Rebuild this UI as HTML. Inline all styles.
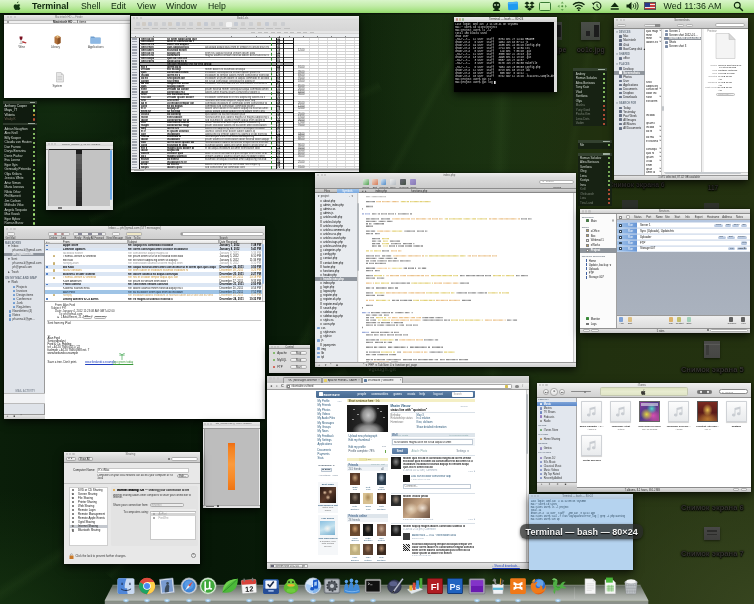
<!DOCTYPE html>
<html><head><meta charset="utf-8"><title>Desktop</title><style>
html,body{margin:0;padding:0;background:#0c200c;}
body{width:754px;height:604px;overflow:hidden;position:relative;font-family:"Liberation Sans",sans-serif;}
#d{position:absolute;left:0;top:0;width:754px;height:604px;overflow:hidden;will-change:transform;}
#d div,#d svg{position:absolute;box-sizing:border-box;}
#d .t{white-space:nowrap;line-height:1.22;}
#d .w{box-shadow:0 2.5px 8px rgba(0,0,0,0.7),0 0 1.5px rgba(0,0,0,.5);overflow:hidden;}
#d .m{font-family:"Liberation Mono",monospace;}
</style></head><body><div id="d">
<!-- wallpaper -->
<div style="left:0;top:0;width:754px;height:604px;background:radial-gradient(ellipse 260px 200px at 760px 610px, rgba(56,70,32,0.95), rgba(56,70,32,0) 100%),radial-gradient(ellipse 170px 150px at 0px 640px, rgba(24,54,18,0.9), rgba(24,54,18,0) 100%),radial-gradient(ellipse 120px 120px at 60px 90px, rgba(22,50,18,0.8), rgba(22,50,18,0) 100%),radial-gradient(ellipse 110px 260px at 470px 60px, rgba(28,54,18,0.55), rgba(28,54,18,0) 100%),linear-gradient(90deg,#0a1e09 0%,#061606 22%,#081a08 36%,#0e220a 46%,#142a0e 56%,#1a3010 66%,#21300f 80%,#243210 100%);"></div>
<div style="left:484px;top:0;width:22px;height:604px;transform:rotate(2deg);background:linear-gradient(90deg,rgba(70,110,50,0),rgba(70,110,50,0.13),rgba(70,110,50,0));"></div>
<div style="left:-40px;top:612px;width:460px;height:16px;transform-origin:0 50%;transform:rotate(-33deg);background:linear-gradient(180deg,rgba(120,170,80,0),rgba(120,170,80,0.06),rgba(120,170,80,0));"></div>
<div style="left:110px;top:570px;width:520px;height:14px;transform-origin:0 50%;transform:rotate(-50deg);background:linear-gradient(180deg,rgba(120,170,80,0),rgba(120,170,80,0.05),rgba(120,170,80,0));"></div>
<div style="left:300px;top:340px;width:400px;height:12px;transform-origin:0 50%;transform:rotate(-62deg);background:linear-gradient(180deg,rgba(120,170,80,0),rgba(120,170,80,0.05),rgba(120,170,80,0));"></div>
<div style="left:90px;top:215px;width:320px;height:12px;transform-origin:0 50%;transform:rotate(-25deg);background:linear-gradient(180deg,rgba(120,170,80,0),rgba(120,170,80,0.05),rgba(120,170,80,0));"></div>
<div style="left:560px;top:210px;width:260px;height:12px;transform-origin:0 50%;transform:rotate(-80deg);background:linear-gradient(180deg,rgba(120,170,80,0),rgba(120,170,80,0.04),rgba(120,170,80,0));"></div>
<div style="left:0px;top:160px;width:300px;height:18px;transform-origin:0 50%;transform:rotate(-12deg);background:linear-gradient(180deg,rgba(120,170,80,0),rgba(120,170,80,0.04),rgba(120,170,80,0));"></div>
<!-- deskicons -->
<div style="left:543px;top:22px;width:19px;height:18px;background:linear-gradient(180deg,#3e423c,#363a34);"><div style="left:13px;top:3px;width:5px;height:12px;background:#1c1c1c;"></div></div>
<div style="left:581.3px;top:22px;width:19.2px;height:18px;background:linear-gradient(180deg,#4a4e48,#40443e);box-shadow:0 1px 2px rgba(0,0,0,.5);"><div style="left:12.5px;top:3px;width:5px;height:12px;background:#1c1c1c;"></div><div style="left:5px;top:9px;width:4px;height:5px;background:#222;"></div></div>
<div class="t" style="left:489px;top:46.2px;width:120px;text-align:center;font-size:6.8px;font-weight:bold;color:#36362f;text-shadow:0 1px 1.500px #000,0 0 2px #000,0 0 1px #000;">Screen.jpe</div>
<div class="t" style="left:530.7px;top:46.2px;width:120px;text-align:center;font-size:6.8px;font-weight:bold;color:#36362f;text-shadow:0 1px 1.500px #000,0 0 2px #000,0 0 1px #000;">оо1с.jpg</div>
<div class="t" style="left:576.5px;top:181.2px;width:120px;text-align:center;font-size:6.8px;font-weight:bold;color:#36362f;text-shadow:0 1px 1.500px #000,0 0 2px #000,0 0 1px #000;">Снимок экрана 6</div>
<div class="t" style="left:653px;top:183.5px;width:120px;text-align:center;font-size:6.5px;font-weight:bold;color:#36362f;text-shadow:0 1px 1.500px #000,0 0 2px #000,0 0 1px #000;">117</div>
<div style="left:622px;top:200px;width:16px;height:9px;background:#2c302a;"></div>
<div style="left:704px;top:203px;width:15px;height:7px;background:#30342c;"></div>
<div style="left:704px;top:341.2px;width:16.2px;height:17px;background:linear-gradient(180deg,#4e4e4c,#464644);box-shadow:0 1px 2px rgba(0,0,0,.5);"><div style="left:2px;top:3px;width:3px;height:11px;background:#3c3c3a;"></div><div style="left:0px;top:2.5px;width:16.2px;height:0.6px;background:#5c5c5a;"></div></div>
<div class="t" style="left:652.3px;top:365.4px;width:120px;text-align:center;font-size:7.6px;font-weight:bold;color:#36362f;text-shadow:0 1px 1.500px #000,0 0 2px #000,0 0 1px #000;">Снимок экрана 5</div>
<div class="t" style="left:652.3px;top:503.2px;width:120px;text-align:center;font-size:7.6px;font-weight:bold;color:#36362f;text-shadow:0 1px 1.500px #000,0 0 2px #000,0 0 1px #000;">Снимок экрана 6</div>
<div style="left:704px;top:527px;width:16px;height:13px;background:linear-gradient(180deg,#484846,#3e3e3c);box-shadow:0 1px 2px rgba(0,0,0,.5);"><div style="left:3px;top:3px;width:10px;height:1.5px;background:#2c2c2a;"></div><div style="left:3px;top:6.5px;width:10px;height:1.5px;background:#2c2c2a;"></div></div>
<div class="t" style="left:652.3px;top:549.2px;width:120px;text-align:center;font-size:7.6px;font-weight:bold;color:#36362f;text-shadow:0 1px 1.500px #000,0 0 2px #000,0 0 1px #000;">Снимок экрана 7</div>
<div class="t" style="left:368.600px;top:366.200px;font-size:5.600px;color:#55624f;letter-spacing:0.150px;">vgough.git</div>
<!-- finder1 -->
<div class="w" style="left:4px;top:15px;width:126px;height:83px;background:#fff;"><div style="left:0px;top:0px;width:126px;height:5px;background:linear-gradient(180deg,#ececec,#d2d2d2);"></div><div style="left:0px;top:5px;width:126px;height:4.2px;background:#efefef;border-top:0.5px solid #b8b8b8;border-bottom:0.5px solid #c8c8c8;"></div><div style="left:2.5px;top:1.2px;width:2.2px;height:2.2px;border-radius:50%;background:#c4c4c4;"></div><div style="left:6.1px;top:1.2px;width:2.2px;height:2.2px;border-radius:50%;background:#c4c4c4;"></div><div style="left:9.7px;top:1.2px;width:2.2px;height:2.2px;border-radius:50%;background:#c4c4c4;"></div><div class="t" style="left:51px;top:1.2px;font-size:2.6px;color:#777;">Macintosh HD — Finder</div><div class="t" style="left:49px;top:5.9px;font-size:2.9px;color:#222;"><b>Macintosh HD </b>— 4 items</div><div style="left:3px;top:6.1px;width:2px;height:2px;background:#888;border-radius:50%;"></div><svg style="left:13px;top:20px" width="11" height="11" viewBox="0 0 22 22"><path d="M5 3h6c0 5-1 7-3 7s-3-2-3-7z" fill="#7a1020"/><path d="M8 10v6M5 17h6" stroke="#999" stroke-width="1.3"/><path d="M11 12l8 3-1 2-8-2z" fill="#b03030"/></svg><div class="t" style="left:14.5px;top:31px;font-size:2.9px;color:#444;">Wine</div><svg style="left:49px;top:19px" width="9" height="11" viewBox="0 0 18 22"><path d="M3 6l6-3 6 3v12l-6 3-6-3z" fill="#b0703a"/><path d="M9 9v12l6-3V6z" fill="#8a5226"/><path d="M3 6l6 3 6-3-6-3z" fill="#d29a60"/><path d="M7 2l2 6 2-6z" fill="#e8d0a0"/></svg><div class="t" style="left:47px;top:31px;font-size:2.9px;color:#444;">Library</div><svg style="left:86px;top:20px" width="11" height="9" viewBox="0 0 22 18"><path d="M1 3h7l2 2h11v12H1z" fill="#6f9fd0"/><path d="M1 6h20v11H1z" fill="#8db8e4"/></svg><div class="t" style="left:84px;top:31px;font-size:2.9px;color:#444;">Applications</div><svg style="left:51.500px;top:57px" width="8" height="10.500" viewBox="0 0 16 21"><path d="M1 1h9l5 5v14H1z" fill="#e6e6e6" stroke="#aaa" stroke-width="1"/><path d="M10 1v5h5z" fill="#c8c8c8"/><path d="M3 9h9M3 12h9M3 15h9" stroke="#bbb" stroke-width="1"/></svg><div class="t" style="left:48.5px;top:69.5px;font-size:2.9px;color:#444;">System</div></div>
<!-- sheet -->
<div class="w" style="left:131px;top:16px;width:228px;height:155.5px;background:#fff;"><div style="left:0px;top:0px;width:228px;height:3.5px;background:linear-gradient(180deg,#ececec,#d6d6d6);"></div><div style="left:2.0px;top:0.8px;width:2px;height:2px;border-radius:50%;background:#c6c6c6;"></div><div style="left:5.4px;top:0.8px;width:2px;height:2px;border-radius:50%;background:#c6c6c6;"></div><div style="left:8.8px;top:0.8px;width:2px;height:2px;border-radius:50%;background:#c6c6c6;"></div><div class="t" style="left:106px;top:0.8px;font-size:2.6px;color:#666;">Book1.xls</div><div style="left:0px;top:3.5px;width:228px;height:14px;background:linear-gradient(180deg,#dedede,#d4d4d4);"></div><div style="left:5px;top:6px;width:4px;height:4px;background:#b8bcc4;border-radius:0.8px;opacity:0.45;"></div><div style="left:11px;top:6px;width:4px;height:4px;background:#c4b8a8;border-radius:0.8px;opacity:0.45;"></div><div style="left:17px;top:6px;width:4px;height:4px;background:#a8b4c8;border-radius:0.8px;opacity:0.45;"></div><div style="left:23px;top:6px;width:4px;height:4px;background:#bcbcbc;border-radius:0.8px;opacity:0.45;"></div><div style="left:31px;top:6px;width:4px;height:4px;background:#b8bcc4;border-radius:0.8px;opacity:0.45;"></div><div style="left:37px;top:6px;width:4px;height:4px;background:#c4b8a8;border-radius:0.8px;opacity:0.45;"></div><div style="left:45px;top:6px;width:4px;height:4px;background:#a8b4c8;border-radius:0.8px;opacity:0.45;"></div><div style="left:51px;top:6px;width:4px;height:4px;background:#bcbcbc;border-radius:0.8px;opacity:0.45;"></div><div style="left:58px;top:6px;width:4px;height:4px;background:#b8bcc4;border-radius:0.8px;opacity:0.45;"></div><div style="left:66px;top:6px;width:4px;height:4px;background:#c4b8a8;border-radius:0.8px;opacity:0.45;"></div><div style="left:73px;top:6px;width:4px;height:4px;background:#a8b4c8;border-radius:0.8px;opacity:0.45;"></div><div style="left:80px;top:6px;width:4px;height:4px;background:#bcbcbc;border-radius:0.8px;opacity:0.45;"></div><div style="left:88px;top:6px;width:4px;height:4px;background:#b8bcc4;border-radius:0.8px;opacity:0.45;"></div><div style="left:95px;top:6px;width:4px;height:4px;background:#c4b8a8;border-radius:0.8px;opacity:0.45;"></div><div style="left:103px;top:6px;width:4px;height:4px;background:#a8b4c8;border-radius:0.8px;opacity:0.45;"></div><div style="left:110px;top:6px;width:4px;height:4px;background:#bcbcbc;border-radius:0.8px;opacity:0.45;"></div><div style="left:118px;top:6px;width:4px;height:4px;background:#b8bcc4;border-radius:0.8px;opacity:0.45;"></div><div style="left:126px;top:6px;width:4px;height:4px;background:#c4b8a8;border-radius:0.8px;opacity:0.45;"></div><div style="left:134px;top:6px;width:4px;height:4px;background:#a8b4c8;border-radius:0.8px;opacity:0.45;"></div><div style="left:142px;top:6px;width:4px;height:4px;background:#bcbcbc;border-radius:0.8px;opacity:0.45;"></div><div style="left:150px;top:6px;width:4px;height:4px;background:#b8bcc4;border-radius:0.8px;opacity:0.45;"></div><div style="left:95px;top:5.5px;width:6px;height:5px;background:#f4f4f4;border-radius:1px;"></div><div style="left:3.0px;top:12.2px;width:6.5px;height:1.3px;background:#aaa;opacity:0.55;"></div><div style="left:11.8px;top:12.2px;width:6.5px;height:1.3px;background:#aaa;opacity:0.55;"></div><div style="left:20.6px;top:12.2px;width:6.5px;height:1.3px;background:#aaa;opacity:0.55;"></div><div style="left:29.400000000000002px;top:12.2px;width:6.5px;height:1.3px;background:#aaa;opacity:0.55;"></div><div style="left:38.2px;top:12.2px;width:6.5px;height:1.3px;background:#aaa;opacity:0.55;"></div><div style="left:47.0px;top:12.2px;width:6.5px;height:1.3px;background:#aaa;opacity:0.55;"></div><div style="left:55.800000000000004px;top:12.2px;width:6.5px;height:1.3px;background:#aaa;opacity:0.55;"></div><div style="left:64.60000000000001px;top:12.2px;width:6.5px;height:1.3px;background:#aaa;opacity:0.55;"></div><div style="left:73.4px;top:12.2px;width:6.5px;height:1.3px;background:#aaa;opacity:0.55;"></div><div style="left:82.2px;top:12.2px;width:6.5px;height:1.3px;background:#aaa;opacity:0.55;"></div><div style="left:91.0px;top:12.2px;width:6.5px;height:1.3px;background:#aaa;opacity:0.55;"></div><div style="left:99.80000000000001px;top:12.2px;width:6.5px;height:1.3px;background:#aaa;opacity:0.55;"></div><div style="left:108.60000000000001px;top:12.2px;width:6.5px;height:1.3px;background:#aaa;opacity:0.55;"></div><div style="left:117.4px;top:12.2px;width:6.5px;height:1.3px;background:#aaa;opacity:0.55;"></div><div style="left:126.20000000000002px;top:12.2px;width:6.5px;height:1.3px;background:#aaa;opacity:0.55;"></div><div style="left:135.0px;top:12.2px;width:6.5px;height:1.3px;background:#aaa;opacity:0.55;"></div><div style="left:143.8px;top:12.2px;width:6.5px;height:1.3px;background:#aaa;opacity:0.55;"></div><div style="left:152.60000000000002px;top:12.2px;width:6.5px;height:1.3px;background:#aaa;opacity:0.55;"></div><div style="left:0px;top:15.2px;width:228px;height:2.3px;background:#e6e6e6;"></div><div style="left:120.0px;top:15.7px;width:4px;height:1.2px;background:#999;opacity:0.5;"></div><div style="left:126.5px;top:15.7px;width:4px;height:1.2px;background:#999;opacity:0.5;"></div><div style="left:133.0px;top:15.7px;width:4px;height:1.2px;background:#999;opacity:0.5;"></div><div style="left:139.5px;top:15.7px;width:4px;height:1.2px;background:#999;opacity:0.5;"></div><div style="left:146.0px;top:15.7px;width:4px;height:1.2px;background:#999;opacity:0.5;"></div><div style="left:152.5px;top:15.7px;width:4px;height:1.2px;background:#999;opacity:0.5;"></div><div style="left:159.0px;top:15.7px;width:4px;height:1.2px;background:#999;opacity:0.5;"></div><div style="left:165.5px;top:15.7px;width:4px;height:1.2px;background:#999;opacity:0.5;"></div><div style="left:172.0px;top:15.7px;width:4px;height:1.2px;background:#999;opacity:0.5;"></div><div style="left:178.5px;top:15.7px;width:4px;height:1.2px;background:#999;opacity:0.5;"></div><div style="left:0px;top:17.5px;width:228px;height:4px;background:#eceef0;border-bottom:0.5px solid #999;"></div><div style="left:0px;top:21.5px;width:228px;height:131.3px;background:#fff;"></div><div style="left:0px;top:21.5px;width:8px;height:131.3px;background:#e6e8ec;"></div><div style="left:4px;top:19.6px;width:1.3px;height:1.3px;background:#555;opacity:.7"></div><div style="left:22px;top:19.6px;width:1.3px;height:1.3px;background:#555;opacity:.7"></div><div style="left:55px;top:19.6px;width:1.3px;height:1.3px;background:#555;opacity:.7"></div><div style="left:100px;top:19.6px;width:1.3px;height:1.3px;background:#555;opacity:.7"></div><div style="left:125px;top:19.6px;width:1.3px;height:1.3px;background:#555;opacity:.7"></div><div style="left:138px;top:19.6px;width:1.3px;height:1.3px;background:#555;opacity:.7"></div><div style="left:148px;top:19.6px;width:1.3px;height:1.3px;background:#555;opacity:.7"></div><div style="left:158px;top:19.6px;width:1.3px;height:1.3px;background:#555;opacity:.7"></div><div style="left:172px;top:19.6px;width:1.3px;height:1.3px;background:#555;opacity:.7"></div><div style="left:186px;top:19.6px;width:1.3px;height:1.3px;background:#555;opacity:.7"></div><div style="left:200px;top:19.6px;width:1.3px;height:1.3px;background:#555;opacity:.7"></div><div style="left:214px;top:19.6px;width:1.3px;height:1.3px;background:#555;opacity:.7"></div><div style="left:162px;top:21.5px;width:0.5px;height:131.3px;background:#dcdcdc;"></div><div style="left:178px;top:21.5px;width:0.5px;height:131.3px;background:#dcdcdc;"></div><div style="left:187px;top:21.5px;width:0.5px;height:131.3px;background:#dcdcdc;"></div><div style="left:196px;top:21.5px;width:0.5px;height:131.3px;background:#dcdcdc;"></div><div style="left:205px;top:21.5px;width:0.5px;height:131.3px;background:#dcdcdc;"></div><div style="left:214px;top:21.5px;width:0.5px;height:131.3px;background:#dcdcdc;"></div><div style="left:223px;top:21.5px;width:0.5px;height:131.3px;background:#dcdcdc;"></div><div style="left:1.2px;top:22.1px;width:5.3px;height:1.5px;background:#5a6070;opacity:.5"></div><div style="left:8px;top:23.893617021276597px;width:220px;height:0.4px;background:#d2d2d2;"></div><div style="left:1.2px;top:24.893617021276597px;width:5.3px;height:1.5px;background:#5a6070;opacity:.5"></div><div style="left:8px;top:26.687234042553193px;width:220px;height:0.4px;background:#d2d2d2;"></div><div style="left:1.2px;top:27.687234042553193px;width:5.3px;height:1.5px;background:#5a6070;opacity:.5"></div><div style="left:8px;top:29.48085106382979px;width:220px;height:0.4px;background:#d2d2d2;"></div><div style="left:1.2px;top:30.48085106382979px;width:5.3px;height:1.5px;background:#5a6070;opacity:.5"></div><div style="left:8px;top:32.274468085106385px;width:220px;height:0.4px;background:#d2d2d2;"></div><div style="left:1.2px;top:33.274468085106385px;width:5.3px;height:1.5px;background:#5a6070;opacity:.5"></div><div style="left:8px;top:35.06808510638298px;width:220px;height:0.4px;background:#d2d2d2;"></div><div style="left:1.2px;top:36.06808510638298px;width:5.3px;height:1.5px;background:#5a6070;opacity:.5"></div><div style="left:8px;top:37.861702127659576px;width:220px;height:0.4px;background:#d2d2d2;"></div><div style="left:1.2px;top:38.861702127659576px;width:5.3px;height:1.5px;background:#5a6070;opacity:.5"></div><div style="left:8px;top:40.65531914893617px;width:220px;height:0.4px;background:#d2d2d2;"></div><div style="left:1.2px;top:41.65531914893617px;width:5.3px;height:1.5px;background:#5a6070;opacity:.5"></div><div style="left:8px;top:43.44893617021277px;width:220px;height:0.4px;background:#d2d2d2;"></div><div style="left:1.2px;top:44.44893617021277px;width:5.3px;height:1.5px;background:#5a6070;opacity:.5"></div><div style="left:8px;top:46.242553191489364px;width:220px;height:0.4px;background:#d2d2d2;"></div><div style="left:1.2px;top:47.242553191489364px;width:5.3px;height:1.5px;background:#5a6070;opacity:.5"></div><div style="left:8px;top:49.03617021276596px;width:220px;height:0.4px;background:#d2d2d2;"></div><div style="left:8px;top:46.64255319148936px;width:154px;height:2.793617021276596px;background:#b4b4b4;"></div><div style="left:1.2px;top:50.03617021276596px;width:5.3px;height:1.5px;background:#5a6070;opacity:.5"></div><div style="left:8px;top:51.829787234042556px;width:220px;height:0.4px;background:#d2d2d2;"></div><div style="left:1.2px;top:52.829787234042556px;width:5.3px;height:1.5px;background:#5a6070;opacity:.5"></div><div style="left:8px;top:54.62340425531915px;width:220px;height:0.4px;background:#d2d2d2;"></div><div style="left:1.2px;top:55.62340425531915px;width:5.3px;height:1.5px;background:#5a6070;opacity:.5"></div><div style="left:8px;top:57.41702127659575px;width:220px;height:0.4px;background:#d2d2d2;"></div><div style="left:1.2px;top:58.41702127659575px;width:5.3px;height:1.5px;background:#5a6070;opacity:.5"></div><div style="left:8px;top:60.21063829787234px;width:220px;height:0.4px;background:#d2d2d2;"></div><div style="left:1.2px;top:61.21063829787234px;width:5.3px;height:1.5px;background:#5a6070;opacity:.5"></div><div style="left:8px;top:63.00425531914894px;width:220px;height:0.4px;background:#d2d2d2;"></div><div style="left:1.2px;top:64.00425531914894px;width:5.3px;height:1.5px;background:#5a6070;opacity:.5"></div><div style="left:8px;top:65.79787234042553px;width:220px;height:0.4px;background:#d2d2d2;"></div><div style="left:1.2px;top:66.79787234042553px;width:5.3px;height:1.5px;background:#5a6070;opacity:.5"></div><div style="left:8px;top:68.59148936170212px;width:220px;height:0.4px;background:#d2d2d2;"></div><div style="left:1.2px;top:69.59148936170212px;width:5.3px;height:1.5px;background:#5a6070;opacity:.5"></div><div style="left:8px;top:71.3851063829787px;width:220px;height:0.4px;background:#d2d2d2;"></div><div style="left:1.2px;top:72.38510638297872px;width:5.3px;height:1.5px;background:#5a6070;opacity:.5"></div><div style="left:8px;top:74.17872340425532px;width:220px;height:0.4px;background:#d2d2d2;"></div><div style="left:1.2px;top:75.17872340425532px;width:5.3px;height:1.5px;background:#5a6070;opacity:.5"></div><div style="left:8px;top:76.97234042553191px;width:220px;height:0.4px;background:#d2d2d2;"></div><div style="left:1.2px;top:77.97234042553191px;width:5.3px;height:1.5px;background:#5a6070;opacity:.5"></div><div style="left:8px;top:79.7659574468085px;width:220px;height:0.4px;background:#d2d2d2;"></div><div style="left:1.2px;top:80.7659574468085px;width:5.3px;height:1.5px;background:#5a6070;opacity:.5"></div><div style="left:8px;top:82.55957446808509px;width:220px;height:0.4px;background:#d2d2d2;"></div><div style="left:1.2px;top:83.5595744680851px;width:5.3px;height:1.5px;background:#5a6070;opacity:.5"></div><div style="left:8px;top:85.3531914893617px;width:220px;height:0.4px;background:#d2d2d2;"></div><div style="left:1.2px;top:86.3531914893617px;width:5.3px;height:1.5px;background:#5a6070;opacity:.5"></div><div style="left:8px;top:88.1468085106383px;width:220px;height:0.4px;background:#d2d2d2;"></div><div style="left:1.2px;top:89.1468085106383px;width:5.3px;height:1.5px;background:#5a6070;opacity:.5"></div><div style="left:8px;top:90.94042553191488px;width:220px;height:0.4px;background:#d2d2d2;"></div><div style="left:1.2px;top:91.94042553191488px;width:5.3px;height:1.5px;background:#5a6070;opacity:.5"></div><div style="left:8px;top:93.73404255319147px;width:220px;height:0.4px;background:#d2d2d2;"></div><div style="left:1.2px;top:94.73404255319149px;width:5.3px;height:1.5px;background:#5a6070;opacity:.5"></div><div style="left:8px;top:96.52765957446809px;width:220px;height:0.4px;background:#d2d2d2;"></div><div style="left:1.2px;top:97.52765957446809px;width:5.3px;height:1.5px;background:#5a6070;opacity:.5"></div><div style="left:8px;top:99.32127659574468px;width:220px;height:0.4px;background:#d2d2d2;"></div><div style="left:1.2px;top:100.32127659574468px;width:5.3px;height:1.5px;background:#5a6070;opacity:.5"></div><div style="left:8px;top:102.11489361702127px;width:220px;height:0.4px;background:#d2d2d2;"></div><div style="left:1.2px;top:103.11489361702127px;width:5.3px;height:1.5px;background:#5a6070;opacity:.5"></div><div style="left:8px;top:104.90851063829786px;width:220px;height:0.4px;background:#d2d2d2;"></div><div style="left:1.2px;top:105.90851063829787px;width:5.3px;height:1.5px;background:#5a6070;opacity:.5"></div><div style="left:8px;top:107.70212765957447px;width:220px;height:0.4px;background:#d2d2d2;"></div><div style="left:1.2px;top:108.70212765957447px;width:5.3px;height:1.5px;background:#5a6070;opacity:.5"></div><div style="left:8px;top:110.49574468085106px;width:220px;height:0.4px;background:#d2d2d2;"></div><div style="left:1.2px;top:111.49574468085106px;width:5.3px;height:1.5px;background:#5a6070;opacity:.5"></div><div style="left:8px;top:113.28936170212765px;width:220px;height:0.4px;background:#d2d2d2;"></div><div style="left:1.2px;top:114.28936170212765px;width:5.3px;height:1.5px;background:#5a6070;opacity:.5"></div><div style="left:8px;top:116.08297872340424px;width:220px;height:0.4px;background:#d2d2d2;"></div><div style="left:1.2px;top:117.08297872340425px;width:5.3px;height:1.5px;background:#5a6070;opacity:.5"></div><div style="left:8px;top:118.87659574468086px;width:220px;height:0.4px;background:#d2d2d2;"></div><div style="left:1.2px;top:119.87659574468086px;width:5.3px;height:1.5px;background:#5a6070;opacity:.5"></div><div style="left:8px;top:121.67021276595744px;width:220px;height:0.4px;background:#d2d2d2;"></div><div style="left:1.2px;top:122.67021276595744px;width:5.3px;height:1.5px;background:#5a6070;opacity:.5"></div><div style="left:8px;top:124.46382978723403px;width:220px;height:0.4px;background:#d2d2d2;"></div><div style="left:1.2px;top:125.46382978723403px;width:5.3px;height:1.5px;background:#5a6070;opacity:.5"></div><div style="left:8px;top:127.25744680851062px;width:220px;height:0.4px;background:#d2d2d2;"></div><div style="left:1.2px;top:128.25744680851065px;width:5.3px;height:1.5px;background:#5a6070;opacity:.5"></div><div style="left:8px;top:130.05106382978724px;width:220px;height:0.4px;background:#d2d2d2;"></div><div style="left:1.2px;top:131.05106382978724px;width:5.3px;height:1.5px;background:#5a6070;opacity:.5"></div><div style="left:8px;top:132.84468085106383px;width:220px;height:0.4px;background:#d2d2d2;"></div><div style="left:1.2px;top:133.84468085106383px;width:5.3px;height:1.5px;background:#5a6070;opacity:.5"></div><div style="left:8px;top:135.63829787234042px;width:220px;height:0.4px;background:#d2d2d2;"></div><div style="left:1.2px;top:136.63829787234042px;width:5.3px;height:1.5px;background:#5a6070;opacity:.5"></div><div style="left:8px;top:138.431914893617px;width:220px;height:0.4px;background:#d2d2d2;"></div><div style="left:1.2px;top:139.431914893617px;width:5.3px;height:1.5px;background:#5a6070;opacity:.5"></div><div style="left:8px;top:141.2255319148936px;width:220px;height:0.4px;background:#d2d2d2;"></div><div style="left:1.2px;top:142.22553191489362px;width:5.3px;height:1.5px;background:#5a6070;opacity:.5"></div><div style="left:8px;top:144.0191489361702px;width:220px;height:0.4px;background:#d2d2d2;"></div><div style="left:1.2px;top:145.0191489361702px;width:5.3px;height:1.5px;background:#5a6070;opacity:.5"></div><div style="left:8px;top:146.8127659574468px;width:220px;height:0.4px;background:#d2d2d2;"></div><div style="left:1.2px;top:147.8127659574468px;width:5.3px;height:1.5px;background:#5a6070;opacity:.5"></div><div style="left:8px;top:149.6063829787234px;width:220px;height:0.4px;background:#d2d2d2;"></div><div style="left:1.2px;top:150.60638297872342px;width:5.3px;height:1.5px;background:#5a6070;opacity:.5"></div><div style="left:8px;top:152.4px;width:220px;height:0.4px;background:#d2d2d2;"></div><div style="left:8px;top:23.993617021276595px;width:154px;height:0.6px;background:#555;"></div><div style="left:8px;top:32.374468085106386px;width:154px;height:0.6px;background:#555;"></div><div style="left:8px;top:40.755319148936174px;width:154px;height:0.6px;background:#555;"></div><div style="left:8px;top:54.72340425531915px;width:154px;height:0.6px;background:#555;"></div><div style="left:8px;top:60.310638297872345px;width:154px;height:0.6px;background:#555;"></div><div style="left:8px;top:71.48510638297873px;width:154px;height:0.6px;background:#555;"></div><div style="left:8px;top:77.07234042553192px;width:154px;height:0.6px;background:#555;"></div><div style="left:8px;top:82.65957446808511px;width:154px;height:0.6px;background:#555;"></div><div style="left:8px;top:88.2468085106383px;width:154px;height:0.6px;background:#555;"></div><div style="left:8px;top:110.59574468085107px;width:154px;height:0.6px;background:#555;"></div><div style="left:8px;top:124.56382978723404px;width:154px;height:0.6px;background:#555;"></div><div style="left:8px;top:135.7382978723404px;width:154px;height:0.6px;background:#555;"></div><div style="left:8px;top:146.9127659574468px;width:154px;height:0.6px;background:#555;"></div><div style="left:8px;top:26.58723404255319px;width:154px;height:1px;background:#111;"></div><div style="left:8px;top:46.14255319148936px;width:154px;height:1px;background:#111;"></div><div style="left:8px;top:48.93617021276596px;width:154px;height:1px;background:#111;"></div><div style="left:8px;top:65.69787234042553px;width:154px;height:1px;background:#111;"></div><div style="left:8px;top:96.4276595744681px;width:154px;height:1px;background:#111;"></div><div style="left:8px;top:104.80851063829788px;width:154px;height:1px;background:#111;"></div><div style="left:8px;top:118.77659574468086px;width:154px;height:1px;background:#111;"></div><div style="left:8px;top:129.95106382978724px;width:154px;height:1px;background:#111;"></div><div style="left:8px;top:141.12553191489363px;width:154px;height:1px;background:#111;"></div><div style="left:8px;top:21.5px;width:1px;height:131.3px;background:#111;"></div><div style="left:145px;top:21.5px;width:1px;height:131.3px;background:#111;"></div><div style="left:152px;top:21.5px;width:1px;height:131.3px;background:#111;"></div><div style="left:162px;top:21.5px;width:1.1px;height:131.3px;background:#111;"></div><div style="left:139.5px;top:21.5px;width:0.6px;height:131.3px;border-left:0.6px dashed #2a8a2a;"></div><div class="t" style="left:10px;top:21.6px;font-size:2.7px;color:#000;width:13px;height:3.2px;overflow:hidden;font-weight:bold;">Item ad do exercitation</div><div class="t" style="left:36px;top:21.6px;font-size:2.7px;color:#000;width:30px;height:3.2px;overflow:hidden;font-weight:bold;">sit amet adipiscing quis sit commodo</div><div class="t" style="left:146.3px;top:21.6px;font-size:2.6px;color:#000;font-weight:bold;height:3.2px;">37</div><div class="t" style="left:10px;top:24.393617021276597px;font-size:2.7px;color:#000;width:13px;height:3.2px;overflow:hidden;font-weight:bold;">Item dolor consectetur laboris</div><div class="t" style="left:36px;top:24.393617021276597px;font-size:2.7px;color:#000;width:27px;height:3.2px;overflow:hidden;font-weight:bold;">amet et consectetur laboris sit elit</div><div class="t" style="left:146.3px;top:24.393617021276597px;font-size:2.6px;color:#000;font-weight:bold;height:3.2px;">38</div><div class="t" style="left:10px;top:27.187234042553193px;font-size:2.7px;color:#000;width:13px;height:3.2px;overflow:hidden;font-weight:bold;">Item sit exercitation sit</div><div class="t" style="left:36px;top:27.187234042553193px;font-size:2.7px;color:#000;width:22px;height:3.2px;overflow:hidden;font-weight:bold;">dolor sed aliqua ullamco do elit</div><div class="t" style="left:146.3px;top:27.187234042553193px;font-size:2.6px;color:#000;font-weight:bold;height:3.2px;">83</div><div class="t" style="left:10px;top:29.98085106382979px;font-size:2.7px;color:#000;width:13px;height:3.2px;overflow:hidden;font-weight:bold;">Item enim tempor adipiscing</div><div class="t" style="left:36px;top:29.98085106382979px;font-size:2.7px;color:#000;width:22px;height:3.2px;overflow:hidden;font-weight:bold;">quis adipiscing amet sit ut ea</div><div class="t" style="left:74px;top:29.98085106382979px;font-size:2.6px;color:#3a3a3a;width:64px;height:3.2px;overflow:hidden;">ad aliquip aliquip quis enim et tempor et consectetur enim consequat ea minim nisi</div><div class="t" style="left:146.3px;top:29.98085106382979px;font-size:2.6px;color:#000;font-weight:bold;height:3.2px;">46</div><div class="t" style="left:10px;top:32.774468085106385px;font-size:2.7px;color:#000;width:13px;height:3.2px;overflow:hidden;font-weight:bold;">Item amet elit commodo</div><div class="t" style="left:36px;top:32.774468085106385px;font-size:2.7px;color:#000;width:20px;height:3.2px;overflow:hidden;font-weight:bold;">eiusmod minim do ea ullamco dolor</div><div class="t" style="left:146.3px;top:32.774468085106385px;font-size:2.6px;color:#000;font-weight:bold;height:3.2px;">19</div><div class="t" style="left:10px;top:35.56808510638298px;font-size:2.7px;color:#000;width:13px;height:3.2px;overflow:hidden;font-weight:bold;">Item ad minim veniam</div><div class="t" style="left:36px;top:35.56808510638298px;font-size:2.7px;color:#000;width:13px;height:3.2px;overflow:hidden;font-weight:bold;">aliquip amet consectetur magna ex amet</div><div class="t" style="left:74px;top:35.56808510638298px;font-size:2.6px;color:#3a3a3a;width:50px;height:3.2px;overflow:hidden;">enim nisi aliqua nostrud veniam ipsum aliquip veniam eiusmod elit ea sit ut aliqua</div><div class="t" style="left:146.3px;top:35.56808510638298px;font-size:2.6px;color:#000;font-weight:bold;height:3.2px;">26</div><div class="t" style="left:10px;top:38.361702127659576px;font-size:2.7px;color:#000;width:13px;height:3.2px;overflow:hidden;font-weight:bold;">Item et exercitation exercitation</div><div class="t" style="left:36px;top:38.361702127659576px;font-size:2.7px;color:#000;width:13px;height:3.2px;overflow:hidden;font-weight:bold;">consectetur eiusmod nisi exercitation magna sed</div><div class="t" style="left:74px;top:38.361702127659576px;font-size:2.6px;color:#3a3a3a;width:64px;height:3.2px;overflow:hidden;">magna ullamco veniam nostrud labore do consectetur tempor do labore labore lorem ea tempor</div><div class="t" style="left:146.3px;top:38.361702127659576px;font-size:2.6px;color:#000;font-weight:bold;height:3.2px;">43</div><div class="t" style="left:10px;top:41.15531914893617px;font-size:2.7px;color:#000;width:13px;height:3.2px;overflow:hidden;font-weight:bold;">Item aliqua lorem do</div><div class="t" style="left:36px;top:41.15531914893617px;font-size:2.7px;color:#000;width:20px;height:3.2px;overflow:hidden;font-weight:bold;">quis ad sed commodo sit aliquip</div><div class="t" style="left:146.3px;top:41.15531914893617px;font-size:2.6px;color:#000;font-weight:bold;height:3.2px;">97</div><div class="t" style="left:10px;top:43.94893617021277px;font-size:2.7px;color:#000;width:13px;height:3.2px;overflow:hidden;font-weight:bold;">Item exercitation exercitation exercitation</div><div class="t" style="left:36px;top:43.94893617021277px;font-size:2.7px;color:#000;width:20px;height:3.2px;overflow:hidden;font-weight:bold;">adipiscing ex exercitation sit incididunt amet</div><div class="t" style="left:146.3px;top:43.94893617021277px;font-size:2.6px;color:#000;font-weight:bold;height:3.2px;">66</div><div class="t" style="left:36px;top:46.742553191489364px;font-size:2.7px;color:#000;height:3px;"><b>Section heading text for this group</b></div><div class="t" style="left:10px;top:49.53617021276596px;font-size:2.7px;color:#000;width:6px;height:3.2px;overflow:hidden;font-weight:bold;">elit minim sit</div><div class="t" style="left:36px;top:49.53617021276596px;font-size:2.7px;color:#000;width:14px;height:3.2px;overflow:hidden;font-weight:bold;">lorem do adipiscing quis ipsum amet</div><div class="t" style="left:146.3px;top:49.53617021276596px;font-size:2.6px;color:#000;font-weight:bold;height:3.2px;">88</div><div class="t" style="left:167px;top:49.53617021276596px;font-size:2.6px;color:#333;height:3.2px;">91.00</div><div class="t" style="left:10px;top:52.329787234042556px;font-size:2.7px;color:#000;width:10px;height:3.2px;overflow:hidden;font-weight:bold;">veniam quis ex</div><div class="t" style="left:36px;top:52.329787234042556px;font-size:2.7px;color:#000;width:14px;height:3.2px;overflow:hidden;font-weight:bold;">elit ea aliquip ex ex enim</div><div class="t" style="left:74px;top:52.329787234042556px;font-size:2.6px;color:#3a3a3a;width:40px;height:3.2px;overflow:hidden;">minim dolore ex eiusmod consequat ipsum ut consequat quis do ipsum consequat enim consectetur</div><div class="t" style="left:146.3px;top:52.329787234042556px;font-size:2.6px;color:#000;font-weight:bold;height:3.2px;">99</div><div class="t" style="left:10px;top:55.12340425531915px;font-size:2.7px;color:#000;width:6px;height:3.2px;overflow:hidden;font-weight:bold;">quis eiusmod veniam</div><div class="t" style="left:36px;top:55.12340425531915px;font-size:2.7px;color:#000;width:22px;height:3.2px;overflow:hidden;font-weight:bold;">commodo minim labore incididunt et exercitation</div><div class="t" style="left:74px;top:55.12340425531915px;font-size:2.6px;color:#3a3a3a;width:55px;height:3.2px;overflow:hidden;">incididunt consequat ea veniam ipsum ipsum magna ex dolore incididunt veniam nisi veniam quis</div><div class="t" style="left:146.3px;top:55.12340425531915px;font-size:2.6px;color:#000;font-weight:bold;height:3.2px;">20</div><div class="t" style="left:167px;top:55.12340425531915px;font-size:2.6px;color:#333;height:3.2px;">39.00</div><div class="t" style="left:10px;top:57.91702127659575px;font-size:2.7px;color:#000;width:8px;height:3.2px;overflow:hidden;font-weight:bold;">incididunt minim ut</div><div class="t" style="left:36px;top:57.91702127659575px;font-size:2.7px;color:#000;width:13px;height:3.2px;overflow:hidden;font-weight:bold;">lorem ex veniam consectetur elit nostrud</div><div class="t" style="left:74px;top:57.91702127659575px;font-size:2.6px;color:#3a3a3a;width:64px;height:3.2px;overflow:hidden;">incididunt ex tempor laboris minim consectetur exercitation aliquip exercitation consectetur eiusmod eiusmod sed ipsum</div><div class="t" style="left:146.3px;top:57.91702127659575px;font-size:2.6px;color:#000;font-weight:bold;height:3.2px;">29</div><div class="t" style="left:167px;top:57.91702127659575px;font-size:2.6px;color:#333;height:3.2px;">69.00</div><div class="t" style="left:10px;top:60.71063829787234px;font-size:2.7px;color:#000;width:7px;height:3.2px;overflow:hidden;font-weight:bold;">do ex veniam</div><div class="t" style="left:36px;top:60.71063829787234px;font-size:2.7px;color:#000;width:18px;height:3.2px;overflow:hidden;font-weight:bold;">sed ipsum lorem adipiscing consequat sed</div><div class="t" style="left:74px;top:60.71063829787234px;font-size:2.6px;color:#3a3a3a;width:64px;height:3.2px;overflow:hidden;">incididunt ut ipsum dolore ut aliqua commodo et ad dolore ullamco sed sit veniam</div><div class="t" style="left:146.3px;top:60.71063829787234px;font-size:2.6px;color:#000;font-weight:bold;height:3.2px;">68</div><div class="t" style="left:167px;top:60.71063829787234px;font-size:2.6px;color:#333;height:3.2px;">76.00</div><div class="t" style="left:10px;top:63.50425531914894px;font-size:2.7px;color:#000;width:8px;height:3.2px;overflow:hidden;font-weight:bold;">commodo sed do</div><div class="t" style="left:36px;top:63.50425531914894px;font-size:2.7px;color:#000;width:12px;height:3.2px;overflow:hidden;font-weight:bold;">nisi tempor lorem do tempor do</div><div class="t" style="left:74px;top:63.50425531914894px;font-size:2.6px;color:#3a3a3a;width:50px;height:3.2px;overflow:hidden;">elit sit ad consequat consequat ex adipiscing sit et incididunt magna dolor adipiscing commodo</div><div class="t" style="left:146.3px;top:63.50425531914894px;font-size:2.6px;color:#000;font-weight:bold;height:3.2px;">67</div><div class="t" style="left:167px;top:63.50425531914894px;font-size:2.6px;color:#333;height:3.2px;">18.00</div><div class="t" style="left:10px;top:66.29787234042553px;font-size:2.7px;color:#000;width:8px;height:3.2px;overflow:hidden;font-weight:bold;">ad commodo commodo</div><div class="t" style="left:36px;top:66.29787234042553px;font-size:2.7px;color:#000;width:22px;height:3.2px;overflow:hidden;font-weight:bold;">magna nisi commodo ex commodo et</div><div class="t" style="left:74px;top:66.29787234042553px;font-size:2.6px;color:#3a3a3a;width:62px;height:3.2px;overflow:hidden;">incididunt nisi sed ullamco elit exercitation nisi ad amet et laboris amet ut enim</div><div class="t" style="left:146.3px;top:66.29787234042553px;font-size:2.6px;color:#000;font-weight:bold;height:3.2px;">25</div><div class="t" style="left:10px;top:69.09148936170212px;font-size:2.7px;color:#000;width:6px;height:3.2px;overflow:hidden;font-weight:bold;">quis do dolore</div><div class="t" style="left:36px;top:69.09148936170212px;font-size:2.7px;color:#000;width:18px;height:3.2px;overflow:hidden;font-weight:bold;">aliquip labore adipiscing exercitation ea eiusmod</div><div class="t" style="left:146.3px;top:69.09148936170212px;font-size:2.6px;color:#000;font-weight:bold;height:3.2px;">38</div><div class="t" style="left:167px;top:69.09148936170212px;font-size:2.6px;color:#333;height:3.2px;">65.00</div><div class="t" style="left:10px;top:71.88510638297872px;font-size:2.7px;color:#000;width:6px;height:3.2px;overflow:hidden;font-weight:bold;">exercitation minim ullamco</div><div class="t" style="left:36px;top:71.88510638297872px;font-size:2.7px;color:#000;width:22px;height:3.2px;overflow:hidden;font-weight:bold;">veniam ad consectetur quis ipsum minim</div><div class="t" style="left:74px;top:71.88510638297872px;font-size:2.6px;color:#3a3a3a;width:64px;height:3.2px;overflow:hidden;">ipsum nostrud minim consequat aliqua commodo amet elit labore adipiscing consectetur dolore magna dolor</div><div class="t" style="left:146.3px;top:71.88510638297872px;font-size:2.6px;color:#000;font-weight:bold;height:3.2px;">33</div><div class="t" style="left:167px;top:71.88510638297872px;font-size:2.6px;color:#333;height:3.2px;">26.00</div><div class="t" style="left:10px;top:74.67872340425532px;font-size:2.7px;color:#000;width:7px;height:3.2px;overflow:hidden;font-weight:bold;">laboris dolore exercitation</div><div class="t" style="left:36px;top:74.67872340425532px;font-size:2.7px;color:#000;width:18px;height:3.2px;overflow:hidden;font-weight:bold;">commodo ea ad consectetur magna sit</div><div class="t" style="left:74px;top:74.67872340425532px;font-size:2.6px;color:#3a3a3a;width:55px;height:3.2px;overflow:hidden;">laboris amet magna ipsum consectetur dolore consectetur labore amet dolore elit aliquip lorem minim</div><div class="t" style="left:146.3px;top:74.67872340425532px;font-size:2.6px;color:#000;font-weight:bold;height:3.2px;">80</div><div class="t" style="left:167px;top:74.67872340425532px;font-size:2.6px;color:#333;height:3.2px;">44.00</div><div class="t" style="left:10px;top:77.47234042553191px;font-size:2.7px;color:#000;width:6px;height:3.2px;overflow:hidden;font-weight:bold;">sed dolor consequat</div><div class="t" style="left:36px;top:77.47234042553191px;font-size:2.7px;color:#000;width:22px;height:3.2px;overflow:hidden;font-weight:bold;">elit eiusmod dolore sit tempor incididunt</div><div class="t" style="left:146.3px;top:77.47234042553191px;font-size:2.6px;color:#000;font-weight:bold;height:3.2px;">90</div><div class="t" style="left:167px;top:77.47234042553191px;font-size:2.6px;color:#333;height:3.2px;">36.00</div><div class="t" style="left:10px;top:80.2659574468085px;font-size:2.7px;color:#000;width:10px;height:3.2px;overflow:hidden;font-weight:bold;">nisi commodo tempor</div><div class="t" style="left:36px;top:80.2659574468085px;font-size:2.7px;color:#000;width:27px;height:3.2px;overflow:hidden;font-weight:bold;">veniam ipsum dolore dolor lorem ipsum</div><div class="t" style="left:74px;top:80.2659574468085px;font-size:2.6px;color:#3a3a3a;width:60px;height:3.2px;overflow:hidden;">incididunt commodo ex et nisi adipiscing laboris ea exercitation commodo enim ut labore minim</div><div class="t" style="left:146.3px;top:80.2659574468085px;font-size:2.6px;color:#000;font-weight:bold;height:3.2px;">35</div><div class="t" style="left:10px;top:83.0595744680851px;font-size:2.7px;color:#000;width:5px;height:3.2px;overflow:hidden;font-weight:bold;">sed exercitation veniam</div><div class="t" style="left:36px;top:83.0595744680851px;font-size:2.7px;color:#000;width:12px;height:3.2px;overflow:hidden;font-weight:bold;">sed lorem amet dolore laboris eiusmod</div><div class="t" style="left:74px;top:83.0595744680851px;font-size:2.6px;color:#3a3a3a;width:50px;height:3.2px;overflow:hidden;">nostrud commodo aliqua et aliqua dolor aliquip tempor eiusmod magna nisi lorem dolore quis</div><div class="t" style="left:146.3px;top:83.0595744680851px;font-size:2.6px;color:#000;font-weight:bold;height:3.2px;">52</div><div class="t" style="left:10px;top:85.8531914893617px;font-size:2.7px;color:#000;width:6px;height:3.2px;overflow:hidden;font-weight:bold;">ad et dolor</div><div class="t" style="left:36px;top:85.8531914893617px;font-size:2.7px;color:#000;width:27px;height:3.2px;overflow:hidden;font-weight:bold;">ut veniam tempor lorem minim nostrud</div><div class="t" style="left:74px;top:85.8531914893617px;font-size:2.6px;color:#3a3a3a;width:62px;height:3.2px;overflow:hidden;">commodo incididunt et commodo lorem consectetur dolore consectetur do exercitation dolor exercitation ipsum enim</div><div class="t" style="left:146.3px;top:85.8531914893617px;font-size:2.6px;color:#000;font-weight:bold;height:3.2px;">48</div><div class="t" style="left:167px;top:85.8531914893617px;font-size:2.6px;color:#333;height:3.2px;">20.00</div><div class="t" style="left:10px;top:88.6468085106383px;font-size:2.7px;color:#000;width:6px;height:3.2px;overflow:hidden;font-weight:bold;">consequat do nostrud</div><div class="t" style="left:36px;top:88.6468085106383px;font-size:2.7px;color:#000;width:16px;height:3.2px;overflow:hidden;font-weight:bold;">ea do aliqua do dolor commodo</div><div class="t" style="left:74px;top:88.6468085106383px;font-size:2.6px;color:#3a3a3a;width:50px;height:3.2px;overflow:hidden;">commodo sed consequat commodo ipsum labore consectetur ipsum dolor sed quis adipiscing nostrud nisi</div><div class="t" style="left:146.3px;top:88.6468085106383px;font-size:2.6px;color:#000;font-weight:bold;height:3.2px;">81</div><div class="t" style="left:167px;top:88.6468085106383px;font-size:2.6px;color:#333;height:3.2px;">12.00</div><div class="t" style="left:10px;top:91.44042553191488px;font-size:2.7px;color:#000;width:5px;height:3.2px;overflow:hidden;font-weight:bold;">et ea dolore</div><div class="t" style="left:36px;top:91.44042553191488px;font-size:2.7px;color:#000;width:12px;height:3.2px;overflow:hidden;font-weight:bold;">aliquip amet commodo consectetur consequat amet</div><div class="t" style="left:74px;top:91.44042553191488px;font-size:2.6px;color:#3a3a3a;width:64px;height:3.2px;overflow:hidden;">dolore amet dolore et ut labore aliquip ea nostrud amet ex aliqua dolor incididunt</div><div class="t" style="left:146.3px;top:91.44042553191488px;font-size:2.6px;color:#000;font-weight:bold;height:3.2px;">19</div><div class="t" style="left:167px;top:91.44042553191488px;font-size:2.6px;color:#333;height:3.2px;">52.00</div><div class="t" style="left:10px;top:94.23404255319149px;font-size:2.7px;color:#000;width:10px;height:3.2px;overflow:hidden;font-weight:bold;">enim sed lorem</div><div class="t" style="left:36px;top:94.23404255319149px;font-size:2.7px;color:#000;width:13px;height:3.2px;overflow:hidden;font-weight:bold;">sit ea magna adipiscing ut ea</div><div class="t" style="left:74px;top:94.23404255319149px;font-size:2.6px;color:#3a3a3a;width:60px;height:3.2px;overflow:hidden;">aliqua aliquip aliquip aliquip elit incididunt enim consectetur ex ipsum aliqua aliquip amet commodo</div><div class="t" style="left:146.3px;top:94.23404255319149px;font-size:2.6px;color:#000;font-weight:bold;height:3.2px;">67</div><div class="t" style="left:10px;top:97.02765957446809px;font-size:2.7px;color:#000;width:8px;height:3.2px;overflow:hidden;font-weight:bold;">ut ut amet</div><div class="t" style="left:36px;top:97.02765957446809px;font-size:2.7px;color:#000;width:14px;height:3.2px;overflow:hidden;font-weight:bold;">do consequat dolore quis sed commodo</div><div class="t" style="left:74px;top:97.02765957446809px;font-size:2.6px;color:#3a3a3a;width:40px;height:3.2px;overflow:hidden;">quis labore ea ea exercitation ipsum eiusmod lorem ea nisi exercitation enim do ullamco</div><div class="t" style="left:146.3px;top:97.02765957446809px;font-size:2.6px;color:#000;font-weight:bold;height:3.2px;">54</div><div class="t" style="left:167px;top:97.02765957446809px;font-size:2.6px;color:#333;height:3.2px;">25.00</div><div class="t" style="left:10px;top:99.82127659574468px;font-size:2.7px;color:#000;width:7px;height:3.2px;overflow:hidden;font-weight:bold;">minim lorem ad</div><div class="t" style="left:36px;top:99.82127659574468px;font-size:2.7px;color:#000;width:16px;height:3.2px;overflow:hidden;font-weight:bold;">exercitation elit incididunt lorem aliqua dolore</div><div class="t" style="left:74px;top:99.82127659574468px;font-size:2.6px;color:#3a3a3a;width:64px;height:3.2px;overflow:hidden;">nostrud amet quis laboris magna sit magna adipiscing sit aliqua do et magna laboris</div><div class="t" style="left:146.3px;top:99.82127659574468px;font-size:2.6px;color:#000;font-weight:bold;height:3.2px;">75</div><div class="t" style="left:167px;top:99.82127659574468px;font-size:2.6px;color:#333;height:3.2px;">57.00</div><div class="t" style="left:10px;top:102.61489361702127px;font-size:2.7px;color:#000;width:7px;height:3.2px;overflow:hidden;font-weight:bold;">laboris ipsum exercitation</div><div class="t" style="left:36px;top:102.61489361702127px;font-size:2.7px;color:#000;width:22px;height:3.2px;overflow:hidden;font-weight:bold;">consectetur sit ullamco nisi sed aliqua</div><div class="t" style="left:74px;top:102.61489361702127px;font-size:2.6px;color:#3a3a3a;width:60px;height:3.2px;overflow:hidden;">sed eiusmod ex ullamco minim aliqua enim dolore dolore exercitation et enim ex exercitation</div><div class="t" style="left:146.3px;top:102.61489361702127px;font-size:2.6px;color:#000;font-weight:bold;height:3.2px;">25</div><div class="t" style="left:167px;top:102.61489361702127px;font-size:2.6px;color:#333;height:3.2px;">30.00</div><div class="t" style="left:10px;top:105.40851063829787px;font-size:2.7px;color:#000;width:5px;height:3.2px;overflow:hidden;font-weight:bold;">ut commodo ea</div><div class="t" style="left:36px;top:105.40851063829787px;font-size:2.7px;color:#000;width:22px;height:3.2px;overflow:hidden;font-weight:bold;">nisi minim nisi laboris sed incididunt</div><div class="t" style="left:74px;top:105.40851063829787px;font-size:2.6px;color:#3a3a3a;width:55px;height:3.2px;overflow:hidden;">minim consectetur ad et quis dolore incididunt ipsum ullamco nostrud ullamco consequat ut nostrud</div><div class="t" style="left:146.3px;top:105.40851063829787px;font-size:2.6px;color:#000;font-weight:bold;height:3.2px;">44</div><div class="t" style="left:167px;top:105.40851063829787px;font-size:2.6px;color:#333;height:3.2px;">17.00</div><div class="t" style="left:10px;top:108.20212765957447px;font-size:2.7px;color:#000;width:8px;height:3.2px;overflow:hidden;font-weight:bold;">magna quis sed</div><div class="t" style="left:36px;top:108.20212765957447px;font-size:2.7px;color:#000;width:22px;height:3.2px;overflow:hidden;font-weight:bold;">consectetur magna et nostrud exercitation nisi</div><div class="t" style="left:74px;top:108.20212765957447px;font-size:2.6px;color:#3a3a3a;width:62px;height:3.2px;overflow:hidden;">ipsum sed dolor laboris ex ea lorem amet exercitation consequat aliquip nisi et adipiscing</div><div class="t" style="left:146.3px;top:108.20212765957447px;font-size:2.6px;color:#000;font-weight:bold;height:3.2px;">38</div><div class="t" style="left:167px;top:108.20212765957447px;font-size:2.6px;color:#333;height:3.2px;">76.00</div><div class="t" style="left:10px;top:110.99574468085106px;font-size:2.7px;color:#000;width:5px;height:3.2px;overflow:hidden;font-weight:bold;">adipiscing aliquip consectetur</div><div class="t" style="left:36px;top:110.99574468085106px;font-size:2.7px;color:#000;width:12px;height:3.2px;overflow:hidden;font-weight:bold;">lorem sed labore dolor enim sed</div><div class="t" style="left:74px;top:110.99574468085106px;font-size:2.6px;color:#3a3a3a;width:60px;height:3.2px;overflow:hidden;">laboris elit adipiscing amet enim consequat incididunt nostrud dolore labore lorem lorem enim aliquip</div><div class="t" style="left:146.3px;top:110.99574468085106px;font-size:2.6px;color:#000;font-weight:bold;height:3.2px;">45</div><div class="t" style="left:10px;top:113.78936170212765px;font-size:2.7px;color:#000;width:5px;height:3.2px;overflow:hidden;font-weight:bold;">et ex consequat</div><div class="t" style="left:36px;top:113.78936170212765px;font-size:2.7px;color:#000;width:22px;height:3.2px;overflow:hidden;font-weight:bold;">et ipsum ullamco enim sit ipsum</div><div class="t" style="left:74px;top:113.78936170212765px;font-size:2.6px;color:#3a3a3a;width:50px;height:3.2px;overflow:hidden;">ullamco consectetur dolore labore laboris quis labore ea dolor minim ullamco quis exercitation incididunt</div><div class="t" style="left:146.3px;top:113.78936170212765px;font-size:2.6px;color:#000;font-weight:bold;height:3.2px;">10</div><div class="t" style="left:10px;top:116.58297872340425px;font-size:2.7px;color:#000;width:5px;height:3.2px;overflow:hidden;font-weight:bold;">commodo amet ut</div><div class="t" style="left:36px;top:116.58297872340425px;font-size:2.7px;color:#000;width:13px;height:3.2px;overflow:hidden;font-weight:bold;">incididunt enim incididunt labore aliquip labore</div><div class="t" style="left:74px;top:116.58297872340425px;font-size:2.6px;color:#3a3a3a;width:62px;height:3.2px;overflow:hidden;">adipiscing ea tempor labore ea ullamco sit do exercitation sit ut ipsum do ullamco</div><div class="t" style="left:146.3px;top:116.58297872340425px;font-size:2.6px;color:#000;font-weight:bold;height:3.2px;">16</div><div class="t" style="left:167px;top:116.58297872340425px;font-size:2.6px;color:#333;height:3.2px;">33.00</div><div class="t" style="left:10px;top:119.37659574468086px;font-size:2.7px;color:#000;width:8px;height:3.2px;overflow:hidden;font-weight:bold;">nisi ad elit</div><div class="t" style="left:36px;top:119.37659574468086px;font-size:2.7px;color:#000;width:14px;height:3.2px;overflow:hidden;font-weight:bold;">eiusmod minim incididunt tempor consequat aliquip</div><div class="t" style="left:74px;top:119.37659574468086px;font-size:2.6px;color:#3a3a3a;width:50px;height:3.2px;overflow:hidden;">nostrud quis minim nisi eiusmod adipiscing lorem consectetur magna consectetur veniam ullamco elit ut</div><div class="t" style="left:146.3px;top:119.37659574468086px;font-size:2.6px;color:#000;font-weight:bold;height:3.2px;">58</div><div class="t" style="left:167px;top:119.37659574468086px;font-size:2.6px;color:#333;height:3.2px;">49.00</div><div class="t" style="left:10px;top:122.17021276595744px;font-size:2.7px;color:#000;width:7px;height:3.2px;overflow:hidden;font-weight:bold;">laboris consectetur sit</div><div class="t" style="left:36px;top:122.17021276595744px;font-size:2.7px;color:#000;width:13px;height:3.2px;overflow:hidden;font-weight:bold;">incididunt quis nisi incididunt ad quis</div><div class="t" style="left:74px;top:122.17021276595744px;font-size:2.6px;color:#3a3a3a;width:64px;height:3.2px;overflow:hidden;">ipsum ullamco et exercitation dolor nostrud dolor aliquip amet sit dolore incididunt amet minim</div><div class="t" style="left:146.3px;top:122.17021276595744px;font-size:2.6px;color:#000;font-weight:bold;height:3.2px;">56</div><div class="t" style="left:167px;top:122.17021276595744px;font-size:2.6px;color:#333;height:3.2px;">88.00</div><div class="t" style="left:10px;top:124.96382978723403px;font-size:2.7px;color:#000;width:5px;height:3.2px;overflow:hidden;font-weight:bold;">dolore ad magna</div><div class="t" style="left:36px;top:124.96382978723403px;font-size:2.7px;color:#000;width:27px;height:3.2px;overflow:hidden;font-weight:bold;">lorem amet ipsum labore adipiscing ex</div><div class="t" style="left:74px;top:124.96382978723403px;font-size:2.6px;color:#3a3a3a;width:64px;height:3.2px;overflow:hidden;">nostrud dolore laboris ea sed ea tempor lorem enim do et ad ad aliquip</div><div class="t" style="left:146.3px;top:124.96382978723403px;font-size:2.6px;color:#000;font-weight:bold;height:3.2px;">56</div><div class="t" style="left:10px;top:127.75744680851064px;font-size:2.7px;color:#000;width:6px;height:3.2px;overflow:hidden;font-weight:bold;">consectetur commodo incididunt</div><div class="t" style="left:36px;top:127.75744680851064px;font-size:2.7px;color:#000;width:20px;height:3.2px;overflow:hidden;font-weight:bold;">eiusmod et ullamco amet dolor ex</div><div class="t" style="left:74px;top:127.75744680851064px;font-size:2.6px;color:#3a3a3a;width:62px;height:3.2px;overflow:hidden;">eiusmod laboris adipiscing amet dolore consectetur ut adipiscing ullamco ea nisi tempor labore sed</div><div class="t" style="left:146.3px;top:127.75744680851064px;font-size:2.6px;color:#000;font-weight:bold;height:3.2px;">63</div><div class="t" style="left:167px;top:127.75744680851064px;font-size:2.6px;color:#333;height:3.2px;">96.00</div><div class="t" style="left:10px;top:130.55106382978724px;font-size:2.7px;color:#000;width:6px;height:3.2px;overflow:hidden;font-weight:bold;">elit aliqua aliqua</div><div class="t" style="left:36px;top:130.55106382978724px;font-size:2.7px;color:#000;width:27px;height:3.2px;overflow:hidden;font-weight:bold;">magna quis dolore dolore incididunt nisi</div><div class="t" style="left:74px;top:130.55106382978724px;font-size:2.6px;color:#3a3a3a;width:55px;height:3.2px;overflow:hidden;">et do aliqua incididunt ad amet exercitation dolore et commodo consequat labore adipiscing aliquip</div><div class="t" style="left:146.3px;top:130.55106382978724px;font-size:2.6px;color:#000;font-weight:bold;height:3.2px;">14</div><div class="t" style="left:167px;top:130.55106382978724px;font-size:2.6px;color:#333;height:3.2px;">70.00</div><div class="t" style="left:10px;top:133.34468085106383px;font-size:2.7px;color:#000;width:7px;height:3.2px;overflow:hidden;font-weight:bold;">labore nisi quis</div><div class="t" style="left:36px;top:133.34468085106383px;font-size:2.7px;color:#000;width:12px;height:3.2px;overflow:hidden;font-weight:bold;">aliqua labore elit sit incididunt incididunt</div><div class="t" style="left:146.3px;top:133.34468085106383px;font-size:2.6px;color:#000;font-weight:bold;height:3.2px;">57</div><div class="t" style="left:167px;top:133.34468085106383px;font-size:2.6px;color:#333;height:3.2px;">32.00</div><div class="t" style="left:10px;top:136.13829787234042px;font-size:2.7px;color:#000;width:8px;height:3.2px;overflow:hidden;font-weight:bold;">dolore lorem adipiscing</div><div class="t" style="left:36px;top:136.13829787234042px;font-size:2.7px;color:#000;width:16px;height:3.2px;overflow:hidden;font-weight:bold;">ut dolor quis minim do dolor</div><div class="t" style="left:74px;top:136.13829787234042px;font-size:2.6px;color:#3a3a3a;width:62px;height:3.2px;overflow:hidden;">dolor ut lorem ad ullamco quis tempor enim amet ut dolor ea ex amet</div><div class="t" style="left:146.3px;top:136.13829787234042px;font-size:2.6px;color:#000;font-weight:bold;height:3.2px;">62</div><div class="t" style="left:167px;top:136.13829787234042px;font-size:2.6px;color:#333;height:3.2px;">60.00</div><div class="t" style="left:10px;top:138.931914893617px;font-size:2.7px;color:#000;width:5px;height:3.2px;overflow:hidden;font-weight:bold;">do consectetur eiusmod</div><div class="t" style="left:36px;top:138.931914893617px;font-size:2.7px;color:#000;width:20px;height:3.2px;overflow:hidden;font-weight:bold;">magna ullamco aliqua enim ullamco sit</div><div class="t" style="left:74px;top:138.931914893617px;font-size:2.6px;color:#3a3a3a;width:60px;height:3.2px;overflow:hidden;">veniam ullamco ullamco ipsum quis incididunt exercitation exercitation ut lorem laboris eiusmod laboris elit</div><div class="t" style="left:146.3px;top:138.931914893617px;font-size:2.6px;color:#000;font-weight:bold;height:3.2px;">21</div><div class="t" style="left:167px;top:138.931914893617px;font-size:2.6px;color:#333;height:3.2px;">56.00</div><div class="t" style="left:10px;top:141.72553191489362px;font-size:2.7px;color:#000;width:8px;height:3.2px;overflow:hidden;font-weight:bold;">eiusmod sed lorem</div><div class="t" style="left:36px;top:141.72553191489362px;font-size:2.7px;color:#000;width:12px;height:3.2px;overflow:hidden;font-weight:bold;">do exercitation consectetur quis commodo eiusmod</div><div class="t" style="left:74px;top:141.72553191489362px;font-size:2.6px;color:#3a3a3a;width:62px;height:3.2px;overflow:hidden;">eiusmod consequat eiusmod amet adipiscing nostrud ea incididunt enim sed dolor ex ad sit</div><div class="t" style="left:146.3px;top:141.72553191489362px;font-size:2.6px;color:#000;font-weight:bold;height:3.2px;">87</div><div class="t" style="left:10px;top:144.5191489361702px;font-size:2.7px;color:#000;width:8px;height:3.2px;overflow:hidden;font-weight:bold;">consectetur eiusmod labore</div><div class="t" style="left:36px;top:144.5191489361702px;font-size:2.7px;color:#000;width:20px;height:3.2px;overflow:hidden;font-weight:bold;">incididunt ex tempor ut dolor exercitation</div><div class="t" style="left:146.3px;top:144.5191489361702px;font-size:2.6px;color:#000;font-weight:bold;height:3.2px;">30</div><div class="t" style="left:167px;top:144.5191489361702px;font-size:2.6px;color:#333;height:3.2px;">25.00</div><div class="t" style="left:10px;top:147.3127659574468px;font-size:2.7px;color:#000;width:6px;height:3.2px;overflow:hidden;font-weight:bold;">et incididunt dolor</div><div class="t" style="left:36px;top:147.3127659574468px;font-size:2.7px;color:#000;width:12px;height:3.2px;overflow:hidden;font-weight:bold;">ad elit nostrud aliquip enim ullamco</div><div class="t" style="left:74px;top:147.3127659574468px;font-size:2.6px;color:#3a3a3a;width:55px;height:3.2px;overflow:hidden;">laboris nostrud quis nisi commodo nisi tempor ipsum lorem ea aliquip et nisi aliquip</div><div class="t" style="left:146.3px;top:147.3127659574468px;font-size:2.6px;color:#000;font-weight:bold;height:3.2px;">32</div><div class="t" style="left:10px;top:150.10638297872342px;font-size:2.7px;color:#000;width:8px;height:3.2px;overflow:hidden;font-weight:bold;">adipiscing amet sed</div><div class="t" style="left:36px;top:150.10638297872342px;font-size:2.7px;color:#000;width:16px;height:3.2px;overflow:hidden;font-weight:bold;">laboris quis consectetur nisi commodo commodo</div><div class="t" style="left:74px;top:150.10638297872342px;font-size:2.6px;color:#3a3a3a;width:40px;height:3.2px;overflow:hidden;">sed consectetur ad commodo consectetur sit commodo nostrud sed ipsum amet elit incididunt sed</div><div class="t" style="left:146.3px;top:150.10638297872342px;font-size:2.6px;color:#000;font-weight:bold;height:3.2px;">72</div><div class="t" style="left:167px;top:150.10638297872342px;font-size:2.6px;color:#333;height:3.2px;">31.00</div><div class="t" style="left:167px;top:32.774468085106385px;font-size:2.6px;color:#333;">12.00</div><div style="left:0px;top:152.8px;width:228px;height:2.7px;background:#dcdcdc;border-top:0.5px solid #aaa;"></div><div style="left:3px;top:153.5px;width:10px;height:1.3px;background:#888;opacity:.6"></div></div>
<!-- leftlist -->
<div style="left:3px;top:101px;width:33.5px;height:124px;background:rgba(16,26,16,0.86);"><div style="left:0px;top:0px;width:33.5px;height:2.6px;background:#303c2e;"></div><div style="left:27px;top:0.6px;width:5px;height:1.3px;background:#9aa89a;"></div><div class="t" style="left:1.5px;top:3.6px;font-size:3.1px;color:#d8e0d8;">Anthony Cooper</div><div style="left:30.2px;top:3.9000000000000004px;width:2.2px;height:2.2px;border-radius:50%;background:#a4e878;"></div><div class="t" style="left:1.5px;top:8.09px;font-size:3.1px;color:#d8e0d8;">Maya_77</div><div style="left:30.2px;top:8.39px;width:2.2px;height:2.2px;border-radius:50%;background:#a4e878;"></div><div class="t" style="left:1.5px;top:12.58px;font-size:3.1px;color:#d8e0d8;">Viktoria</div><div style="left:30.2px;top:12.879999999999999px;width:2.2px;height:2.2px;border-radius:50%;background:#e8a030;"></div><div class="t" style="left:1.5px;top:17.07px;font-size:3.1px;color:#7a6a5a;">Vitaliy K</div><div style="left:30.2px;top:17.37px;width:2.2px;height:2.2px;border-radius:50%;background:#c05030;"></div><div style="left:0px;top:21.6px;width:33.5px;height:2.6px;background:#303c2e;"></div><div style="left:25px;top:22.2px;width:7px;height:1.3px;background:#9aa89a;"></div><div class="t" style="left:1.5px;top:26.799999999999997px;font-size:3.1px;color:#d4dcd4;">Adrian Naughton</div><div style="left:30.2px;top:27.099999999999998px;width:2.2px;height:2.2px;border-radius:50%;background:#a4e878;"></div><div class="t" style="left:1.5px;top:31.29px;font-size:3.1px;color:#d4dcd4;">Alex Kroll</div><div style="left:30.2px;top:31.59px;width:2.2px;height:2.2px;border-radius:50%;background:#a4e878;"></div><div class="t" style="left:1.5px;top:35.78px;font-size:3.1px;color:#d4dcd4;">Billy Kooper</div><div style="left:30.2px;top:36.080000000000005px;width:2.2px;height:2.2px;border-radius:50%;background:#a4e878;"></div><div class="t" style="left:1.5px;top:40.27px;font-size:3.1px;color:#d4dcd4;">Claudia van Houten</div><div style="left:30.2px;top:40.57000000000001px;width:2.2px;height:2.2px;border-radius:50%;background:#a4e878;"></div><div class="t" style="left:1.5px;top:44.760000000000005px;font-size:3.1px;color:#d4dcd4;">Dan Farrow</div><div style="left:30.2px;top:45.06000000000001px;width:2.2px;height:2.2px;border-radius:50%;background:#a4e878;"></div><div class="t" style="left:1.5px;top:49.25000000000001px;font-size:3.1px;color:#d4dcd4;">Darya Berezina</div><div style="left:30.2px;top:49.55000000000001px;width:2.2px;height:2.2px;border-radius:50%;background:#a4e878;"></div><div class="t" style="left:1.5px;top:53.74000000000001px;font-size:3.1px;color:#d4dcd4;">Denis Pavlov</div><div style="left:30.2px;top:54.04000000000001px;width:2.2px;height:2.2px;border-radius:50%;background:#a4e878;"></div><div class="t" style="left:1.5px;top:58.23000000000001px;font-size:3.1px;color:#d4dcd4;">Eva Lorenz</div><div style="left:30.2px;top:58.530000000000015px;width:2.2px;height:2.2px;border-radius:50%;background:#a4e878;"></div><div class="t" style="left:1.5px;top:62.72000000000001px;font-size:3.1px;color:#d4dcd4;">Egor Ilyin</div><div style="left:30.2px;top:63.02000000000002px;width:2.2px;height:2.2px;border-radius:50%;background:#a4e878;"></div><div class="t" style="left:1.5px;top:67.21000000000002px;font-size:3.1px;color:#d4dcd4;">Gennadiy Petrenko</div><div style="left:30.2px;top:67.51000000000002px;width:2.2px;height:2.2px;border-radius:50%;background:#a4e878;"></div><div class="t" style="left:1.5px;top:71.70000000000002px;font-size:3.1px;color:#d4dcd4;">Olga Krilova</div><div style="left:30.2px;top:72.00000000000001px;width:2.2px;height:2.2px;border-radius:50%;background:#a4e878;"></div><div class="t" style="left:1.5px;top:76.19000000000001px;font-size:3.1px;color:#d4dcd4;">Jessica White</div><div style="left:30.2px;top:76.49000000000001px;width:2.2px;height:2.2px;border-radius:50%;background:#a4e878;"></div><div class="t" style="left:1.5px;top:80.68px;font-size:3.1px;color:#d4dcd4;">Artur Simon</div><div style="left:30.2px;top:80.98px;width:2.2px;height:2.2px;border-radius:50%;background:#a4e878;"></div><div class="t" style="left:1.5px;top:85.17px;font-size:3.1px;color:#d4dcd4;">Maria Ivanova</div><div style="left:30.2px;top:85.47px;width:2.2px;height:2.2px;border-radius:50%;background:#a4e878;"></div><div class="t" style="left:1.5px;top:89.66px;font-size:3.1px;color:#d4dcd4;">Nikita Orlov</div><div style="left:30.2px;top:89.96px;width:2.2px;height:2.2px;border-radius:50%;background:#a4e878;"></div><div class="t" style="left:1.5px;top:94.14999999999999px;font-size:3.1px;color:#d4dcd4;">Phil Barnett</div><div style="left:30.2px;top:94.44999999999999px;width:2.2px;height:2.2px;border-radius:50%;background:#a4e878;"></div><div class="t" style="left:1.5px;top:98.63999999999999px;font-size:3.1px;color:#d4dcd4;">Jim Carlson</div><div style="left:30.2px;top:98.93999999999998px;width:2.2px;height:2.2px;border-radius:50%;background:#a4e878;"></div><div class="t" style="left:1.5px;top:103.12999999999998px;font-size:3.1px;color:#d4dcd4;">Mikhailo Vitko</div><div style="left:30.2px;top:103.42999999999998px;width:2.2px;height:2.2px;border-radius:50%;background:#a4e878;"></div><div class="t" style="left:1.5px;top:107.61999999999998px;font-size:3.1px;color:#d4dcd4;">Angela Torquato</div><div style="left:30.2px;top:107.91999999999997px;width:2.2px;height:2.2px;border-radius:50%;background:#a4e878;"></div><div class="t" style="left:1.5px;top:112.10999999999997px;font-size:3.1px;color:#d4dcd4;">Max Kozak</div><div style="left:30.2px;top:112.40999999999997px;width:2.2px;height:2.2px;border-radius:50%;background:#a4e878;"></div><div class="t" style="left:1.5px;top:116.59999999999997px;font-size:3.1px;color:#d4dcd4;">Egor Bykov</div><div style="left:30.2px;top:116.89999999999996px;width:2.2px;height:2.2px;border-radius:50%;background:#a4e878;"></div><div class="t" style="left:1.5px;top:121.08999999999996px;font-size:3.1px;color:#d4dcd4;">Roman Burov</div><div style="left:30.2px;top:121.38999999999996px;width:2.2px;height:2.2px;border-radius:50%;background:#a4e878;"></div></div>
<!-- graywin -->
<div class="w" style="left:46px;top:142px;width:66.5px;height:68px;background:#e6e6e6;"><div style="left:0px;top:0px;width:66.5px;height:4.2px;background:linear-gradient(180deg,#ececec,#d4d4d4);"></div><div style="left:1.6px;top:1px;width:2px;height:2px;border-radius:50%;background:#c2c2c2;"></div><div style="left:4.6px;top:1px;width:2px;height:2px;border-radius:50%;background:#c2c2c2;"></div><div style="left:7.6px;top:1px;width:2px;height:2px;border-radius:50%;background:#c2c2c2;"></div><div class="t" style="left:16px;top:1px;font-size:2.5px;color:#555;">Screen_graphic @ 66.7% (RGB/8)</div><div style="left:0px;top:4.2px;width:66.5px;height:3.5px;background:#e6e6e6;border-bottom:0.5px solid #999;"></div><div style="left:3px;top:7.7px;width:60.5px;height:56.5px;background:#c3c3c3;"></div><div style="left:3px;top:6.6px;width:60.5px;height:1.2px;background:#222;"></div><div style="left:30px;top:7.7px;width:6.2px;height:4.908333333333333px;background:#1c1c1c;"></div><div style="left:30px;top:12.408333333333333px;width:6.2px;height:4.908333333333333px;background:#5a5a5a;"></div><div style="left:30px;top:17.116666666666667px;width:6.2px;height:4.908333333333333px;background:#565656;"></div><div style="left:30px;top:21.825px;width:6.2px;height:4.908333333333333px;background:#505050;"></div><div style="left:30px;top:26.53333333333333px;width:6.2px;height:4.908333333333333px;background:#4a4a4a;"></div><div style="left:30px;top:31.241666666666667px;width:6.2px;height:4.908333333333333px;background:#444;"></div><div style="left:30px;top:35.95px;width:6.2px;height:4.908333333333333px;background:#3e3e3e;"></div><div style="left:30px;top:40.65833333333334px;width:6.2px;height:4.908333333333333px;background:#383838;"></div><div style="left:30px;top:45.36666666666667px;width:6.2px;height:4.908333333333333px;background:#323232;"></div><div style="left:30px;top:50.075px;width:6.2px;height:4.908333333333333px;background:#2c2c2c;"></div><div style="left:30px;top:54.78333333333334px;width:6.2px;height:4.908333333333333px;background:#282828;"></div><div style="left:30px;top:59.49166666666667px;width:6.2px;height:4.908333333333333px;background:#242424;"></div><div style="left:63.5px;top:7.7px;width:2.3px;height:50.5px;background:#6aa9ea;border-radius:1px;"></div><div style="left:63.5px;top:58.2px;width:2.3px;height:6px;background:#e8e8e8;"></div><div style="left:0px;top:64.2px;width:66.5px;height:3.8px;background:#e4e4e4;"></div><div style="left:12px;top:65.3px;width:4px;height:1.4px;background:#777;"></div><div style="left:0px;top:7.7px;width:3px;height:56.5px;background:#e9e9e9;border-right:0.5px solid #aaa;"></div></div>
<!-- mail -->
<div class="w" style="left:3.6px;top:226.4px;width:261px;height:192.6px;background:#fff;"><div style="left:0px;top:0px;width:261px;height:14px;background:linear-gradient(180deg,#ececec 0%,#dadada 35%,#cfcfcf 100%);border-bottom:0.5px solid #8f8f8f;"></div><div style="left:2.5px;top:1.2px;width:2.3px;height:2.3px;border-radius:50%;background:#c4c4c4;"></div><div style="left:6.1px;top:1.2px;width:2.3px;height:2.3px;border-radius:50%;background:#c4c4c4;"></div><div style="left:9.7px;top:1.2px;width:2.3px;height:2.3px;border-radius:50%;background:#c4c4c4;"></div><div class="t" style="left:105px;top:1.1px;font-size:2.9px;color:#555;">Inbox — ph@gmail.com (577 messages)</div><div style="left:3.5px;top:6px;width:7.5px;height:3.4px;background:#f2f2f2;border:0.4px solid #b0b0b0;border-radius:1.2px;"></div><div class="t" style="left:2px;top:10.6px;font-size:2.6px;color:#333;">Get Mail</div><div style="left:44px;top:5.8px;width:22px;height:3.6px;background:#eee;border:0.4px solid #b0b0b0;border-radius:1.2px;"></div><div style="left:50px;top:6.6px;width:3px;height:2px;background:#c77;border-radius:1px;"></div><div style="left:57px;top:6.6px;width:3px;height:2px;background:#a88;border-radius:1px;"></div><div style="left:69px;top:5.8px;width:33px;height:3.6px;background:#eee;border:0.4px solid #b0b0b0;border-radius:1.2px;"></div><div style="left:74px;top:6.8px;width:4px;height:1.6px;background:#889;"></div><div style="left:84px;top:6.8px;width:4px;height:1.6px;background:#889;"></div><div style="left:94px;top:6.8px;width:4px;height:1.6px;background:#889;"></div><div style="left:108px;top:5.4px;width:8px;height:4px;background:#f4f4f4;border:0.4px solid #b0b0b0;border-radius:1.2px;"></div><div style="left:122px;top:5.8px;width:16px;height:3.6px;background:#efe8c8;border:0.4px solid #b0b0b0;border-radius:1.2px;"></div><div class="t" style="left:46px;top:10.6px;font-size:2.6px;color:#333;">Delete</div><div class="t" style="left:57px;top:10.6px;font-size:2.6px;color:#333;">Junk</div><div class="t" style="left:71px;top:10.6px;font-size:2.6px;color:#333;">Reply</div><div class="t" style="left:80px;top:10.6px;font-size:2.6px;color:#333;">Reply All  Forward</div><div class="t" style="left:103px;top:10.6px;font-size:2.6px;color:#333;">New Message</div><div class="t" style="left:122px;top:10.6px;font-size:2.6px;color:#333;">Note</div><div class="t" style="left:130px;top:10.6px;font-size:2.6px;color:#333;">To Do</div><div style="left:176px;top:6px;width:84px;height:4px;background:#fff;border:0.4px solid #b0b0b0;border-radius:2px;"></div><div style="left:177.5px;top:6.8px;width:2px;height:2px;border:0.5px solid #666;border-radius:50%;"></div><div class="t" style="left:216px;top:10.6px;font-size:2.6px;color:#333;">Search</div><div style="left:0px;top:14px;width:41.5px;height:178.6px;background:#dfe3e9;border-right:0.5px solid #9a9a9a;"></div><div class="t" style="left:1.5px;top:15.2px;font-size:2.7px;color:#6a7480;font-weight:bold;">MAILBOXES</div><div class="t" style="left:4px;top:18.8px;font-size:2.9px;color:#333;">▼ Inbox</div><div class="t" style="left:9px;top:22.9px;font-size:2.9px;color:#333;">ph.anna.k@gmail.com</div><div style="left:0px;top:26.4px;width:41.5px;height:3.6px;background:#8e949c;"></div><div class="t" style="left:9px;top:27px;font-size:2.9px;color:#fff;font-weight:bold;">ph@gmail.com</div><div class="t" style="left:4px;top:32px;font-size:2.9px;color:#333;">▼ Sent</div><div class="t" style="left:9px;top:36px;font-size:2.9px;color:#333;">ph.anna.k@gmail.com</div><div class="t" style="left:9px;top:40px;font-size:2.9px;color:#333;">ph@gmail.com</div><div class="t" style="left:4px;top:45px;font-size:2.9px;color:#333;">► Trash</div><div class="t" style="left:1.5px;top:50.5px;font-size:2.9px;color:#333;font-weight:bold;color:#6a7480;">ON MY MAC AND IMAP</div><div class="t" style="left:4px;top:55px;font-size:2.9px;color:#333;">▼ Work</div><div style="left:9px;top:59.199999999999996px;width:2.8px;height:2.6px;background:#6f9bd0;border-radius:0.5px;"></div><div class="t" style="left:13px;top:59.4px;font-size:2.9px;color:#333;">Projects</div><div style="left:9px;top:63.199999999999996px;width:2.8px;height:2.6px;background:#6f9bd0;border-radius:0.5px;"></div><div class="t" style="left:13px;top:63.4px;font-size:2.9px;color:#333;">Invoices</div><div style="left:9px;top:67.3px;width:2.8px;height:2.6px;background:#6f9bd0;border-radius:0.5px;"></div><div class="t" style="left:13px;top:67.5px;font-size:2.9px;color:#333;">Design items</div><div style="left:9px;top:71.39999999999999px;width:2.8px;height:2.6px;background:#6f9bd0;border-radius:0.5px;"></div><div class="t" style="left:13px;top:71.6px;font-size:2.9px;color:#333;">Conference</div><div style="left:9px;top:75.3px;width:2.8px;height:2.6px;background:#6f9bd0;border-radius:0.5px;"></div><div class="t" style="left:13px;top:75.5px;font-size:2.9px;color:#333;">Junk</div><div style="left:9px;top:79.39999999999999px;width:2.8px;height:2.6px;background:#6f9bd0;border-radius:0.5px;"></div><div class="t" style="left:13px;top:79.6px;font-size:2.9px;color:#333;">Reg-letters</div><div style="left:5px;top:83.8px;width:2.8px;height:2.6px;background:#6f9bd0;border-radius:0.5px;"></div><div class="t" style="left:9px;top:84px;font-size:2.9px;color:#333;">Newsletters (4)</div><div style="left:5px;top:87.8px;width:2.8px;height:2.6px;background:#6f9bd0;border-radius:0.5px;"></div><div class="t" style="left:9px;top:88px;font-size:2.9px;color:#333;">Notes</div><div style="left:5px;top:91.8px;width:2.8px;height:2.6px;background:#6f9bd0;border-radius:0.5px;"></div><div class="t" style="left:9px;top:92px;font-size:2.9px;color:#333;">ph.anna.k@gm...</div><div class="t" style="left:12px;top:163.2px;font-size:2.7px;color:#8a929c;font-weight:bold;">MAIL ACTIVITY</div><div style="left:0px;top:166.5px;width:41.5px;height:11px;background:#f1f2f4;border-top:0.5px solid #bbb;border-bottom:0.5px solid #bbb;"></div><div style="left:0px;top:187.5px;width:41.5px;height:5.1px;background:linear-gradient(180deg,#e8e8e8,#cfcfcf);border-top:0.5px solid #999;"></div><div class="t" style="left:3px;top:188.4px;font-size:3px;color:#444;">+</div><div class="t" style="left:10px;top:188.4px;font-size:3px;color:#444;">■</div><div class="t" style="left:17px;top:188.4px;font-size:3px;color:#444;">*</div><div style="left:41.5px;top:14px;width:219.5px;height:3.4px;background:linear-gradient(180deg,#f8f8f8,#e4e4e4);border-bottom:0.5px solid #aaa;"></div><div class="t" style="left:42.5px;top:14.5px;font-size:2.6px;color:#555;">●  ▪</div><div class="t" style="left:59.5px;top:14.5px;font-size:2.7px;color:#222;">From</div><div class="t" style="left:124.5px;top:14.5px;font-size:2.7px;color:#222;">Subject</div><div class="t" style="left:216.0px;top:14.5px;font-size:2.7px;color:#222;">Date Received</div><div style="left:214.5px;top:14px;width:0.4px;height:3.4px;background:#aaa"></div><div style="left:123.0px;top:14px;width:0.4px;height:3.4px;background:#aaa"></div><div style="left:41.5px;top:17.4px;width:219.5px;height:57.6px;background:#fff;"></div><div style="left:41.5px;top:17.6px;width:216.5px;height:3.55px;background:#dde2ea;"></div><div style="left:42.7px;top:18.6px;width:1.4px;height:1.4px;background:#3a6fc0;border-radius:50%;"></div><div class="t" style="left:59.5px;top:18.05px;font-size:2.7px;color:#000;font-weight:bold;width:60px;overflow:hidden;">Apple Store</div><div class="t" style="left:124.5px;top:18.05px;font-size:2.7px;color:#000;font-weight:bold;width:45px;overflow:hidden;">Re: aliquip nisi commodo incididunt tempor commodo ex tempor adipiscing nisi enim do consectetur dolor</div><div class="t" style="left:216.0px;top:18.05px;font-size:2.7px;color:#000;font-weight:bold;">January 7, 2012</div><div class="t" style="left:244.5px;top:18.05px;font-size:2.7px;color:#000;font-weight:bold;width:13px;text-align:right;">7:38 PM</div><div style="left:41.5px;top:21.150000000000002px;width:216.5px;height:3.55px;background:#dbe6f4;"></div><div style="left:42.7px;top:22.150000000000002px;width:1.4px;height:1.4px;background:#3a6fc0;border-radius:50%;"></div><div class="t" style="left:59.5px;top:21.6px;font-size:2.7px;color:#000;font-weight:bold;width:60px;overflow:hidden;">LinkedIn Updates</div><div class="t" style="left:124.5px;top:21.6px;font-size:2.7px;color:#000;font-weight:bold;width:60px;overflow:hidden;">Re: lorem consequat amet sit dolor incididunt et ipsum aliquip ad nisi incididunt consequat labore</div><div class="t" style="left:216.0px;top:21.6px;font-size:2.7px;color:#000;font-weight:bold;">January 8, 2012</div><div class="t" style="left:244.5px;top:21.6px;font-size:2.7px;color:#000;font-weight:bold;width:13px;text-align:right;">5:41 PM</div><div style="left:41.5px;top:24.700000000000003px;width:216.5px;height:3.55px;background:#fff;"></div><div class="t" style="left:59.5px;top:25.150000000000002px;font-size:2.7px;color:#999;width:60px;overflow:hidden;">facebook notifier</div><div class="t" style="left:124.5px;top:25.150000000000002px;font-size:2.7px;color:#999;width:40px;overflow:hidden;">Re: consectetur aliquip magna ullamco consectetur dolore ad labore commodo aliqua ipsum amet adipiscing exercitation</div><div class="t" style="left:216.0px;top:25.150000000000002px;font-size:2.7px;color:#999;">January 3, 2012</div><div class="t" style="left:244.5px;top:25.150000000000002px;font-size:2.7px;color:#999;width:13px;text-align:right;">5:34 PM</div><div style="left:41.5px;top:28.25px;width:216.5px;height:3.55px;background:#fff;"></div><div style="left:49.5px;top:28.85px;width:2.4px;height:2.2px;background:#c8b070;border-radius:0.4px;"></div><div class="t" style="left:59.5px;top:28.7px;font-size:2.7px;color:#222;width:60px;overflow:hidden;">Thomas Jensen & Whitfield</div><div class="t" style="left:124.5px;top:28.7px;font-size:2.7px;color:#222;width:55px;overflow:hidden;">Re: ipsum lorem ut ut sit ex nostrud exercitation ullamco amet incididunt magna minim consectetur</div><div class="t" style="left:216.0px;top:28.7px;font-size:2.7px;color:#222;">January 5, 2012</div><div class="t" style="left:244.5px;top:28.7px;font-size:2.7px;color:#222;width:13px;text-align:right;">6:10 PM</div><div style="left:41.5px;top:31.8px;width:216.5px;height:3.55px;background:#fff;"></div><div class="t" style="left:59.5px;top:32.25px;font-size:2.7px;color:#222;width:60px;overflow:hidden;">Bill Kato</div><div class="t" style="left:124.5px;top:32.25px;font-size:2.7px;color:#222;width:50px;overflow:hidden;">Re: elit sed et adipiscing lorem sit aliquip ea tempor incididunt nisi commodo incididunt sed</div><div class="t" style="left:216.0px;top:32.25px;font-size:2.7px;color:#222;">January 6, 2012</div><div class="t" style="left:244.5px;top:32.25px;font-size:2.7px;color:#222;width:13px;text-align:right;">11:34 PM</div><div style="left:41.5px;top:35.35px;width:216.5px;height:3.55px;background:#fff;"></div><div style="left:49.5px;top:35.95px;width:2.4px;height:2.2px;background:#c8b070;border-radius:0.4px;"></div><div class="t" style="left:59.5px;top:35.800000000000004px;font-size:2.7px;color:#999;width:60px;overflow:hidden;">noreply-team</div><div class="t" style="left:124.5px;top:35.800000000000004px;font-size:2.7px;color:#999;width:55px;overflow:hidden;">Re: exercitation ullamco ut lorem magna enim ipsum ut tempor exercitation adipiscing dolor do ut</div><div class="t" style="left:216.0px;top:35.800000000000004px;font-size:2.7px;color:#999;">January 6, 2012</div><div class="t" style="left:244.5px;top:35.800000000000004px;font-size:2.7px;color:#999;width:13px;text-align:right;">5:10 PM</div><div style="left:41.5px;top:38.9px;width:216.5px;height:3.55px;background:#dbe6f4;"></div><div style="left:42.7px;top:39.9px;width:1.4px;height:1.4px;background:#3a6fc0;border-radius:50%;"></div><div class="t" style="left:59.5px;top:39.35px;font-size:2.7px;color:#000;font-weight:bold;width:60px;overflow:hidden;">Bill Kato</div><div class="t" style="left:124.5px;top:39.35px;font-size:2.7px;color:#000;font-weight:bold;width:88px;overflow:hidden;">Re: aliqua nostrud amet amet consectetur ut et lorem quis quis aliquip sed ex sed</div><div class="t" style="left:216.0px;top:39.35px;font-size:2.7px;color:#000;font-weight:bold;">December 26, 2011</div><div class="t" style="left:244.5px;top:39.35px;font-size:2.7px;color:#000;font-weight:bold;width:13px;text-align:right;">3:50 PM</div><div style="left:41.5px;top:42.45px;width:216.5px;height:3.55px;background:#fff;"></div><div style="left:49.5px;top:43.050000000000004px;width:2.4px;height:2.2px;background:#c8b070;border-radius:0.4px;"></div><div class="t" style="left:59.5px;top:42.900000000000006px;font-size:2.7px;color:#c89030;width:60px;overflow:hidden;">Maria Gonzales</div><div class="t" style="left:124.5px;top:42.900000000000006px;font-size:2.7px;color:#c89030;width:60px;overflow:hidden;">Re: enim labore et incididunt eiusmod incididunt nostrud ex consectetur ullamco sit adipiscing adipiscing dolor</div><div class="t" style="left:216.0px;top:42.900000000000006px;font-size:2.7px;color:#c89030;">December 28, 2011</div><div class="t" style="left:244.5px;top:42.900000000000006px;font-size:2.7px;color:#c89030;width:13px;text-align:right;">5:25 PM</div><div style="left:41.5px;top:46.0px;width:216.5px;height:3.55px;background:#dbe6f4;"></div><div style="left:42.7px;top:47.0px;width:1.4px;height:1.4px;background:#3a6fc0;border-radius:50%;"></div><div class="t" style="left:59.5px;top:46.45px;font-size:2.7px;color:#000;font-weight:bold;width:60px;overflow:hidden;">Business Insider Summit</div><div class="t" style="left:124.5px;top:46.45px;font-size:2.7px;color:#000;font-weight:bold;width:50px;overflow:hidden;">Re: dolore ullamco ea aliqua consequat tempor amet sed labore ex amet magna ut ut</div><div class="t" style="left:216.0px;top:46.45px;font-size:2.7px;color:#000;font-weight:bold;">December 20, 2011</div><div class="t" style="left:244.5px;top:46.45px;font-size:2.7px;color:#000;font-weight:bold;width:13px;text-align:right;">2:27 PM</div><div style="left:41.5px;top:49.55px;width:216.5px;height:3.55px;background:#fff;"></div><div style="left:49.5px;top:50.15px;width:2.4px;height:2.2px;background:#c8b070;border-radius:0.4px;"></div><div class="t" style="left:59.5px;top:50.0px;font-size:2.7px;color:#c89030;width:60px;overflow:hidden;">Thomas Jensen & Whitfield</div><div class="t" style="left:124.5px;top:50.0px;font-size:2.7px;color:#c89030;width:50px;overflow:hidden;">Re: nisi et sit dolor tempor aliqua quis consequat sed consectetur quis sed nisi minim</div><div class="t" style="left:216.0px;top:50.0px;font-size:2.7px;color:#c89030;">December 28, 2011</div><div class="t" style="left:244.5px;top:50.0px;font-size:2.7px;color:#c89030;width:13px;text-align:right;">10:18 PM</div><div style="left:41.5px;top:53.1px;width:216.5px;height:3.55px;background:#fff;"></div><div class="t" style="left:59.5px;top:53.550000000000004px;font-size:2.7px;color:#222;width:60px;overflow:hidden;">Karin Andersen</div><div class="t" style="left:124.5px;top:53.550000000000004px;font-size:2.7px;color:#222;width:40px;overflow:hidden;">Re: ipsum ex veniam enim dolor ipsum amet ex amet enim ad sed amet amet</div><div class="t" style="left:216.0px;top:53.550000000000004px;font-size:2.7px;color:#222;">December 27, 2011</div><div class="t" style="left:244.5px;top:53.550000000000004px;font-size:2.7px;color:#222;width:13px;text-align:right;">9:33 PM</div><div style="left:41.5px;top:56.65px;width:216.5px;height:3.55px;background:#dbe6f4;"></div><div style="left:42.7px;top:57.65px;width:1.4px;height:1.4px;background:#3a6fc0;border-radius:50%;"></div><div class="t" style="left:59.5px;top:57.1px;font-size:2.7px;color:#000;font-weight:bold;width:60px;overflow:hidden;">Photo contest</div><div class="t" style="left:124.5px;top:57.1px;font-size:2.7px;color:#000;font-weight:bold;width:40px;overflow:hidden;">Re: sed minim veniam consectetur ex amet ullamco ipsum ea lorem nostrud nostrud lorem amet</div><div class="t" style="left:216.0px;top:57.1px;font-size:2.7px;color:#000;font-weight:bold;">December 21, 2011</div><div class="t" style="left:244.5px;top:57.1px;font-size:2.7px;color:#000;font-weight:bold;width:13px;text-align:right;">2:50 PM</div><div style="left:41.5px;top:60.199999999999996px;width:216.5px;height:3.55px;background:#fff;"></div><div class="t" style="left:59.5px;top:60.65px;font-size:2.7px;color:#222;width:60px;overflow:hidden;">Katerina Ivanishcheva</div><div class="t" style="left:124.5px;top:60.65px;font-size:2.7px;color:#222;width:55px;overflow:hidden;">Re: dolore ullamco minim nostrud aliquip nisi aliquip consectetur consequat commodo ipsum enim consectetur ex</div><div class="t" style="left:216.0px;top:60.65px;font-size:2.7px;color:#222;">December 20, 2011</div><div class="t" style="left:244.5px;top:60.65px;font-size:2.7px;color:#222;width:13px;text-align:right;">4:54 PM</div><div style="left:41.5px;top:63.75px;width:216.5px;height:3.55px;background:#9fc4e6;"></div><div class="t" style="left:59.5px;top:64.2px;font-size:2.7px;color:#123;width:60px;overflow:hidden;">Alan Ford</div><div class="t" style="left:124.5px;top:64.2px;font-size:2.7px;color:#123;width:55px;overflow:hidden;">Re: ea ea dolore lorem quis enim do incididunt consequat eiusmod minim nisi ea et</div><div class="t" style="left:216.0px;top:64.2px;font-size:2.7px;color:#123;">December 25, 2011</div><div class="t" style="left:244.5px;top:64.2px;font-size:2.7px;color:#123;width:13px;text-align:right;">7:52 PM</div><div style="left:41.5px;top:67.3px;width:216.5px;height:3.55px;background:#fff;"></div><div style="left:49.5px;top:67.89999999999999px;width:2.4px;height:2.2px;background:#c8b070;border-radius:0.4px;"></div><div class="t" style="left:59.5px;top:67.75px;font-size:2.7px;color:#c8a060;width:60px;overflow:hidden;">noreply</div><div class="t" style="left:124.5px;top:67.75px;font-size:2.7px;color:#c8a060;width:85px;overflow:hidden;">Re: incididunt laboris incididunt ut nostrud labore ad ut sed sed ea veniam dolor amet</div><div class="t" style="left:216.0px;top:67.75px;font-size:2.7px;color:#c8a060;">December 24, 2011</div><div class="t" style="left:244.5px;top:67.75px;font-size:2.7px;color:#c8a060;width:13px;text-align:right;">3:17 PM</div><div style="left:41.5px;top:70.85px;width:216.5px;height:3.55px;background:#fff;"></div><div style="left:42.7px;top:71.85px;width:1.4px;height:1.4px;background:#3a6fc0;border-radius:50%;"></div><div class="t" style="left:59.5px;top:71.3px;font-size:2.7px;color:#000;font-weight:bold;width:60px;overflow:hidden;">Dmitriy Alexeev & Co Alerts</div><div class="t" style="left:124.5px;top:71.3px;font-size:2.7px;color:#000;font-weight:bold;width:45px;overflow:hidden;">Re: ex magna ut ullamco nostrud consequat ea ad nisi ad amet dolor magna dolor</div><div class="t" style="left:216.0px;top:71.3px;font-size:2.7px;color:#000;font-weight:bold;">December 24, 2011</div><div class="t" style="left:244.5px;top:71.3px;font-size:2.7px;color:#000;font-weight:bold;width:13px;text-align:right;">10:32 PM</div><div style="left:258px;top:14px;width:3px;height:61px;background:#f2f2f2;border-left:0.5px solid #ccc;"></div><div style="left:258.4px;top:18px;width:2.2px;height:40px;background:#8fb4e6;border-radius:1px;opacity:.75"></div><div style="left:41.5px;top:74.6px;width:219.5px;height:1px;background:#e0e0e0;border-top:0.5px solid #aaa;"></div><div style="left:41.5px;top:75.6px;width:219.5px;height:117px;background:#fff;"></div><div class="t" style="left:51.5px;top:77.3px;font-size:2.8px;color:#333;">From:  Alan Ford</div><div class="t" style="left:47.5px;top:80.3px;font-size:2.8px;color:#333;">Subject:  FYI</div><div class="t" style="left:51.5px;top:83.3px;font-size:2.8px;color:#333;">Date:  January 4, 2012 11:23:08 AM GMT+02:00</div><div class="t" style="left:55.5px;top:86.5px;font-size:2.8px;color:#333;">To:  ph@gmail.com</div><div class="t" style="left:53.5px;top:89.7px;font-size:2.8px;color:#333;">►  1 Attachment, 21.4 KB</div><div style="left:79.5px;top:89.2px;width:8.5px;height:3px;background:#f2f2f2;border:0.4px solid #b0b0b0;border-radius:1.2px;"></div><div class="t" style="left:81.0px;top:89.8px;font-size:2.4px;color:#333;">Save ▼</div><div style="left:90.0px;top:89.2px;width:12.5px;height:3px;background:#f2f2f2;border:0.4px solid #b0b0b0;border-radius:1.2px;"></div><div class="t" style="left:91.3px;top:89.8px;font-size:2.4px;color:#333;">Quick Look</div><div style="left:43.5px;top:93.6px;width:213.5px;height:0.5px;background:#c8c8c8;"></div><div class="t" style="left:44.0px;top:95.6px;font-size:2.8px;color:#222;">Sent from my iPad</div><div class="t" style="left:44.0px;top:108px;font-size:2.8px;color:#111;">—</div><div class="t" style="left:44.0px;top:111px;font-size:2.8px;color:#111;">Alan Ford</div><div class="t" style="left:44.0px;top:114px;font-size:2.8px;color:#111;">Senior Analyst</div><div class="t" style="left:44.0px;top:117px;font-size:2.8px;color:#111;">Ford & Co. Holding</div><div class="t" style="left:44.0px;top:120px;font-size:2.8px;color:#111;">tel: +44 20 7946 0321 / 22</div><div class="t" style="left:44.0px;top:123px;font-size:2.8px;color:#111;">fax/mob: +44 20 7946 0988 ext. 7</div><div class="t" style="left:44.0px;top:126px;font-size:2.8px;color:#111;">www.fordandco.example</div><div class="t" style="left:44.0px;top:134.9px;font-size:2.8px;color:#222;">Save a tree. Don’t print.</div><div class="t" style="left:81.5px;top:134.9px;font-size:2.8px;color:#2040c0;text-decoration:underline;">www.fordandco.example</div><div class="t" style="left:109.5px;top:134.9px;font-size:2.8px;color:#3a9a3a;text-decoration:underline;">| go green today</div><svg style="left:115.5px;top:127px" width="6" height="7" viewBox="0 0 12 14"><path d="M6 14V4M6 4C4 1 2 1 0 2M6 4c2-3 4-3 6-2M6 5C4 3 2 4 1 6M6 5c2-2 4-1 5 1" stroke="#2a9a3a" stroke-width="1.2" fill="none"/></svg></div>
<!-- term -->
<div class="w" style="left:454px;top:17.2px;width:103px;height:75px;background:#000;"><div style="left:0px;top:0px;width:103px;height:4.8px;background:linear-gradient(180deg,#ececec,#cfcfcf);"></div><div style="left:1.6px;top:1.2px;width:2.2px;height:2.2px;border-radius:50%;background:#c89088;"></div><div style="left:4.800000000000001px;top:1.2px;width:2.2px;height:2.2px;border-radius:50%;background:#c8b888;"></div><div style="left:8.0px;top:1.2px;width:2.2px;height:2.2px;border-radius:50%;background:#98b890;"></div><div class="t" style="left:35px;top:1px;font-size:2.9px;color:#333;">Terminal — bash — 80×24</div><div style="left:0px;top:4.8px;width:103px;height:70.2px;background:#000;"></div><div style="left:100.4px;top:4.8px;width:2.6px;height:70.2px;background:#dcdcdc;"></div><div class="t" style="left:1.2px;top:5.9px;font-size:2.7px;color:#dcdcdc;font-family:'Liberation Mono',monospace;letter-spacing:-0.12px;">Last&nbsp;login:&nbsp;Wed&nbsp;Jan&nbsp;&nbsp;4&nbsp;11:20:41&nbsp;on&nbsp;ttys001</div><div class="t" style="left:1.2px;top:8.93px;font-size:2.7px;color:#dcdcdc;font-family:'Liberation Mono',monospace;letter-spacing:-0.12px;">mac:~&nbsp;user$&nbsp;cd&nbsp;Sites/project</div><div class="t" style="left:1.2px;top:11.96px;font-size:2.7px;color:#dcdcdc;font-family:'Liberation Mono',monospace;letter-spacing:-0.12px;">mac:project&nbsp;user$&nbsp;ls&nbsp;-la</div><div class="t" style="left:1.2px;top:14.99px;font-size:2.7px;color:#dcdcdc;font-family:'Liberation Mono',monospace;letter-spacing:-0.12px;">total&nbsp;136&nbsp;blocks&nbsp;used</div><div class="t" style="left:1.2px;top:18.02px;font-size:2.7px;color:#dcdcdc;font-family:'Liberation Mono',monospace;letter-spacing:-0.12px;">drwx&nbsp;user</div><div class="t" style="left:1.2px;top:21.049999999999997px;font-size:2.7px;color:#dcdcdc;font-family:'Liberation Mono',monospace;letter-spacing:-0.12px;">-rw-r--r--&nbsp;&nbsp;12&nbsp;user&nbsp;&nbsp;staff&nbsp;&nbsp;&nbsp;8784&nbsp;Dec&nbsp;27&nbsp;14:49&nbsp;README</div><div class="t" style="left:1.2px;top:24.08px;font-size:2.7px;color:#dcdcdc;font-family:'Liberation Mono',monospace;letter-spacing:-0.12px;">drwxr-xr-x&nbsp;&nbsp;&nbsp;6&nbsp;user&nbsp;&nbsp;staff&nbsp;&nbsp;&nbsp;1954&nbsp;Jan&nbsp;16&nbsp;07:24&nbsp;js</div><div class="t" style="left:1.2px;top:27.11px;font-size:2.7px;color:#dcdcdc;font-family:'Liberation Mono',monospace;letter-spacing:-0.12px;">drwxr-xr-x&nbsp;&nbsp;19&nbsp;user&nbsp;&nbsp;staff&nbsp;&nbsp;&nbsp;4185&nbsp;Dec&nbsp;24&nbsp;06:26&nbsp;config.php</div><div class="t" style="left:1.2px;top:30.14px;font-size:2.7px;color:#dcdcdc;font-family:'Liberation Mono',monospace;letter-spacing:-0.12px;">drwxr-xr-x&nbsp;&nbsp;13&nbsp;user&nbsp;&nbsp;staff&nbsp;&nbsp;&nbsp;2714&nbsp;Dec&nbsp;&nbsp;5&nbsp;19:39&nbsp;css</div><div class="t" style="left:1.2px;top:33.17px;font-size:2.7px;color:#dcdcdc;font-family:'Liberation Mono',monospace;letter-spacing:-0.12px;">drwxr-xr-x&nbsp;&nbsp;&nbsp;5&nbsp;user&nbsp;&nbsp;staff&nbsp;&nbsp;&nbsp;&nbsp;129&nbsp;Dec&nbsp;&nbsp;7&nbsp;06:10&nbsp;.git</div><div class="t" style="left:1.2px;top:36.199999999999996px;font-size:2.7px;color:#dcdcdc;font-family:'Liberation Mono',monospace;letter-spacing:-0.12px;">-rw-r--r--&nbsp;&nbsp;11&nbsp;user&nbsp;&nbsp;staff&nbsp;&nbsp;&nbsp;3358&nbsp;Nov&nbsp;22&nbsp;20:13&nbsp;.git</div><div class="t" style="left:1.2px;top:39.23px;font-size:2.7px;color:#dcdcdc;font-family:'Liberation Mono',monospace;letter-spacing:-0.12px;">drwxr-xr-x&nbsp;&nbsp;13&nbsp;user&nbsp;&nbsp;staff&nbsp;&nbsp;&nbsp;4995&nbsp;Dec&nbsp;12&nbsp;13:10&nbsp;.git</div><div class="t" style="left:1.2px;top:42.26px;font-size:2.7px;color:#dcdcdc;font-family:'Liberation Mono',monospace;letter-spacing:-0.12px;">-rw-r--r--&nbsp;&nbsp;&nbsp;3&nbsp;user&nbsp;&nbsp;staff&nbsp;&nbsp;&nbsp;5537&nbsp;Jan&nbsp;27&nbsp;19:37&nbsp;.</div><div class="t" style="left:1.2px;top:45.29px;font-size:2.7px;color:#dcdcdc;font-family:'Liberation Mono',monospace;letter-spacing:-0.12px;">-rw-r--r--&nbsp;&nbsp;&nbsp;3&nbsp;user&nbsp;&nbsp;staff&nbsp;&nbsp;&nbsp;5178&nbsp;Jan&nbsp;27&nbsp;09:30&nbsp;Makefile</div><div class="t" style="left:1.2px;top:48.31999999999999px;font-size:2.7px;color:#dcdcdc;font-family:'Liberation Mono',monospace;letter-spacing:-0.12px;">-rw-r--r--&nbsp;&nbsp;&nbsp;6&nbsp;user&nbsp;&nbsp;staff&nbsp;&nbsp;&nbsp;7984&nbsp;Jan&nbsp;23&nbsp;05:03&nbsp;config.php</div><div class="t" style="left:1.2px;top:51.349999999999994px;font-size:2.7px;color:#dcdcdc;font-family:'Liberation Mono',monospace;letter-spacing:-0.12px;">drwxr-xr-x&nbsp;&nbsp;12&nbsp;user&nbsp;&nbsp;staff&nbsp;&nbsp;&nbsp;6723&nbsp;Dec&nbsp;18&nbsp;13:23&nbsp;lib</div><div class="t" style="left:1.2px;top:54.379999999999995px;font-size:2.7px;color:#dcdcdc;font-family:'Liberation Mono',monospace;letter-spacing:-0.12px;">drwxr-xr-x&nbsp;&nbsp;15&nbsp;user&nbsp;&nbsp;staff&nbsp;&nbsp;&nbsp;&nbsp;865&nbsp;Nov&nbsp;&nbsp;6&nbsp;19:12&nbsp;..</div><div class="t" style="left:1.2px;top:57.41px;font-size:2.7px;color:#dcdcdc;font-family:'Liberation Mono',monospace;letter-spacing:-0.12px;">drwxr-xr-x&nbsp;&nbsp;15&nbsp;user&nbsp;&nbsp;staff&nbsp;&nbsp;&nbsp;5742&nbsp;Nov&nbsp;12&nbsp;16:16&nbsp;.htaccess-sample-default</div><div class="t" style="left:1.2px;top:60.44px;font-size:2.7px;color:#dcdcdc;font-family:'Liberation Mono',monospace;letter-spacing:-0.12px;">mac:project&nbsp;user$&nbsp;git&nbsp;st</div><div class="t" style="left:1.2px;top:63.46999999999999px;font-size:2.7px;color:#dcdcdc;font-family:'Liberation Mono',monospace;letter-spacing:-0.12px;">mac:project&nbsp;user$&nbsp;git&nbsp;log&nbsp;█</div></div>
<!-- dlists -->
<div style="left:573.3px;top:68.4px;width:33.3px;height:57.2px;background:rgba(22,32,20,0.84);"><div style="left:0px;top:0px;width:33.3px;height:2.8px;background:#344230;"></div><div style="left:24.299999999999997px;top:0.7px;width:7px;height:1.3px;background:#a0b0a0;"></div><div class="t" style="left:2.5px;top:4.6px;font-size:3.0px;color:#d4dcd4;">Andrey</div><div style="left:29.499999999999996px;top:4.8999999999999995px;width:2.2px;height:2.2px;border-radius:50%;background:#a4e878;"></div><div class="t" style="left:2.5px;top:9.100000000000001px;font-size:3.0px;color:#d4dcd4;">Roman Sokolov</div><div style="left:29.499999999999996px;top:9.4px;width:2.2px;height:2.2px;border-radius:50%;background:#a4e878;"></div><div class="t" style="left:2.5px;top:13.600000000000001px;font-size:3.0px;color:#d4dcd4;">Alina Borisova</div><div style="left:29.499999999999996px;top:13.9px;width:2.2px;height:2.2px;border-radius:50%;background:#a4e878;"></div><div class="t" style="left:2.5px;top:18.1px;font-size:3.0px;color:#d4dcd4;">Tony Katz</div><div style="left:29.499999999999996px;top:18.400000000000002px;width:2.2px;height:2.2px;border-radius:50%;background:#a4e878;"></div><div class="t" style="left:2.5px;top:22.6px;font-size:3.0px;color:#d4dcd4;">Vlad</div><div style="left:29.499999999999996px;top:22.900000000000002px;width:2.2px;height:2.2px;border-radius:50%;background:#a4e878;"></div><div class="t" style="left:2.5px;top:27.1px;font-size:3.0px;color:#d4dcd4;">Svetlana</div><div style="left:29.499999999999996px;top:27.400000000000002px;width:2.2px;height:2.2px;border-radius:50%;background:#a4e878;"></div><div class="t" style="left:2.5px;top:31.6px;font-size:3.0px;color:#d4dcd4;">Olya</div><div style="left:29.499999999999996px;top:31.900000000000002px;width:2.2px;height:2.2px;border-radius:50%;background:#a4e878;"></div><div class="t" style="left:2.5px;top:36.099999999999994px;font-size:3.0px;color:#7c8478;">Masha</div><div style="left:29.499999999999996px;top:36.4px;width:2.2px;height:2.2px;border-radius:50%;background:#e05a40;"></div><div class="t" style="left:2.5px;top:40.599999999999994px;font-size:3.0px;color:#7c8478;">Yuriy Gord</div><div style="left:29.499999999999996px;top:40.9px;width:2.2px;height:2.2px;border-radius:50%;background:#e05a40;"></div><div class="t" style="left:2.5px;top:45.099999999999994px;font-size:3.0px;color:#7c8478;">Pasha Kim</div><div style="left:29.499999999999996px;top:45.4px;width:2.2px;height:2.2px;border-radius:50%;background:#e05a40;"></div><div class="t" style="left:2.5px;top:49.599999999999994px;font-size:3.0px;color:#7c8478;">Lena Dots</div><div style="left:29.499999999999996px;top:49.9px;width:2.2px;height:2.2px;border-radius:50%;background:#e05a40;"></div><div class="t" style="left:2.5px;top:54.099999999999994px;font-size:3.0px;color:#7c8478;">Vadim</div><div style="left:29.499999999999996px;top:54.4px;width:2.2px;height:2.2px;border-radius:50%;background:#e05a40;"></div></div><div style="left:577.5px;top:140px;width:34.1px;height:8.6px;background:rgba(22,32,20,0.84);"><div style="left:0px;top:0px;width:34.1px;height:2.8px;background:#344230;"></div><div style="left:25.1px;top:0.7px;width:7px;height:1.3px;background:#a0b0a0;"></div><div class="t" style="left:2.5px;top:3.9px;font-size:3.0px;color:#d4dcd4;">Me</div><div style="left:30.3px;top:4.2px;width:2.2px;height:2.2px;border-radius:50%;background:#a4e878;"></div></div><div style="left:577.5px;top:152.8px;width:34.1px;height:52.9px;background:rgba(22,32,20,0.84);"><div style="left:0px;top:0px;width:34.1px;height:2.8px;background:#344230;"></div><div style="left:25.1px;top:0.7px;width:7px;height:1.3px;background:#a0b0a0;"></div><div class="t" style="left:2.5px;top:4.0px;font-size:3.0px;color:#d4dcd4;">Roman Sokolov</div><div style="left:30.3px;top:4.3px;width:2.2px;height:2.2px;border-radius:50%;background:#a4e878;"></div><div class="t" style="left:2.5px;top:8.490000000000002px;font-size:3.0px;color:#d4dcd4;">Alina Borisova</div><div style="left:30.3px;top:8.790000000000001px;width:2.2px;height:2.2px;border-radius:50%;background:#a4e878;"></div><div class="t" style="left:2.5px;top:12.980000000000002px;font-size:3.0px;color:#d4dcd4;">Svetlana</div><div style="left:30.3px;top:13.280000000000001px;width:2.2px;height:2.2px;border-radius:50%;background:#a4e878;"></div><div class="t" style="left:2.5px;top:17.470000000000002px;font-size:3.0px;color:#d4dcd4;">Oleg</div><div style="left:30.3px;top:17.770000000000003px;width:2.2px;height:2.2px;border-radius:50%;background:#a4e878;"></div><div class="t" style="left:2.5px;top:21.960000000000004px;font-size:3.0px;color:#d4dcd4;">Lena</div><div style="left:30.3px;top:22.260000000000005px;width:2.2px;height:2.2px;border-radius:50%;background:#a4e878;"></div><div class="t" style="left:2.5px;top:26.450000000000006px;font-size:3.0px;color:#d4dcd4;">Kostya</div><div style="left:30.3px;top:26.750000000000007px;width:2.2px;height:2.2px;border-radius:50%;background:#a4e878;"></div><div class="t" style="left:2.5px;top:30.94000000000001px;font-size:3.0px;color:#d4dcd4;">Inna</div><div style="left:30.3px;top:31.24000000000001px;width:2.2px;height:2.2px;border-radius:50%;background:#a4e878;"></div><div class="t" style="left:2.5px;top:35.43000000000001px;font-size:3.0px;color:#7c8478;">Kirill</div><div style="left:30.3px;top:35.73000000000001px;width:2.2px;height:2.2px;border-radius:50%;background:#e05a40;"></div><div class="t" style="left:2.5px;top:39.92000000000001px;font-size:3.0px;color:#7c8478;">Oleksandr</div><div style="left:30.3px;top:40.22000000000001px;width:2.2px;height:2.2px;border-radius:50%;background:#e05a40;"></div><div class="t" style="left:2.5px;top:44.41000000000001px;font-size:3.0px;color:#7c8478;">Lora</div><div style="left:30.3px;top:44.710000000000015px;width:2.2px;height:2.2px;border-radius:50%;background:#e05a40;"></div><div class="t" style="left:2.5px;top:48.90000000000001px;font-size:3.0px;color:#7c8478;">Tina Lund</div><div style="left:30.3px;top:49.20000000000002px;width:2.2px;height:2.2px;border-radius:50%;background:#e05a40;"></div></div>
<!-- finder2 -->
<div class="w" style="left:614.2px;top:17.8px;width:134px;height:162px;background:#fff;"><div style="left:0px;top:0px;width:134px;height:11.3px;background:linear-gradient(180deg,#ececec 0%,#d8d8d8 40%,#c8c8c8 100%);border-bottom:0.5px solid #8c8c8c;"></div><div style="left:2.0px;top:1px;width:2.2px;height:2.2px;border-radius:50%;background:#c2c2c2;"></div><div style="left:5.4px;top:1px;width:2.2px;height:2.2px;border-radius:50%;background:#c2c2c2;"></div><div style="left:8.8px;top:1px;width:2.2px;height:2.2px;border-radius:50%;background:#c2c2c2;"></div><div class="t" style="left:60px;top:0.9px;font-size:2.8px;color:#555;">Screenshots</div><div style="left:3px;top:5.9px;width:9px;height:3.4px;background:#eee;border:0.4px solid #b0b0b0;border-radius:1.2px;"></div><div style="left:30px;top:5.9px;width:17px;height:3.4px;background:#eee;border:0.4px solid #b0b0b0;border-radius:1.2px;"></div><div style="left:41px;top:5.9px;width:4.5px;height:3.4px;background:#8a8a8a;"></div><div style="left:63px;top:5.9px;width:7px;height:3.4px;background:#eee;border:0.4px solid #b0b0b0;border-radius:1.2px;"></div><div style="left:72px;top:5.9px;width:7px;height:3.4px;background:#eee;border:0.4px solid #b0b0b0;border-radius:1.2px;"></div><div style="left:101px;top:5.7px;width:30px;height:3.8px;background:#fff;border:0.4px solid #b0b0b0;border-radius:2px;"></div><div style="left:0px;top:11.3px;width:31.1px;height:145.7px;background:#e2e6ec;border-right:0.5px solid #a8a8a8;"></div><div class="t" style="left:1.5px;top:13.2px;font-size:2.6px;color:#6a7682;font-weight:bold;">▼ DEVICES</div><div style="left:5px;top:17.2px;width:2.6px;height:2.6px;background:#6a7488;border-radius:0.5px;"></div><div class="t" style="left:9px;top:17.4px;font-size:2.8px;color:#222;">Mac</div><div style="left:5px;top:21.400000000000002px;width:2.6px;height:2.6px;background:#6a7488;border-radius:0.5px;"></div><div class="t" style="left:9px;top:21.6px;font-size:2.8px;color:#222;">Macintosh</div><div style="left:5px;top:25.6px;width:2.6px;height:2.6px;background:#6a7488;border-radius:0.5px;"></div><div class="t" style="left:9px;top:25.8px;font-size:2.8px;color:#222;">iDisk</div><div style="left:5px;top:29.6px;width:2.6px;height:2.6px;background:#6a7488;border-radius:0.5px;"></div><div class="t" style="left:9px;top:29.8px;font-size:2.8px;color:#222;">BootCamp disk ▲</div><div class="t" style="left:1.5px;top:35.3px;font-size:2.6px;color:#6a7682;font-weight:bold;">▼ SHARED</div><div style="left:5px;top:39.5px;width:2.6px;height:2.6px;background:#6a7488;border-radius:0.5px;"></div><div class="t" style="left:9px;top:39.7px;font-size:2.8px;color:#222;">office</div><div class="t" style="left:1.5px;top:45.6px;font-size:2.6px;color:#6a7682;font-weight:bold;">▼ PLACES</div><div style="left:5px;top:49.599999999999994px;width:2.6px;height:2.6px;background:#6a7488;border-radius:0.5px;"></div><div class="t" style="left:9px;top:49.8px;font-size:2.8px;color:#222;">Desktop</div><div style="left:0px;top:53.099999999999994px;width:31.1px;height:3.7px;background:#8f959c;"></div><div style="left:5px;top:53.599999999999994px;width:2.6px;height:2.6px;background:#fff;border-radius:0.5px;"></div><div class="t" style="left:9px;top:53.8px;font-size:2.8px;color:#fff;font-weight:bold;">Screenshots</div><div style="left:5px;top:57.699999999999996px;width:2.6px;height:2.6px;background:#6a7488;border-radius:0.5px;"></div><div class="t" style="left:9px;top:57.9px;font-size:2.8px;color:#222;">Photos</div><div style="left:5px;top:61.9px;width:2.6px;height:2.6px;background:#6a7488;border-radius:0.5px;"></div><div class="t" style="left:9px;top:62.1px;font-size:2.8px;color:#222;">User</div><div style="left:5px;top:65.89999999999999px;width:2.6px;height:2.6px;background:#6a7488;border-radius:0.5px;"></div><div class="t" style="left:9px;top:66.1px;font-size:2.8px;color:#222;">Applications</div><div style="left:5px;top:70.1px;width:2.6px;height:2.6px;background:#6a7488;border-radius:0.5px;"></div><div class="t" style="left:9px;top:70.3px;font-size:2.8px;color:#222;">Documents</div><div style="left:5px;top:74.1px;width:2.6px;height:2.6px;background:#6a7488;border-radius:0.5px;"></div><div class="t" style="left:9px;top:74.3px;font-size:2.8px;color:#222;">Dropbox</div><div style="left:5px;top:78.1px;width:2.6px;height:2.6px;background:#6a7488;border-radius:0.5px;"></div><div class="t" style="left:9px;top:78.3px;font-size:2.8px;color:#222;">Downloads</div><div class="t" style="left:1.5px;top:83.8px;font-size:2.6px;color:#6a7682;font-weight:bold;">▼ SEARCH FOR</div><div style="left:5px;top:88.89999999999999px;width:2.6px;height:2.6px;background:#6a7488;border-radius:0.5px;"></div><div class="t" style="left:9px;top:89.1px;font-size:2.8px;color:#222;">Today</div><div style="left:5px;top:92.6px;width:2.6px;height:2.6px;background:#6a7488;border-radius:0.5px;"></div><div class="t" style="left:9px;top:92.8px;font-size:2.8px;color:#222;">Yesterday</div><div style="left:5px;top:96.6px;width:2.6px;height:2.6px;background:#6a7488;border-radius:0.5px;"></div><div class="t" style="left:9px;top:96.8px;font-size:2.8px;color:#222;">Past Week</div><div style="left:5px;top:100.6px;width:2.6px;height:2.6px;background:#6a7488;border-radius:0.5px;"></div><div class="t" style="left:9px;top:100.8px;font-size:2.8px;color:#222;">All Images</div><div style="left:5px;top:104.89999999999999px;width:2.6px;height:2.6px;background:#6a7488;border-radius:0.5px;"></div><div class="t" style="left:9px;top:105.1px;font-size:2.8px;color:#222;">All Movies</div><div style="left:5px;top:109.3px;width:2.6px;height:2.6px;background:#6a7488;border-radius:0.5px;"></div><div class="t" style="left:9px;top:109.5px;font-size:2.8px;color:#222;">All Documents</div><div style="left:31.1px;top:11.3px;width:19.1px;height:145.7px;background:#fff;border-right:0.5px solid #bbb;"></div><div class="t" style="left:31.900000000000002px;top:12px;font-size:2.8px;color:#111;width:12px;overflow:hidden;">quis magna sed</div><div class="t" style="left:45.1px;top:12px;font-size:2.4px;color:#555;">►</div><div class="t" style="left:31.900000000000002px;top:15.8px;font-size:2.8px;color:#111;width:6px;overflow:hidden;">minim commodo aliquip</div><div class="t" style="left:31.900000000000002px;top:19.6px;font-size:2.8px;color:#111;width:6px;overflow:hidden;">minim dolor nostrud</div><div class="t" style="left:45.1px;top:19.6px;font-size:2.4px;color:#555;">►</div><div class="t" style="left:31.900000000000002px;top:23.4px;font-size:2.8px;color:#111;width:12px;overflow:hidden;">laboris eiusmod eiusmod</div><div class="t" style="left:45.1px;top:23.4px;font-size:2.4px;color:#555;">►</div><div class="t" style="left:31.900000000000002px;top:63px;font-size:2.8px;color:#111;width:6px;overflow:hidden;">sed commodo amet</div><div class="t" style="left:31.900000000000002px;top:66.8px;font-size:2.8px;color:#111;width:12px;overflow:hidden;">adipiscing aliqua ut</div><div class="t" style="left:31.900000000000002px;top:70.6px;font-size:2.8px;color:#111;width:12px;overflow:hidden;">consectetur magna ut</div><div class="t" style="left:45.1px;top:70.6px;font-size:2.4px;color:#555;">►</div><div class="t" style="left:31.900000000000002px;top:74.4px;font-size:2.8px;color:#111;width:11px;overflow:hidden;">dolor incididunt lorem</div><div class="t" style="left:31.900000000000002px;top:78.2px;font-size:2.8px;color:#111;width:6px;overflow:hidden;">nostrud ea sed</div><div class="t" style="left:45.1px;top:78.2px;font-size:2.4px;color:#555;">►</div><div class="t" style="left:31.900000000000002px;top:82px;font-size:2.8px;color:#111;width:12px;overflow:hidden;">elit lorem elit</div><div class="t" style="left:31.900000000000002px;top:96px;font-size:2.8px;color:#111;width:9px;overflow:hidden;">incididunt minim lorem</div><div class="t" style="left:31.900000000000002px;top:104px;font-size:2.8px;color:#111;width:9px;overflow:hidden;">ipsum commodo consectetur</div><div class="t" style="left:31.900000000000002px;top:108px;font-size:2.8px;color:#111;width:8px;overflow:hidden;">incididunt ullamco amet</div><div class="t" style="left:45.1px;top:108px;font-size:2.4px;color:#555;">►</div><div class="t" style="left:31.900000000000002px;top:112px;font-size:2.8px;color:#111;width:6px;overflow:hidden;">do tempor dolor</div><div class="t" style="left:45.1px;top:112px;font-size:2.4px;color:#555;">►</div><div class="t" style="left:31.900000000000002px;top:118px;font-size:2.8px;color:#111;width:8px;overflow:hidden;">do magna dolor</div><div class="t" style="left:45.1px;top:118px;font-size:2.4px;color:#555;">►</div><div class="t" style="left:31.900000000000002px;top:122px;font-size:2.8px;color:#111;width:12px;overflow:hidden;">et eiusmod commodo</div><div class="t" style="left:45.1px;top:122px;font-size:2.4px;color:#555;">►</div><div class="t" style="left:31.900000000000002px;top:130px;font-size:2.8px;color:#111;width:11px;overflow:hidden;">consequat consectetur veniam</div><div class="t" style="left:45.1px;top:130px;font-size:2.4px;color:#555;">►</div><div class="t" style="left:31.900000000000002px;top:134px;font-size:2.8px;color:#111;width:8px;overflow:hidden;">quis nisi ut</div><div class="t" style="left:45.1px;top:134px;font-size:2.4px;color:#555;">►</div><div class="t" style="left:31.900000000000002px;top:138px;font-size:2.8px;color:#111;width:8px;overflow:hidden;">ipsum nostrud minim</div><div class="t" style="left:45.1px;top:138px;font-size:2.4px;color:#555;">►</div><div class="t" style="left:31.900000000000002px;top:142px;font-size:2.8px;color:#111;width:6px;overflow:hidden;">ut labore nisi</div><div class="t" style="left:45.1px;top:142px;font-size:2.4px;color:#555;">►</div><div class="t" style="left:31.900000000000002px;top:146px;font-size:2.8px;color:#111;width:6px;overflow:hidden;">enim aliqua adipiscing</div><div class="t" style="left:31.900000000000002px;top:150px;font-size:2.8px;color:#111;width:6px;overflow:hidden;">ipsum nostrud laboris</div><div class="t" style="left:45.1px;top:150px;font-size:2.4px;color:#555;">►</div><div class="t" style="left:31.900000000000002px;top:153px;font-size:2.8px;color:#111;width:9px;overflow:hidden;">amet laboris labore</div><div class="t" style="left:45.1px;top:153px;font-size:2.4px;color:#555;">►</div><div style="left:47.2px;top:11.3px;width:3px;height:145.7px;background:#f0f0f0;border-left:0.5px solid #ccc;"></div><div style="left:47.6px;top:88px;width:2.2px;height:5px;background:#c0c4c8;border-radius:1px;"></div><div style="left:50.2px;top:11.3px;width:39.8px;height:145.7px;background:#fff;border-right:0.5px solid #bbb;"></div><div style="left:51.2px;top:11.8px;width:2.6px;height:2.6px;background:#7d8ca6;border-radius:0.4px;"></div><div class="t" style="left:54.800000000000004px;top:12.0px;font-size:2.8px;color:#111;">Screen 1</div><div style="left:51.2px;top:15.65px;width:2.6px;height:2.6px;background:#7d8ca6;border-radius:0.4px;"></div><div class="t" style="left:54.800000000000004px;top:15.85px;font-size:2.8px;color:#111;">Screen shot 2012-01…</div><div style="left:50.2px;top:19.0px;width:37px;height:3.7px;background:#8f959c;"></div><div style="left:51.2px;top:19.5px;width:2.6px;height:2.6px;background:#7d8ca6;border-radius:0.4px;"></div><div class="t" style="left:54.800000000000004px;top:19.7px;font-size:2.8px;color:#fff;font-weight:bold;">Screen shot 2012-01-04…</div><div style="left:51.2px;top:23.35px;width:2.6px;height:2.6px;background:#7d8ca6;border-radius:0.4px;"></div><div class="t" style="left:54.800000000000004px;top:23.55px;font-size:2.8px;color:#111;">Shots</div><div style="left:51.2px;top:27.2px;width:2.6px;height:2.6px;background:#7d8ca6;border-radius:0.4px;"></div><div class="t" style="left:54.800000000000004px;top:27.4px;font-size:2.8px;color:#111;">Screen shot 3</div><div style="left:86.5px;top:11.3px;width:3px;height:145.7px;background:#f0f0f0;border-left:0.5px solid #ccc;"></div><div style="left:90.0px;top:11.3px;width:44.0px;height:145.7px;background:#fff;"></div><div class="t" style="left:93.0px;top:12px;font-size:2.6px;color:#888;">Preview:</div><svg style="left:101.0px;top:15.500px" width="21" height="26" viewBox="0 0 42 52"><path d="M2 1h26l12 12v38H2z" fill="#f4f4f4" stroke="#b8b8b8" stroke-width="1"/><path d="M28 1v12h12z" fill="#d6d6d6" stroke="#b8b8b8" stroke-width="1"/></svg><div class="t" style="left:91.0px;top:45.8px;font-size:2.5px;color:#888;width:12px;text-align:right;">Name</div><div class="t" style="left:104.0px;top:45.8px;font-size:2.5px;color:#222;">Screen shot 2012-01</div><div class="t" style="left:104.0px;top:48.65px;font-size:2.5px;color:#222;">-04 at 11.35.png</div><div class="t" style="left:91.0px;top:51.5px;font-size:2.5px;color:#888;width:12px;text-align:right;">Kind</div><div class="t" style="left:104.0px;top:51.5px;font-size:2.5px;color:#222;">Portable Network</div><div class="t" style="left:91.0px;top:54.349999999999994px;font-size:2.5px;color:#888;width:12px;text-align:right;">Size</div><div class="t" style="left:104.0px;top:54.349999999999994px;font-size:2.5px;color:#222;">1.2 MB on disk</div><div class="t" style="left:91.0px;top:57.199999999999996px;font-size:2.5px;color:#888;width:12px;text-align:right;">Created</div><div class="t" style="left:104.0px;top:57.199999999999996px;font-size:2.5px;color:#222;">1/4/12 11:35</div><div class="t" style="left:104.0px;top:60.05px;font-size:2.5px;color:#222;">AM</div><div class="t" style="left:91.0px;top:62.9px;font-size:2.5px;color:#888;width:12px;text-align:right;">Modified</div><div class="t" style="left:104.0px;top:62.9px;font-size:2.5px;color:#222;">1/4/12 11:35</div><div class="t" style="left:104.0px;top:65.75px;font-size:2.5px;color:#222;">AM</div><div class="t" style="left:91.0px;top:68.6px;font-size:2.5px;color:#888;width:12px;text-align:right;">Last opened</div><div class="t" style="left:104.0px;top:68.6px;font-size:2.5px;color:#222;">1/4/12 11:35</div><div class="t" style="left:104.0px;top:71.45px;font-size:2.5px;color:#222;">AM</div><div style="left:102.0px;top:75px;width:19px;height:3.4px;background:#f4f4f4;border:0.5px solid #bbb;border-radius:1.5px;"></div><div class="t" style="left:104.0px;top:75.6px;font-size:2.5px;color:#999;">More Info…</div><div style="left:50.2px;top:154.2px;width:83.8px;height:2.6px;background:#f0f0f0;border-top:0.4px solid #ccc;"></div><div style="left:51.2px;top:154.7px;width:75.8px;height:1.7px;background:#c4c8cc;border-radius:0.9px;"></div><div style="left:0px;top:157px;width:134px;height:5px;background:linear-gradient(180deg,#e4e4e4,#cdcdcd);border-top:0.5px solid #999;"></div><div class="t" style="left:44px;top:158.2px;font-size:2.7px;color:#333;">1 of 5 selected, 87.42 GB available</div></div>
<!-- editor -->
<div class="w" style="left:315.3px;top:173px;width:260.7px;height:194.4px;background:#fff;"><div style="left:0px;top:0px;width:260.7px;height:15.8px;background:linear-gradient(180deg,#ededed 0%,#dcdcdc 30%,#cbcbcb 100%);border-bottom:0.5px solid #8c8c8c;"></div><div style="left:2.0px;top:1.1px;width:2.2px;height:2.2px;border-radius:50%;background:#c2c2c2;"></div><div style="left:5.4px;top:1.1px;width:2.2px;height:2.2px;border-radius:50%;background:#c2c2c2;"></div><div style="left:8.8px;top:1.1px;width:2.2px;height:2.2px;border-radius:50%;background:#c2c2c2;"></div><div class="t" style="left:128px;top:1px;font-size:2.8px;color:#666;">index.php</div><div style="left:47.7px;top:6px;width:5.6px;height:5.6px;background:linear-gradient(135deg,#e8f4e8,#3a9a3a);border-radius:0.8px;opacity:.85;"></div><div class="t" style="left:46.5px;top:12.6px;font-size:2.5px;color:#333;width:8px;text-align:center;">Check</div><div style="left:56.7px;top:6px;width:5.6px;height:5.6px;background:linear-gradient(135deg,#f0d8c8,#d86a40);border-radius:0.8px;opacity:.85;"></div><div class="t" style="left:55.5px;top:12.6px;font-size:2.5px;color:#333;width:8px;text-align:center;">Edit</div><div style="left:65.4px;top:6px;width:5.6px;height:5.6px;background:linear-gradient(135deg,#d8e8f8,#3a80c8);border-radius:0.8px;opacity:.85;"></div><div class="t" style="left:64.2px;top:12.6px;font-size:2.5px;color:#333;width:8px;text-align:center;">Preview</div><div style="left:74.7px;top:6px;width:5.6px;height:5.6px;background:linear-gradient(135deg,#f4f4f4,#b0b8c0);border-radius:0.8px;opacity:.85;"></div><div class="t" style="left:73.5px;top:12.6px;font-size:2.5px;color:#333;width:8px;text-align:center;">Save</div><div style="left:85.2px;top:6px;width:5.6px;height:5.6px;background:linear-gradient(135deg,#556,#2a3a2a);border-radius:0.8px;opacity:.85;"></div><div class="t" style="left:84px;top:12.6px;font-size:2.5px;color:#333;width:8px;text-align:center;">Terminal</div><div style="left:95.2px;top:6px;width:5.6px;height:5.6px;background:linear-gradient(135deg,#9a8ad0,#7a6ab0);border-radius:0.8px;opacity:.85;"></div><div class="t" style="left:94px;top:12.6px;font-size:2.5px;color:#333;width:8px;text-align:center;">Color</div><div style="left:224px;top:6.6px;width:34.5px;height:4.3px;background:#fff;border:0.4px solid #b0b0b0;border-radius:2px;"></div><div class="t" style="left:227px;top:7.4px;font-size:2.5px;color:#888;">Q- Search</div><div class="t" style="left:238px;top:12.6px;font-size:2.5px;color:#333;">Search</div><div style="left:0px;top:15.8px;width:260.7px;height:4.4px;background:linear-gradient(180deg,#d4d4d4,#bcbcbc);border-bottom:0.5px solid #888;"></div><div style="left:21.5px;top:15.8px;width:22.5px;height:4.4px;background:linear-gradient(180deg,#9cc4ee,#7aa8de);"></div><div class="t" style="left:9px;top:16.7px;font-size:2.7px;color:#333;">Files</div><div class="t" style="left:27px;top:16.7px;font-size:2.7px;color:#fff;">Symbols</div><div class="t" style="left:46px;top:16.7px;font-size:2.5px;color:#444;">◄ ►</div><div class="t" style="left:60px;top:16.7px;font-size:2.7px;color:#222;">index.php</div><div class="t" style="left:96px;top:16.7px;font-size:2.7px;color:#222;">functions.php</div><div style="left:0px;top:20.2px;width:44px;height:169px;background:#e9ecf0;border-right:0.5px solid #a6a6a6;"></div><div class="t" style="left:2px;top:22.3px;font-size:2.8px;color:#333;">▼ project</div><div class="t" style="left:34px;top:22.3px;font-size:2.5px;color:#555;">* ▼</div><div class="t" style="left:8px;top:27px;font-size:2.7px;color:#000;">about.php</div><div style="left:4.3px;top:26.8px;width:2.2px;height:2.7px;background:#fdfdfd;border:0.4px solid #aaa;"></div><div class="t" style="left:8px;top:31.1px;font-size:2.7px;color:#000;">admin_index.php</div><div style="left:4.3px;top:30.900000000000002px;width:2.2px;height:2.7px;background:#fdfdfd;border:0.4px solid #aaa;"></div><div class="t" style="left:8px;top:35.2px;font-size:2.7px;color:#000;">admin.css</div><div style="left:4.3px;top:35.0px;width:2.2px;height:2.7px;background:#fdfdfd;border:0.4px solid #aaa;"></div><div class="t" style="left:8px;top:39.300000000000004px;font-size:2.7px;color:#000;">admin.js</div><div style="left:4.3px;top:39.1px;width:2.2px;height:2.7px;background:#fdfdfd;border:0.4px solid #aaa;"></div><div class="t" style="left:8px;top:43.400000000000006px;font-size:2.7px;color:#000;">articles.edit.php</div><div style="left:4.3px;top:43.2px;width:2.2px;height:2.7px;background:#fdfdfd;border:0.4px solid #aaa;"></div><div class="t" style="left:8px;top:47.50000000000001px;font-size:2.7px;color:#000;">articles.list.php</div><div style="left:4.3px;top:47.300000000000004px;width:2.2px;height:2.7px;background:#fdfdfd;border:0.4px solid #aaa;"></div><div class="t" style="left:8px;top:51.60000000000001px;font-size:2.7px;color:#000;">articles.view.php</div><div style="left:4.3px;top:51.400000000000006px;width:2.2px;height:2.7px;background:#fdfdfd;border:0.4px solid #aaa;"></div><div class="t" style="left:8px;top:55.70000000000001px;font-size:2.7px;color:#000;">articles.comments.php</div><div style="left:4.3px;top:55.50000000000001px;width:2.2px;height:2.7px;background:#fdfdfd;border:0.4px solid #aaa;"></div><div class="t" style="left:8px;top:59.80000000000001px;font-size:2.7px;color:#000;">articles.rss.php</div><div style="left:4.3px;top:59.60000000000001px;width:2.2px;height:2.7px;background:#fdfdfd;border:0.4px solid #aaa;"></div><div class="t" style="left:8px;top:63.90000000000001px;font-size:2.7px;color:#000;">articles.search.php</div><div style="left:4.3px;top:63.70000000000001px;width:2.2px;height:2.7px;background:#fdfdfd;border:0.4px solid #aaa;"></div><div class="t" style="left:8px;top:68.00000000000001px;font-size:2.7px;color:#000;">articles.tags.php</div><div style="left:4.3px;top:67.80000000000001px;width:2.2px;height:2.7px;background:#fdfdfd;border:0.4px solid #aaa;"></div><div class="t" style="left:8px;top:72.10000000000001px;font-size:2.7px;color:#000;">articles.archive.php</div><div style="left:4.3px;top:71.9px;width:2.2px;height:2.7px;background:#fdfdfd;border:0.4px solid #aaa;"></div><div class="t" style="left:8px;top:76.2px;font-size:2.7px;color:#000;">categories.php</div><div style="left:4.3px;top:76.0px;width:2.2px;height:2.7px;background:#fdfdfd;border:0.4px solid #aaa;"></div><div class="t" style="left:8px;top:80.3px;font-size:2.7px;color:#000;">config.php</div><div style="left:4.3px;top:80.1px;width:2.2px;height:2.7px;background:#fdfdfd;border:0.4px solid #aaa;"></div><div class="t" style="left:8px;top:84.39999999999999px;font-size:2.7px;color:#000;">contact.php</div><div style="left:4.3px;top:84.19999999999999px;width:2.2px;height:2.7px;background:#fdfdfd;border:0.4px solid #aaa;"></div><div class="t" style="left:8px;top:88.49999999999999px;font-size:2.7px;color:#000;">contact.form.php</div><div style="left:4.3px;top:88.29999999999998px;width:2.2px;height:2.7px;background:#fdfdfd;border:0.4px solid #aaa;"></div><div class="t" style="left:8px;top:92.59999999999998px;font-size:2.7px;color:#000;">footer.php</div><div style="left:4.3px;top:92.39999999999998px;width:2.2px;height:2.7px;background:#fdfdfd;border:0.4px solid #aaa;"></div><div class="t" style="left:8px;top:96.69999999999997px;font-size:2.7px;color:#000;">functions.php</div><div style="left:4.3px;top:96.49999999999997px;width:2.2px;height:2.7px;background:#fdfdfd;border:0.4px solid #aaa;"></div><div class="t" style="left:8px;top:100.79999999999997px;font-size:2.7px;color:#000;">header.php</div><div style="left:4.3px;top:100.59999999999997px;width:2.2px;height:2.7px;background:#fdfdfd;border:0.4px solid #aaa;"></div><div style="left:0px;top:104.19999999999996px;width:41.5px;height:4px;background:#8e949c;"></div><div class="t" style="left:8px;top:104.89999999999996px;font-size:2.8px;color:#fff;font-weight:bold;">header.nav.php</div><div style="left:4.3px;top:104.69999999999996px;width:2.2px;height:2.7px;background:#fdfdfd;border:0.4px solid #aaa;"></div><div class="t" style="left:8px;top:108.99999999999996px;font-size:2.7px;color:#000;">index.php</div><div style="left:4.3px;top:108.79999999999995px;width:2.2px;height:2.7px;background:#fdfdfd;border:0.4px solid #aaa;"></div><div class="t" style="left:8px;top:113.09999999999995px;font-size:2.7px;color:#000;">login.php</div><div style="left:4.3px;top:112.89999999999995px;width:2.2px;height:2.7px;background:#fdfdfd;border:0.4px solid #aaa;"></div><div class="t" style="left:8px;top:117.19999999999995px;font-size:2.7px;color:#000;">logout.php</div><div style="left:4.3px;top:116.99999999999994px;width:2.2px;height:2.7px;background:#fdfdfd;border:0.4px solid #aaa;"></div><div class="t" style="left:8px;top:121.29999999999994px;font-size:2.7px;color:#000;">register.php</div><div style="left:4.3px;top:121.09999999999994px;width:2.2px;height:2.7px;background:#fdfdfd;border:0.4px solid #aaa;"></div><div class="t" style="left:8px;top:125.39999999999993px;font-size:2.7px;color:#000;">register.ok.php</div><div style="left:4.3px;top:125.19999999999993px;width:2.2px;height:2.7px;background:#fdfdfd;border:0.4px solid #aaa;"></div><div class="t" style="left:8px;top:129.49999999999994px;font-size:2.7px;color:#000;">register.mail.php</div><div style="left:4.3px;top:129.29999999999995px;width:2.2px;height:2.7px;background:#fdfdfd;border:0.4px solid #aaa;"></div><div class="t" style="left:8px;top:133.59999999999994px;font-size:2.7px;color:#000;">search.php</div><div style="left:4.3px;top:133.39999999999995px;width:2.2px;height:2.7px;background:#fdfdfd;border:0.4px solid #aaa;"></div><div class="t" style="left:8px;top:137.69999999999993px;font-size:2.7px;color:#000;">sidebar.php</div><div style="left:4.3px;top:137.49999999999994px;width:2.2px;height:2.7px;background:#fdfdfd;border:0.4px solid #aaa;"></div><div class="t" style="left:8px;top:141.79999999999993px;font-size:2.7px;color:#000;">sidebar.tags.php</div><div style="left:4.3px;top:141.59999999999994px;width:2.2px;height:2.7px;background:#fdfdfd;border:0.4px solid #aaa;"></div><div class="t" style="left:8px;top:145.89999999999992px;font-size:2.7px;color:#000;">style.css</div><div style="left:4.3px;top:145.69999999999993px;width:2.2px;height:2.7px;background:#fdfdfd;border:0.4px solid #aaa;"></div><div class="t" style="left:8px;top:149.99999999999991px;font-size:2.7px;color:#000;">users.php</div><div style="left:4.3px;top:149.79999999999993px;width:2.2px;height:2.7px;background:#fdfdfd;border:0.4px solid #aaa;"></div><div style="left:2px;top:153.89999999999992px;width:3px;height:2.6px;background:#7fa6d8;border-radius:0.4px;"></div><div class="t" style="left:6px;top:154.0999999999999px;font-size:2.7px;color:#000;">css</div><div style="left:4.3px;top:157.99999999999991px;width:2.2px;height:2.7px;background:#fdfdfd;border:0.4px solid #aaa;"></div><div class="t" style="left:8px;top:158.1999999999999px;font-size:2.7px;color:#000;">style.main</div><div style="left:4.3px;top:162.0999999999999px;width:2.2px;height:2.7px;background:#fdfdfd;border:0.4px solid #aaa;"></div><div class="t" style="left:8px;top:162.2999999999999px;font-size:2.7px;color:#000;">style.ie</div><div style="left:2px;top:166.1999999999999px;width:3px;height:2.6px;background:#7fa6d8;border-radius:0.4px;"></div><div class="t" style="left:6px;top:166.3999999999999px;font-size:2.7px;color:#000;">js</div><div style="left:4.3px;top:170.2999999999999px;width:2.2px;height:2.7px;background:#fdfdfd;border:0.4px solid #aaa;"></div><div class="t" style="left:8px;top:170.4999999999999px;font-size:2.7px;color:#000;">jquery.min</div><div style="left:2px;top:174.3999999999999px;width:3px;height:2.6px;background:#7fa6d8;border-radius:0.4px;"></div><div class="t" style="left:6px;top:174.59999999999988px;font-size:2.7px;color:#000;">img</div><div style="left:2px;top:178.4999999999999px;width:3px;height:2.6px;background:#7fa6d8;border-radius:0.4px;"></div><div class="t" style="left:6px;top:178.69999999999987px;font-size:2.7px;color:#000;">lib</div><div style="left:2px;top:182.59999999999988px;width:3px;height:2.6px;background:#7fa6d8;border-radius:0.4px;"></div><div class="t" style="left:6px;top:182.79999999999987px;font-size:2.7px;color:#000;">tpl</div><div style="left:41.4px;top:20.2px;width:2.6px;height:169px;background:#f2f2f2;border-left:0.5px solid #ccc;"></div><div style="left:41.7px;top:30px;width:2px;height:68px;background:#b4b8bc;border-radius:1px;"></div><div style="left:44px;top:20.2px;width:216.7px;height:169px;background:#fff;"></div><div style="left:257.9px;top:20.2px;width:2.8px;height:169px;background:#f0f0f0;border-left:0.5px solid #ccc;"></div><svg style="left:44px;top:0px" width="213.7" height="189" viewBox="0 0 213.7 189" fill="none"><path d="M7.00 23.60H11.72" stroke="#888" stroke-width="1.2" stroke-opacity="0.85" stroke-dasharray="0.62 0.56"/><path d="M12.78 23.60H22.22" stroke="#888" stroke-width="1.2" stroke-opacity="0.85" stroke-dasharray="0.62 0.56"/><path d="M22.42 23.60H27.14" stroke="#888" stroke-width="1.2" stroke-opacity="0.85" stroke-dasharray="0.62 0.56"/><path d="M7.00 28.54H16.44" stroke="#1a1a1a" stroke-width="1.3" stroke-opacity="0.78" stroke-dasharray="0.62 0.56"/><path d="M17.54 28.54H22.26" stroke="#d88a20" stroke-width="1.2" stroke-opacity="0.85" stroke-dasharray="0.62 0.56"/><path d="M23.32 28.54H29.22" stroke="#d88a20" stroke-width="1.2" stroke-opacity="0.85" stroke-dasharray="0.62 0.56"/><path d="M29.42 28.54H31.78" stroke="#d88a20" stroke-width="1.2" stroke-opacity="0.85" stroke-dasharray="0.62 0.56"/><path d="M32.84 28.54H39.92" stroke="#d88a20" stroke-width="1.2" stroke-opacity="0.85" stroke-dasharray="0.62 0.56"/><path d="M41.89 28.54H47.79" stroke="#c8a800" stroke-width="1.2" stroke-opacity="0.85" stroke-dasharray="0.62 0.56"/><path d="M47.99 28.54H50.35" stroke="#c8a800" stroke-width="1.2" stroke-opacity="0.85" stroke-dasharray="0.62 0.56"/><path d="M51.41 28.54H60.85" stroke="#c8a800" stroke-width="1.2" stroke-opacity="0.85" stroke-dasharray="0.62 0.56"/><path d="M61.05 28.54H63.41" stroke="#c8a800" stroke-width="1.2" stroke-opacity="0.85" stroke-dasharray="0.62 0.56"/><path d="M63.61 28.54H71.87" stroke="#c8a800" stroke-width="1.2" stroke-opacity="0.85" stroke-dasharray="0.62 0.56"/><path d="M7.00 33.48H14.08" stroke="#1a1a1a" stroke-width="1.3" stroke-opacity="0.78" stroke-dasharray="0.62 0.56"/><path d="M3.00 35.95H4.18" stroke="#1a1a1a" stroke-width="1.3" stroke-opacity="0.78" stroke-dasharray="0.62 0.56"/><path d="M3.00 40.89H5.36" stroke="#3050b0" stroke-width="1.3" stroke-opacity="0.78" stroke-dasharray="0.62 0.56"/><path d="M6.42 40.89H11.14" stroke="#3050b0" stroke-width="1.3" stroke-opacity="0.78" stroke-dasharray="0.62 0.56"/><path d="M13.10 40.89H17.82" stroke="#1a1a1a" stroke-width="1.3" stroke-opacity="0.78" stroke-dasharray="0.62 0.56"/><path d="M18.89 40.89H21.25" stroke="#1a1a1a" stroke-width="1.3" stroke-opacity="0.78" stroke-dasharray="0.62 0.56"/><path d="M22.31 40.89H28.21" stroke="#1a1a1a" stroke-width="1.3" stroke-opacity="0.78" stroke-dasharray="0.62 0.56"/><path d="M29.27 40.89H35.17" stroke="#1a1a1a" stroke-width="1.3" stroke-opacity="0.78" stroke-dasharray="0.62 0.56"/><path d="M36.23 40.89H37.41" stroke="#1a1a1a" stroke-width="1.3" stroke-opacity="0.78" stroke-dasharray="0.62 0.56"/><path d="M39.37 40.89H49.99" stroke="#1a1a1a" stroke-width="1.3" stroke-opacity="0.78" stroke-dasharray="0.62 0.56"/><path d="M51.06 40.89H53.42" stroke="#1a1a1a" stroke-width="1.3" stroke-opacity="0.78" stroke-dasharray="0.62 0.56"/><path d="M7.00 45.83H11.72" stroke="#1a1a1a" stroke-width="1.3" stroke-opacity="0.78" stroke-dasharray="0.62 0.56"/><path d="M11.92 45.83H20.18" stroke="#1a1a1a" stroke-width="1.3" stroke-opacity="0.78" stroke-dasharray="0.62 0.56"/><path d="M22.14 45.83H31.58" stroke="#1a1a1a" stroke-width="1.3" stroke-opacity="0.78" stroke-dasharray="0.62 0.56"/><path d="M33.54 45.83H41.80" stroke="#d88a20" stroke-width="1.2" stroke-opacity="0.85" stroke-dasharray="0.62 0.56"/><path d="M42.00 45.83H51.44" stroke="#d88a20" stroke-width="1.2" stroke-opacity="0.85" stroke-dasharray="0.62 0.56"/><path d="M52.51 45.83H56.05" stroke="#d88a20" stroke-width="1.2" stroke-opacity="0.85" stroke-dasharray="0.62 0.56"/><path d="M57.11 45.83H67.73" stroke="#d88a20" stroke-width="1.2" stroke-opacity="0.85" stroke-dasharray="0.62 0.56"/><path d="M68.79 45.83H72.33" stroke="#d88a20" stroke-width="1.2" stroke-opacity="0.85" stroke-dasharray="0.62 0.56"/><path d="M73.39 45.83H79.29" stroke="#d88a20" stroke-width="1.2" stroke-opacity="0.85" stroke-dasharray="0.62 0.56"/><path d="M80.35 45.83H83.89" stroke="#d88a20" stroke-width="1.2" stroke-opacity="0.85" stroke-dasharray="0.62 0.56"/><path d="M85.86 45.83H89.40" stroke="#c8a800" stroke-width="1.2" stroke-opacity="0.85" stroke-dasharray="0.62 0.56"/><path d="M90.46 45.83H95.18" stroke="#c8a800" stroke-width="1.2" stroke-opacity="0.85" stroke-dasharray="0.62 0.56"/><path d="M95.38 45.83H103.64" stroke="#c8a800" stroke-width="1.2" stroke-opacity="0.85" stroke-dasharray="0.62 0.56"/><path d="M104.70 45.83H111.78" stroke="#c8a800" stroke-width="1.2" stroke-opacity="0.85" stroke-dasharray="0.62 0.56"/><path d="M112.84 45.83H117.56" stroke="#c8a800" stroke-width="1.2" stroke-opacity="0.85" stroke-dasharray="0.62 0.56"/><path d="M118.62 45.83H123.34" stroke="#c8a800" stroke-width="1.2" stroke-opacity="0.85" stroke-dasharray="0.62 0.56"/><path d="M123.54 45.83H128.26" stroke="#c8a800" stroke-width="1.2" stroke-opacity="0.85" stroke-dasharray="0.62 0.56"/><path d="M130.23 45.83H132.59" stroke="#d88a20" stroke-width="1.2" stroke-opacity="0.85" stroke-dasharray="0.62 0.56"/><path d="M132.79 45.83H138.69" stroke="#d88a20" stroke-width="1.2" stroke-opacity="0.85" stroke-dasharray="0.62 0.56"/><path d="M139.75 45.83H144.47" stroke="#d88a20" stroke-width="1.2" stroke-opacity="0.85" stroke-dasharray="0.62 0.56"/><path d="M144.67 45.83H147.03" stroke="#d88a20" stroke-width="1.2" stroke-opacity="0.85" stroke-dasharray="0.62 0.56"/><path d="M147.23 45.83H157.85" stroke="#d88a20" stroke-width="1.2" stroke-opacity="0.85" stroke-dasharray="0.62 0.56"/><path d="M158.91 45.83H161.27" stroke="#d88a20" stroke-width="1.2" stroke-opacity="0.85" stroke-dasharray="0.62 0.56"/><path d="M162.37 45.83H168.27" stroke="#1a1a1a" stroke-width="1.3" stroke-opacity="0.78" stroke-dasharray="0.62 0.56"/><path d="M169.33 45.83H172.87" stroke="#1a1a1a" stroke-width="1.3" stroke-opacity="0.78" stroke-dasharray="0.62 0.56"/><path d="M7.00 48.30H16.44" stroke="#1a1a1a" stroke-width="1.3" stroke-opacity="0.78" stroke-dasharray="0.62 0.56"/><path d="M16.64 48.30H17.82" stroke="#1a1a1a" stroke-width="1.3" stroke-opacity="0.78" stroke-dasharray="0.62 0.56"/><path d="M19.78 48.30H26.86" stroke="#1a1a1a" stroke-width="1.3" stroke-opacity="0.78" stroke-dasharray="0.62 0.56"/><path d="M27.92 48.30H33.82" stroke="#1a1a1a" stroke-width="1.3" stroke-opacity="0.78" stroke-dasharray="0.62 0.56"/><path d="M7.00 50.77H9.36" stroke="#1a1a1a" stroke-width="1.3" stroke-opacity="0.78" stroke-dasharray="0.62 0.56"/><path d="M10.42 50.77H12.78" stroke="#1a1a1a" stroke-width="1.3" stroke-opacity="0.78" stroke-dasharray="0.62 0.56"/><path d="M14.74 50.77H23.00" stroke="#1a1a1a" stroke-width="1.3" stroke-opacity="0.78" stroke-dasharray="0.62 0.56"/><path d="M23.20 50.77H25.56" stroke="#1a1a1a" stroke-width="1.3" stroke-opacity="0.78" stroke-dasharray="0.62 0.56"/><path d="M7.00 53.24H14.08" stroke="#1a1a1a" stroke-width="1.3" stroke-opacity="0.78" stroke-dasharray="0.62 0.56"/><path d="M7.00 58.18H11.72" stroke="#1a1a1a" stroke-width="1.3" stroke-opacity="0.78" stroke-dasharray="0.62 0.56"/><path d="M11.92 58.18H16.64" stroke="#1a1a1a" stroke-width="1.3" stroke-opacity="0.78" stroke-dasharray="0.62 0.56"/><path d="M18.60 58.18H24.50" stroke="#d88a20" stroke-width="1.2" stroke-opacity="0.85" stroke-dasharray="0.62 0.56"/><path d="M24.70 58.18H31.78" stroke="#d88a20" stroke-width="1.2" stroke-opacity="0.85" stroke-dasharray="0.62 0.56"/><path d="M32.88 58.18H41.14" stroke="#c8a800" stroke-width="1.2" stroke-opacity="0.85" stroke-dasharray="0.62 0.56"/><path d="M41.34 58.18H43.70" stroke="#c8a800" stroke-width="1.2" stroke-opacity="0.85" stroke-dasharray="0.62 0.56"/><path d="M45.66 58.18H56.28" stroke="#1a1a1a" stroke-width="1.3" stroke-opacity="0.78" stroke-dasharray="0.62 0.56"/><path d="M58.25 58.18H65.33" stroke="#1a1a1a" stroke-width="1.3" stroke-opacity="0.78" stroke-dasharray="0.62 0.56"/><path d="M66.39 58.18H68.75" stroke="#1a1a1a" stroke-width="1.3" stroke-opacity="0.78" stroke-dasharray="0.62 0.56"/><path d="M7.00 60.65H11.72" stroke="#1a1a1a" stroke-width="1.3" stroke-opacity="0.78" stroke-dasharray="0.62 0.56"/><path d="M11.92 60.65H14.28" stroke="#1a1a1a" stroke-width="1.3" stroke-opacity="0.78" stroke-dasharray="0.62 0.56"/><path d="M16.24 60.65H20.96" stroke="#1a1a1a" stroke-width="1.3" stroke-opacity="0.78" stroke-dasharray="0.62 0.56"/><path d="M13.00 65.59H21.26" stroke="#1a1a1a" stroke-width="1.3" stroke-opacity="0.78" stroke-dasharray="0.62 0.56"/><path d="M23.22 65.59H30.30" stroke="#c8a800" stroke-width="1.2" stroke-opacity="0.85" stroke-dasharray="0.62 0.56"/><path d="M13.00 68.06H17.72" stroke="#1a1a1a" stroke-width="1.3" stroke-opacity="0.78" stroke-dasharray="0.62 0.56"/><path d="M18.78 68.06H22.32" stroke="#1a1a1a" stroke-width="1.3" stroke-opacity="0.78" stroke-dasharray="0.62 0.56"/><path d="M24.28 68.06H29.00" stroke="#c8a800" stroke-width="1.2" stroke-opacity="0.85" stroke-dasharray="0.62 0.56"/><path d="M30.97 68.06H41.59" stroke="#1a1a1a" stroke-width="1.3" stroke-opacity="0.78" stroke-dasharray="0.62 0.56"/><path d="M13.00 70.53H16.54" stroke="#1a1a1a" stroke-width="1.3" stroke-opacity="0.78" stroke-dasharray="0.62 0.56"/><path d="M16.74 70.53H21.46" stroke="#1a1a1a" stroke-width="1.3" stroke-opacity="0.78" stroke-dasharray="0.62 0.56"/><path d="M23.42 70.53H30.50" stroke="#c8a800" stroke-width="1.2" stroke-opacity="0.85" stroke-dasharray="0.62 0.56"/><path d="M32.46 70.53H38.36" stroke="#1a1a1a" stroke-width="1.3" stroke-opacity="0.78" stroke-dasharray="0.62 0.56"/><path d="M38.56 70.53H42.10" stroke="#1a1a1a" stroke-width="1.3" stroke-opacity="0.78" stroke-dasharray="0.62 0.56"/><path d="M44.07 70.53H53.51" stroke="#1a1a1a" stroke-width="1.3" stroke-opacity="0.78" stroke-dasharray="0.62 0.56"/><path d="M54.57 70.53H55.75" stroke="#1a1a1a" stroke-width="1.3" stroke-opacity="0.78" stroke-dasharray="0.62 0.56"/><path d="M13.00 73.00H15.36" stroke="#1a1a1a" stroke-width="1.3" stroke-opacity="0.78" stroke-dasharray="0.62 0.56"/><path d="M15.56 73.00H17.92" stroke="#1a1a1a" stroke-width="1.3" stroke-opacity="0.78" stroke-dasharray="0.62 0.56"/><path d="M18.98 73.00H22.52" stroke="#1a1a1a" stroke-width="1.3" stroke-opacity="0.78" stroke-dasharray="0.62 0.56"/><path d="M24.48 73.00H29.20" stroke="#c8a800" stroke-width="1.2" stroke-opacity="0.85" stroke-dasharray="0.62 0.56"/><path d="M30.30 73.00H36.20" stroke="#1a1a1a" stroke-width="1.3" stroke-opacity="0.78" stroke-dasharray="0.62 0.56"/><path d="M37.27 73.00H38.45" stroke="#1a1a1a" stroke-width="1.3" stroke-opacity="0.78" stroke-dasharray="0.62 0.56"/><path d="M39.55 73.00H45.45" stroke="#1a1a1a" stroke-width="1.3" stroke-opacity="0.78" stroke-dasharray="0.62 0.56"/><path d="M46.51 73.00H53.59" stroke="#1a1a1a" stroke-width="1.3" stroke-opacity="0.78" stroke-dasharray="0.62 0.56"/><path d="M54.69 73.00H61.77" stroke="#1a1a1a" stroke-width="1.3" stroke-opacity="0.78" stroke-dasharray="0.62 0.56"/><path d="M61.97 73.00H64.33" stroke="#1a1a1a" stroke-width="1.3" stroke-opacity="0.78" stroke-dasharray="0.62 0.56"/><path d="M7.00 77.94H10.54" stroke="#c8a800" stroke-width="1.2" stroke-opacity="0.85" stroke-dasharray="0.62 0.56"/><path d="M11.60 77.94H13.96" stroke="#c8a800" stroke-width="1.2" stroke-opacity="0.85" stroke-dasharray="0.62 0.56"/><path d="M15.02 77.94H22.10" stroke="#c8a800" stroke-width="1.2" stroke-opacity="0.85" stroke-dasharray="0.62 0.56"/><path d="M23.20 77.94H30.28" stroke="#1a1a1a" stroke-width="1.3" stroke-opacity="0.78" stroke-dasharray="0.62 0.56"/><path d="M32.25 77.94H38.15" stroke="#d88a20" stroke-width="1.2" stroke-opacity="0.85" stroke-dasharray="0.62 0.56"/><path d="M39.21 77.94H42.75" stroke="#d88a20" stroke-width="1.2" stroke-opacity="0.85" stroke-dasharray="0.62 0.56"/><path d="M7.00 82.88H15.26" stroke="#1a1a1a" stroke-width="1.3" stroke-opacity="0.78" stroke-dasharray="0.62 0.56"/><path d="M16.32 82.88H21.04" stroke="#1a1a1a" stroke-width="1.3" stroke-opacity="0.78" stroke-dasharray="0.62 0.56"/><path d="M23.00 82.88H26.54" stroke="#1a1a1a" stroke-width="1.3" stroke-opacity="0.78" stroke-dasharray="0.62 0.56"/><path d="M26.74 82.88H32.64" stroke="#1a1a1a" stroke-width="1.3" stroke-opacity="0.78" stroke-dasharray="0.62 0.56"/><path d="M34.61 82.88H36.97" stroke="#d88a20" stroke-width="1.2" stroke-opacity="0.85" stroke-dasharray="0.62 0.56"/><path d="M37.17 82.88H47.79" stroke="#d88a20" stroke-width="1.2" stroke-opacity="0.85" stroke-dasharray="0.62 0.56"/><path d="M48.85 82.88H58.29" stroke="#d88a20" stroke-width="1.2" stroke-opacity="0.85" stroke-dasharray="0.62 0.56"/><path d="M58.49 82.88H62.03" stroke="#d88a20" stroke-width="1.2" stroke-opacity="0.85" stroke-dasharray="0.62 0.56"/><path d="M63.09 82.88H65.45" stroke="#d88a20" stroke-width="1.2" stroke-opacity="0.85" stroke-dasharray="0.62 0.56"/><path d="M66.55 82.88H68.91" stroke="#c8a800" stroke-width="1.2" stroke-opacity="0.85" stroke-dasharray="0.62 0.56"/><path d="M69.97 82.88H79.41" stroke="#c8a800" stroke-width="1.2" stroke-opacity="0.85" stroke-dasharray="0.62 0.56"/><path d="M79.61 82.88H90.23" stroke="#c8a800" stroke-width="1.2" stroke-opacity="0.85" stroke-dasharray="0.62 0.56"/><path d="M90.43 82.88H99.87" stroke="#c8a800" stroke-width="1.2" stroke-opacity="0.85" stroke-dasharray="0.62 0.56"/><path d="M100.93 82.88H106.83" stroke="#c8a800" stroke-width="1.2" stroke-opacity="0.85" stroke-dasharray="0.62 0.56"/><path d="M108.80 82.88H112.34" stroke="#d88a20" stroke-width="1.2" stroke-opacity="0.85" stroke-dasharray="0.62 0.56"/><path d="M113.40 82.88H118.12" stroke="#d88a20" stroke-width="1.2" stroke-opacity="0.85" stroke-dasharray="0.62 0.56"/><path d="M119.18 82.88H125.08" stroke="#d88a20" stroke-width="1.2" stroke-opacity="0.85" stroke-dasharray="0.62 0.56"/><path d="M125.28 82.88H132.36" stroke="#d88a20" stroke-width="1.2" stroke-opacity="0.85" stroke-dasharray="0.62 0.56"/><path d="M133.42 82.88H138.14" stroke="#d88a20" stroke-width="1.2" stroke-opacity="0.85" stroke-dasharray="0.62 0.56"/><path d="M7.00 85.35H16.44" stroke="#1a1a1a" stroke-width="1.3" stroke-opacity="0.78" stroke-dasharray="0.62 0.56"/><path d="M16.64 85.35H17.82" stroke="#1a1a1a" stroke-width="1.3" stroke-opacity="0.78" stroke-dasharray="0.62 0.56"/><path d="M19.78 85.35H25.68" stroke="#1a1a1a" stroke-width="1.3" stroke-opacity="0.78" stroke-dasharray="0.62 0.56"/><path d="M26.74 85.35H33.82" stroke="#1a1a1a" stroke-width="1.3" stroke-opacity="0.78" stroke-dasharray="0.62 0.56"/><path d="M34.92 85.35H38.46" stroke="#1a1a1a" stroke-width="1.3" stroke-opacity="0.78" stroke-dasharray="0.62 0.56"/><path d="M7.00 87.82H10.54" stroke="#1a1a1a" stroke-width="1.3" stroke-opacity="0.78" stroke-dasharray="0.62 0.56"/><path d="M11.60 87.82H17.50" stroke="#1a1a1a" stroke-width="1.3" stroke-opacity="0.78" stroke-dasharray="0.62 0.56"/><path d="M18.60 87.82H28.04" stroke="#1a1a1a" stroke-width="1.3" stroke-opacity="0.78" stroke-dasharray="0.62 0.56"/><path d="M29.14 87.82H33.86" stroke="#1a1a1a" stroke-width="1.3" stroke-opacity="0.78" stroke-dasharray="0.62 0.56"/><path d="M34.06 87.82H39.96" stroke="#1a1a1a" stroke-width="1.3" stroke-opacity="0.78" stroke-dasharray="0.62 0.56"/><path d="M41.06 87.82H49.32" stroke="#1a1a1a" stroke-width="1.3" stroke-opacity="0.78" stroke-dasharray="0.62 0.56"/><path d="M49.52 87.82H51.88" stroke="#1a1a1a" stroke-width="1.3" stroke-opacity="0.78" stroke-dasharray="0.62 0.56"/><path d="M7.00 90.29H9.36" stroke="#1a1a1a" stroke-width="1.3" stroke-opacity="0.78" stroke-dasharray="0.62 0.56"/><path d="M10.42 90.29H15.14" stroke="#1a1a1a" stroke-width="1.3" stroke-opacity="0.78" stroke-dasharray="0.62 0.56"/><path d="M16.24 90.29H20.96" stroke="#1a1a1a" stroke-width="1.3" stroke-opacity="0.78" stroke-dasharray="0.62 0.56"/><path d="M21.16 90.29H27.06" stroke="#1a1a1a" stroke-width="1.3" stroke-opacity="0.78" stroke-dasharray="0.62 0.56"/><path d="M7.00 95.23H14.08" stroke="#1a1a1a" stroke-width="1.3" stroke-opacity="0.78" stroke-dasharray="0.62 0.56"/><path d="M14.28 95.23H16.64" stroke="#1a1a1a" stroke-width="1.3" stroke-opacity="0.78" stroke-dasharray="0.62 0.56"/><path d="M17.74 95.23H28.36" stroke="#d88a20" stroke-width="1.2" stroke-opacity="0.85" stroke-dasharray="0.62 0.56"/><path d="M29.42 95.23H31.78" stroke="#d88a20" stroke-width="1.2" stroke-opacity="0.85" stroke-dasharray="0.62 0.56"/><path d="M32.88 95.23H39.96" stroke="#c8a800" stroke-width="1.2" stroke-opacity="0.85" stroke-dasharray="0.62 0.56"/><path d="M40.16 95.23H43.70" stroke="#c8a800" stroke-width="1.2" stroke-opacity="0.85" stroke-dasharray="0.62 0.56"/><path d="M44.80 95.23H48.34" stroke="#1a1a1a" stroke-width="1.3" stroke-opacity="0.78" stroke-dasharray="0.62 0.56"/><path d="M49.40 95.23H55.30" stroke="#1a1a1a" stroke-width="1.3" stroke-opacity="0.78" stroke-dasharray="0.62 0.56"/><path d="M56.37 95.23H57.55" stroke="#1a1a1a" stroke-width="1.3" stroke-opacity="0.78" stroke-dasharray="0.62 0.56"/><path d="M59.51 95.23H61.87" stroke="#1a1a1a" stroke-width="1.3" stroke-opacity="0.78" stroke-dasharray="0.62 0.56"/><path d="M62.93 95.23H67.65" stroke="#1a1a1a" stroke-width="1.3" stroke-opacity="0.78" stroke-dasharray="0.62 0.56"/><path d="M7.00 97.70H12.90" stroke="#1a1a1a" stroke-width="1.3" stroke-opacity="0.78" stroke-dasharray="0.62 0.56"/><path d="M13.10 97.70H14.28" stroke="#1a1a1a" stroke-width="1.3" stroke-opacity="0.78" stroke-dasharray="0.62 0.56"/><path d="M16.24 97.70H20.96" stroke="#1a1a1a" stroke-width="1.3" stroke-opacity="0.78" stroke-dasharray="0.62 0.56"/><path d="M7.00 102.64H14.08" stroke="#1a1a1a" stroke-width="1.3" stroke-opacity="0.78" stroke-dasharray="0.62 0.56"/><path d="M15.18 102.64H23.44" stroke="#c8a800" stroke-width="1.2" stroke-opacity="0.85" stroke-dasharray="0.62 0.56"/><path d="M24.50 102.64H25.68" stroke="#c8a800" stroke-width="1.2" stroke-opacity="0.85" stroke-dasharray="0.62 0.56"/><path d="M27.64 102.64H30.00" stroke="#d88a20" stroke-width="1.2" stroke-opacity="0.85" stroke-dasharray="0.62 0.56"/><path d="M31.07 102.64H40.51" stroke="#d88a20" stroke-width="1.2" stroke-opacity="0.85" stroke-dasharray="0.62 0.56"/><path d="M41.57 102.64H47.47" stroke="#d88a20" stroke-width="1.2" stroke-opacity="0.85" stroke-dasharray="0.62 0.56"/><path d="M48.53 102.64H59.15" stroke="#d88a20" stroke-width="1.2" stroke-opacity="0.85" stroke-dasharray="0.62 0.56"/><path d="M59.35 102.64H61.71" stroke="#d88a20" stroke-width="1.2" stroke-opacity="0.85" stroke-dasharray="0.62 0.56"/><path d="M61.91 102.64H65.45" stroke="#d88a20" stroke-width="1.2" stroke-opacity="0.85" stroke-dasharray="0.62 0.56"/><path d="M66.51 102.64H70.05" stroke="#d88a20" stroke-width="1.2" stroke-opacity="0.85" stroke-dasharray="0.62 0.56"/><path d="M72.01 102.64H82.63" stroke="#c8a800" stroke-width="1.2" stroke-opacity="0.85" stroke-dasharray="0.62 0.56"/><path d="M82.83 102.64H93.45" stroke="#c8a800" stroke-width="1.2" stroke-opacity="0.85" stroke-dasharray="0.62 0.56"/><path d="M94.52 102.64H99.24" stroke="#c8a800" stroke-width="1.2" stroke-opacity="0.85" stroke-dasharray="0.62 0.56"/><path d="M101.20 102.64H105.92" stroke="#1a1a1a" stroke-width="1.3" stroke-opacity="0.78" stroke-dasharray="0.62 0.56"/><path d="M106.98 102.64H114.06" stroke="#1a1a1a" stroke-width="1.3" stroke-opacity="0.78" stroke-dasharray="0.62 0.56"/><path d="M114.26 102.64H116.62" stroke="#1a1a1a" stroke-width="1.3" stroke-opacity="0.78" stroke-dasharray="0.62 0.56"/><path d="M116.82 102.64H120.36" stroke="#1a1a1a" stroke-width="1.3" stroke-opacity="0.78" stroke-dasharray="0.62 0.56"/><path d="M120.56 102.64H125.28" stroke="#1a1a1a" stroke-width="1.3" stroke-opacity="0.78" stroke-dasharray="0.62 0.56"/><path d="M126.34 102.64H132.24" stroke="#1a1a1a" stroke-width="1.3" stroke-opacity="0.78" stroke-dasharray="0.62 0.56"/><path d="M134.20 102.64H142.46" stroke="#c8a800" stroke-width="1.2" stroke-opacity="0.85" stroke-dasharray="0.62 0.56"/><path d="M143.53 102.64H145.89" stroke="#c8a800" stroke-width="1.2" stroke-opacity="0.85" stroke-dasharray="0.62 0.56"/><path d="M146.95 102.64H154.03" stroke="#c8a800" stroke-width="1.2" stroke-opacity="0.85" stroke-dasharray="0.62 0.56"/><path d="M154.23 102.64H155.41" stroke="#c8a800" stroke-width="1.2" stroke-opacity="0.85" stroke-dasharray="0.62 0.56"/><path d="M157.37 102.64H160.91" stroke="#1a1a1a" stroke-width="1.3" stroke-opacity="0.78" stroke-dasharray="0.62 0.56"/><path d="M161.97 102.64H169.05" stroke="#1a1a1a" stroke-width="1.3" stroke-opacity="0.78" stroke-dasharray="0.62 0.56"/><path d="M7.00 105.11H16.44" stroke="#1a1a1a" stroke-width="1.3" stroke-opacity="0.78" stroke-dasharray="0.62 0.56"/><path d="M18.40 105.11H24.30" stroke="#1a1a1a" stroke-width="1.3" stroke-opacity="0.78" stroke-dasharray="0.62 0.56"/><path d="M24.50 105.11H25.68" stroke="#1a1a1a" stroke-width="1.3" stroke-opacity="0.78" stroke-dasharray="0.62 0.56"/><path d="M7.00 110.05H12.90" stroke="#d88a20" stroke-width="1.2" stroke-opacity="0.85" stroke-dasharray="0.62 0.56"/><path d="M13.96 110.05H15.14" stroke="#d88a20" stroke-width="1.2" stroke-opacity="0.85" stroke-dasharray="0.62 0.56"/><path d="M16.24 110.05H20.96" stroke="#c8a800" stroke-width="1.2" stroke-opacity="0.85" stroke-dasharray="0.62 0.56"/><path d="M22.02 110.05H30.28" stroke="#c8a800" stroke-width="1.2" stroke-opacity="0.85" stroke-dasharray="0.62 0.56"/><path d="M32.25 110.05H36.97" stroke="#1a1a1a" stroke-width="1.3" stroke-opacity="0.78" stroke-dasharray="0.62 0.56"/><path d="M37.17 110.05H47.79" stroke="#1a1a1a" stroke-width="1.3" stroke-opacity="0.78" stroke-dasharray="0.62 0.56"/><path d="M47.99 110.05H51.53" stroke="#1a1a1a" stroke-width="1.3" stroke-opacity="0.78" stroke-dasharray="0.62 0.56"/><path d="M52.63 110.05H58.53" stroke="#c8a800" stroke-width="1.2" stroke-opacity="0.85" stroke-dasharray="0.62 0.56"/><path d="M58.73 110.05H62.27" stroke="#c8a800" stroke-width="1.2" stroke-opacity="0.85" stroke-dasharray="0.62 0.56"/><path d="M62.47 110.05H71.91" stroke="#c8a800" stroke-width="1.2" stroke-opacity="0.85" stroke-dasharray="0.62 0.56"/><path d="M72.97 110.05H74.15" stroke="#c8a800" stroke-width="1.2" stroke-opacity="0.85" stroke-dasharray="0.62 0.56"/><path d="M75.25 110.05H83.51" stroke="#d88a20" stroke-width="1.2" stroke-opacity="0.85" stroke-dasharray="0.62 0.56"/><path d="M84.57 110.05H92.83" stroke="#d88a20" stroke-width="1.2" stroke-opacity="0.85" stroke-dasharray="0.62 0.56"/><path d="M93.89 110.05H99.79" stroke="#d88a20" stroke-width="1.2" stroke-opacity="0.85" stroke-dasharray="0.62 0.56"/><path d="M100.89 110.05H110.33" stroke="#1a1a1a" stroke-width="1.3" stroke-opacity="0.78" stroke-dasharray="0.62 0.56"/><path d="M7.00 114.99H11.72" stroke="#1a1a1a" stroke-width="1.3" stroke-opacity="0.78" stroke-dasharray="0.62 0.56"/><path d="M12.78 114.99H15.14" stroke="#1a1a1a" stroke-width="1.3" stroke-opacity="0.78" stroke-dasharray="0.62 0.56"/><path d="M17.10 114.99H24.18" stroke="#1a1a1a" stroke-width="1.3" stroke-opacity="0.78" stroke-dasharray="0.62 0.56"/><path d="M24.38 114.99H27.92" stroke="#1a1a1a" stroke-width="1.3" stroke-opacity="0.78" stroke-dasharray="0.62 0.56"/><path d="M29.02 114.99H34.92" stroke="#1a1a1a" stroke-width="1.3" stroke-opacity="0.78" stroke-dasharray="0.62 0.56"/><path d="M35.99 114.99H39.53" stroke="#1a1a1a" stroke-width="1.3" stroke-opacity="0.78" stroke-dasharray="0.62 0.56"/><path d="M7.00 119.93H14.08" stroke="#1a1a1a" stroke-width="1.3" stroke-opacity="0.78" stroke-dasharray="0.62 0.56"/><path d="M16.04 119.93H18.40" stroke="#c8a800" stroke-width="1.2" stroke-opacity="0.85" stroke-dasharray="0.62 0.56"/><path d="M18.60 119.93H20.96" stroke="#c8a800" stroke-width="1.2" stroke-opacity="0.85" stroke-dasharray="0.62 0.56"/><path d="M21.16 119.93H25.88" stroke="#c8a800" stroke-width="1.2" stroke-opacity="0.85" stroke-dasharray="0.62 0.56"/><path d="M26.98 119.93H32.88" stroke="#d88a20" stroke-width="1.2" stroke-opacity="0.85" stroke-dasharray="0.62 0.56"/><path d="M33.08 119.93H41.34" stroke="#d88a20" stroke-width="1.2" stroke-opacity="0.85" stroke-dasharray="0.62 0.56"/><path d="M41.54 119.93H48.62" stroke="#d88a20" stroke-width="1.2" stroke-opacity="0.85" stroke-dasharray="0.62 0.56"/><path d="M49.68 119.93H55.58" stroke="#d88a20" stroke-width="1.2" stroke-opacity="0.85" stroke-dasharray="0.62 0.56"/><path d="M55.78 119.93H66.40" stroke="#d88a20" stroke-width="1.2" stroke-opacity="0.85" stroke-dasharray="0.62 0.56"/><path d="M67.50 119.93H73.40" stroke="#c8a800" stroke-width="1.2" stroke-opacity="0.85" stroke-dasharray="0.62 0.56"/><path d="M73.60 119.93H80.68" stroke="#c8a800" stroke-width="1.2" stroke-opacity="0.85" stroke-dasharray="0.62 0.56"/><path d="M81.75 119.93H91.19" stroke="#c8a800" stroke-width="1.2" stroke-opacity="0.85" stroke-dasharray="0.62 0.56"/><path d="M92.25 119.93H95.79" stroke="#c8a800" stroke-width="1.2" stroke-opacity="0.85" stroke-dasharray="0.62 0.56"/><path d="M97.75 119.93H108.37" stroke="#1a1a1a" stroke-width="1.3" stroke-opacity="0.78" stroke-dasharray="0.62 0.56"/><path d="M109.43 119.93H117.69" stroke="#1a1a1a" stroke-width="1.3" stroke-opacity="0.78" stroke-dasharray="0.62 0.56"/><path d="M118.75 119.93H125.83" stroke="#1a1a1a" stroke-width="1.3" stroke-opacity="0.78" stroke-dasharray="0.62 0.56"/><path d="M126.03 119.93H128.39" stroke="#1a1a1a" stroke-width="1.3" stroke-opacity="0.78" stroke-dasharray="0.62 0.56"/><path d="M129.49 119.93H138.93" stroke="#c8a800" stroke-width="1.2" stroke-opacity="0.85" stroke-dasharray="0.62 0.56"/><path d="M140.00 119.93H142.36" stroke="#c8a800" stroke-width="1.2" stroke-opacity="0.85" stroke-dasharray="0.62 0.56"/><path d="M143.42 119.93H150.50" stroke="#c8a800" stroke-width="1.2" stroke-opacity="0.85" stroke-dasharray="0.62 0.56"/><path d="M7.00 122.40H16.44" stroke="#1a1a1a" stroke-width="1.3" stroke-opacity="0.78" stroke-dasharray="0.62 0.56"/><path d="M18.40 122.40H24.30" stroke="#1a1a1a" stroke-width="1.3" stroke-opacity="0.78" stroke-dasharray="0.62 0.56"/><path d="M24.50 122.40H25.68" stroke="#1a1a1a" stroke-width="1.3" stroke-opacity="0.78" stroke-dasharray="0.62 0.56"/><path d="M7.00 127.34H9.36" stroke="#d88a20" stroke-width="1.2" stroke-opacity="0.85" stroke-dasharray="0.62 0.56"/><path d="M10.42 127.34H15.14" stroke="#d88a20" stroke-width="1.2" stroke-opacity="0.85" stroke-dasharray="0.62 0.56"/><path d="M17.10 127.34H27.72" stroke="#c8a800" stroke-width="1.2" stroke-opacity="0.85" stroke-dasharray="0.62 0.56"/><path d="M28.79 127.34H31.15" stroke="#c8a800" stroke-width="1.2" stroke-opacity="0.85" stroke-dasharray="0.62 0.56"/><path d="M33.11 127.34H36.65" stroke="#1a1a1a" stroke-width="1.3" stroke-opacity="0.78" stroke-dasharray="0.62 0.56"/><path d="M36.85 127.34H40.39" stroke="#1a1a1a" stroke-width="1.3" stroke-opacity="0.78" stroke-dasharray="0.62 0.56"/><path d="M41.45 127.34H48.53" stroke="#1a1a1a" stroke-width="1.3" stroke-opacity="0.78" stroke-dasharray="0.62 0.56"/><path d="M48.73 127.34H53.45" stroke="#1a1a1a" stroke-width="1.3" stroke-opacity="0.78" stroke-dasharray="0.62 0.56"/><path d="M54.55 127.34H60.45" stroke="#c8a800" stroke-width="1.2" stroke-opacity="0.85" stroke-dasharray="0.62 0.56"/><path d="M61.51 127.34H69.77" stroke="#c8a800" stroke-width="1.2" stroke-opacity="0.85" stroke-dasharray="0.62 0.56"/><path d="M69.97 127.34H73.51" stroke="#c8a800" stroke-width="1.2" stroke-opacity="0.85" stroke-dasharray="0.62 0.56"/><path d="M73.71 127.34H76.07" stroke="#c8a800" stroke-width="1.2" stroke-opacity="0.85" stroke-dasharray="0.62 0.56"/><path d="M77.17 127.34H81.89" stroke="#d88a20" stroke-width="1.2" stroke-opacity="0.85" stroke-dasharray="0.62 0.56"/><path d="M82.09 127.34H89.17" stroke="#d88a20" stroke-width="1.2" stroke-opacity="0.85" stroke-dasharray="0.62 0.56"/><path d="M90.23 127.34H97.31" stroke="#d88a20" stroke-width="1.2" stroke-opacity="0.85" stroke-dasharray="0.62 0.56"/><path d="M97.51 127.34H101.05" stroke="#d88a20" stroke-width="1.2" stroke-opacity="0.85" stroke-dasharray="0.62 0.56"/><path d="M103.02 127.34H112.46" stroke="#1a1a1a" stroke-width="1.3" stroke-opacity="0.78" stroke-dasharray="0.62 0.56"/><path d="M7.00 132.28H14.08" stroke="#1a1a1a" stroke-width="1.3" stroke-opacity="0.78" stroke-dasharray="0.62 0.56"/><path d="M3.00 134.75H4.18" stroke="#1a1a1a" stroke-width="1.3" stroke-opacity="0.78" stroke-dasharray="0.62 0.56"/><path d="M3.00 139.69H7.72" stroke="#3050b0" stroke-width="1.3" stroke-opacity="0.78" stroke-dasharray="0.62 0.56"/><path d="M8.78 139.69H11.14" stroke="#3050b0" stroke-width="1.3" stroke-opacity="0.78" stroke-dasharray="0.62 0.56"/><path d="M12.24 139.69H21.68" stroke="#1a1a1a" stroke-width="1.3" stroke-opacity="0.78" stroke-dasharray="0.62 0.56"/><path d="M22.74 139.69H25.10" stroke="#1a1a1a" stroke-width="1.3" stroke-opacity="0.78" stroke-dasharray="0.62 0.56"/><path d="M25.30 139.69H31.20" stroke="#1a1a1a" stroke-width="1.3" stroke-opacity="0.78" stroke-dasharray="0.62 0.56"/><path d="M32.27 139.69H34.63" stroke="#1a1a1a" stroke-width="1.3" stroke-opacity="0.78" stroke-dasharray="0.62 0.56"/><path d="M36.59 139.69H44.85" stroke="#1a1a1a" stroke-width="1.3" stroke-opacity="0.78" stroke-dasharray="0.62 0.56"/><path d="M45.91 139.69H48.27" stroke="#1a1a1a" stroke-width="1.3" stroke-opacity="0.78" stroke-dasharray="0.62 0.56"/><path d="M48.47 139.69H50.83" stroke="#1a1a1a" stroke-width="1.3" stroke-opacity="0.78" stroke-dasharray="0.62 0.56"/><path d="M52.79 139.69H53.97" stroke="#1a1a1a" stroke-width="1.3" stroke-opacity="0.78" stroke-dasharray="0.62 0.56"/><path d="M7.00 142.16H11.72" stroke="#1a1a1a" stroke-width="1.3" stroke-opacity="0.78" stroke-dasharray="0.62 0.56"/><path d="M12.82 142.16H18.72" stroke="#1a1a1a" stroke-width="1.3" stroke-opacity="0.78" stroke-dasharray="0.62 0.56"/><path d="M19.78 142.16H23.32" stroke="#1a1a1a" stroke-width="1.3" stroke-opacity="0.78" stroke-dasharray="0.62 0.56"/><path d="M25.28 142.16H30.00" stroke="#1a1a1a" stroke-width="1.3" stroke-opacity="0.78" stroke-dasharray="0.62 0.56"/><path d="M7.00 144.63H10.54" stroke="#1a1a1a" stroke-width="1.3" stroke-opacity="0.78" stroke-dasharray="0.62 0.56"/><path d="M11.60 144.63H15.14" stroke="#1a1a1a" stroke-width="1.3" stroke-opacity="0.78" stroke-dasharray="0.62 0.56"/><path d="M17.10 144.63H24.18" stroke="#c8a800" stroke-width="1.2" stroke-opacity="0.85" stroke-dasharray="0.62 0.56"/><path d="M25.25 144.63H27.61" stroke="#c8a800" stroke-width="1.2" stroke-opacity="0.85" stroke-dasharray="0.62 0.56"/><path d="M29.57 144.63H31.93" stroke="#d88a20" stroke-width="1.2" stroke-opacity="0.85" stroke-dasharray="0.62 0.56"/><path d="M32.99 144.63H38.89" stroke="#d88a20" stroke-width="1.2" stroke-opacity="0.85" stroke-dasharray="0.62 0.56"/><path d="M39.95 144.63H44.67" stroke="#d88a20" stroke-width="1.2" stroke-opacity="0.85" stroke-dasharray="0.62 0.56"/><path d="M44.87 144.63H50.77" stroke="#d88a20" stroke-width="1.2" stroke-opacity="0.85" stroke-dasharray="0.62 0.56"/><path d="M51.83 144.63H56.55" stroke="#d88a20" stroke-width="1.2" stroke-opacity="0.85" stroke-dasharray="0.62 0.56"/><path d="M57.62 144.63H61.16" stroke="#d88a20" stroke-width="1.2" stroke-opacity="0.85" stroke-dasharray="0.62 0.56"/><path d="M61.36 144.63H62.54" stroke="#d88a20" stroke-width="1.2" stroke-opacity="0.85" stroke-dasharray="0.62 0.56"/><path d="M63.64 144.63H69.54" stroke="#1a1a1a" stroke-width="1.3" stroke-opacity="0.78" stroke-dasharray="0.62 0.56"/><path d="M69.74 144.63H75.64" stroke="#1a1a1a" stroke-width="1.3" stroke-opacity="0.78" stroke-dasharray="0.62 0.56"/><path d="M76.70 144.63H80.24" stroke="#1a1a1a" stroke-width="1.3" stroke-opacity="0.78" stroke-dasharray="0.62 0.56"/><path d="M80.44 144.63H83.98" stroke="#1a1a1a" stroke-width="1.3" stroke-opacity="0.78" stroke-dasharray="0.62 0.56"/><path d="M7.00 147.10H10.54" stroke="#1a1a1a" stroke-width="1.3" stroke-opacity="0.78" stroke-dasharray="0.62 0.56"/><path d="M11.60 147.10H17.50" stroke="#1a1a1a" stroke-width="1.3" stroke-opacity="0.78" stroke-dasharray="0.62 0.56"/><path d="M19.46 147.10H21.82" stroke="#c8a800" stroke-width="1.2" stroke-opacity="0.85" stroke-dasharray="0.62 0.56"/><path d="M22.89 147.10H31.15" stroke="#c8a800" stroke-width="1.2" stroke-opacity="0.85" stroke-dasharray="0.62 0.56"/><path d="M32.25 147.10H40.51" stroke="#d88a20" stroke-width="1.2" stroke-opacity="0.85" stroke-dasharray="0.62 0.56"/><path d="M40.71 147.10H50.15" stroke="#d88a20" stroke-width="1.2" stroke-opacity="0.85" stroke-dasharray="0.62 0.56"/><path d="M51.21 147.10H61.83" stroke="#d88a20" stroke-width="1.2" stroke-opacity="0.85" stroke-dasharray="0.62 0.56"/><path d="M63.79 147.10H73.23" stroke="#1a1a1a" stroke-width="1.3" stroke-opacity="0.78" stroke-dasharray="0.62 0.56"/><path d="M73.43 147.10H84.05" stroke="#1a1a1a" stroke-width="1.3" stroke-opacity="0.78" stroke-dasharray="0.62 0.56"/><path d="M85.11 147.10H88.65" stroke="#1a1a1a" stroke-width="1.3" stroke-opacity="0.78" stroke-dasharray="0.62 0.56"/><path d="M88.85 147.10H91.21" stroke="#1a1a1a" stroke-width="1.3" stroke-opacity="0.78" stroke-dasharray="0.62 0.56"/><path d="M92.31 147.10H99.39" stroke="#c8a800" stroke-width="1.2" stroke-opacity="0.85" stroke-dasharray="0.62 0.56"/><path d="M100.45 147.10H105.17" stroke="#c8a800" stroke-width="1.2" stroke-opacity="0.85" stroke-dasharray="0.62 0.56"/><path d="M106.24 147.10H114.50" stroke="#c8a800" stroke-width="1.2" stroke-opacity="0.85" stroke-dasharray="0.62 0.56"/><path d="M114.70 147.10H121.78" stroke="#c8a800" stroke-width="1.2" stroke-opacity="0.85" stroke-dasharray="0.62 0.56"/><path d="M122.84 147.10H124.02" stroke="#c8a800" stroke-width="1.2" stroke-opacity="0.85" stroke-dasharray="0.62 0.56"/><path d="M125.98 147.10H133.06" stroke="#d88a20" stroke-width="1.2" stroke-opacity="0.85" stroke-dasharray="0.62 0.56"/><path d="M134.12 147.10H144.74" stroke="#d88a20" stroke-width="1.2" stroke-opacity="0.85" stroke-dasharray="0.62 0.56"/><path d="M145.80 147.10H146.98" stroke="#d88a20" stroke-width="1.2" stroke-opacity="0.85" stroke-dasharray="0.62 0.56"/><path d="M148.08 147.10H152.80" stroke="#1a1a1a" stroke-width="1.3" stroke-opacity="0.78" stroke-dasharray="0.62 0.56"/><path d="M153.87 147.10H158.59" stroke="#1a1a1a" stroke-width="1.3" stroke-opacity="0.78" stroke-dasharray="0.62 0.56"/><path d="M7.00 149.57H17.62" stroke="#1a1a1a" stroke-width="1.3" stroke-opacity="0.78" stroke-dasharray="0.62 0.56"/><path d="M18.72 149.57H21.08" stroke="#1a1a1a" stroke-width="1.3" stroke-opacity="0.78" stroke-dasharray="0.62 0.56"/><path d="M22.14 149.57H31.58" stroke="#1a1a1a" stroke-width="1.3" stroke-opacity="0.78" stroke-dasharray="0.62 0.56"/><path d="M32.64 149.57H33.82" stroke="#1a1a1a" stroke-width="1.3" stroke-opacity="0.78" stroke-dasharray="0.62 0.56"/><path d="M34.92 149.57H44.36" stroke="#1a1a1a" stroke-width="1.3" stroke-opacity="0.78" stroke-dasharray="0.62 0.56"/><path d="M7.00 152.04H14.08" stroke="#1a1a1a" stroke-width="1.3" stroke-opacity="0.78" stroke-dasharray="0.62 0.56"/><path d="M15.18 152.04H17.54" stroke="#1a1a1a" stroke-width="1.3" stroke-opacity="0.78" stroke-dasharray="0.62 0.56"/><path d="M18.60 152.04H25.68" stroke="#1a1a1a" stroke-width="1.3" stroke-opacity="0.78" stroke-dasharray="0.62 0.56"/><path d="M26.78 152.04H36.22" stroke="#1a1a1a" stroke-width="1.3" stroke-opacity="0.78" stroke-dasharray="0.62 0.56"/><path d="M37.28 152.04H39.64" stroke="#1a1a1a" stroke-width="1.3" stroke-opacity="0.78" stroke-dasharray="0.62 0.56"/><path d="M40.71 152.04H45.43" stroke="#1a1a1a" stroke-width="1.3" stroke-opacity="0.78" stroke-dasharray="0.62 0.56"/><path d="M47.39 152.04H53.29" stroke="#1a1a1a" stroke-width="1.3" stroke-opacity="0.78" stroke-dasharray="0.62 0.56"/><path d="M54.35 152.04H59.07" stroke="#1a1a1a" stroke-width="1.3" stroke-opacity="0.78" stroke-dasharray="0.62 0.56"/><path d="M3.00 154.51H4.18" stroke="#1a1a1a" stroke-width="1.3" stroke-opacity="0.78" stroke-dasharray="0.62 0.56"/><path d="M3.00 159.45H10.08" stroke="#3050b0" stroke-width="1.3" stroke-opacity="0.78" stroke-dasharray="0.62 0.56"/><path d="M12.04 159.45H20.30" stroke="#1a1a1a" stroke-width="1.3" stroke-opacity="0.78" stroke-dasharray="0.62 0.56"/><path d="M21.36 159.45H30.80" stroke="#1a1a1a" stroke-width="1.3" stroke-opacity="0.78" stroke-dasharray="0.62 0.56"/><path d="M31.87 159.45H34.23" stroke="#1a1a1a" stroke-width="1.3" stroke-opacity="0.78" stroke-dasharray="0.62 0.56"/><path d="M35.33 159.45H40.05" stroke="#1a1a1a" stroke-width="1.3" stroke-opacity="0.78" stroke-dasharray="0.62 0.56"/><path d="M7.00 161.92H14.08" stroke="#1a1a1a" stroke-width="1.3" stroke-opacity="0.78" stroke-dasharray="0.62 0.56"/><path d="M15.18 161.92H19.90" stroke="#1a1a1a" stroke-width="1.3" stroke-opacity="0.78" stroke-dasharray="0.62 0.56"/><path d="M20.96 161.92H24.50" stroke="#1a1a1a" stroke-width="1.3" stroke-opacity="0.78" stroke-dasharray="0.62 0.56"/><path d="M24.70 161.92H27.06" stroke="#1a1a1a" stroke-width="1.3" stroke-opacity="0.78" stroke-dasharray="0.62 0.56"/><path d="M28.16 161.92H35.24" stroke="#1a1a1a" stroke-width="1.3" stroke-opacity="0.78" stroke-dasharray="0.62 0.56"/><path d="M36.30 161.92H43.38" stroke="#1a1a1a" stroke-width="1.3" stroke-opacity="0.78" stroke-dasharray="0.62 0.56"/><path d="M44.48 161.92H49.20" stroke="#1a1a1a" stroke-width="1.3" stroke-opacity="0.78" stroke-dasharray="0.62 0.56"/><path d="M7.00 166.86H9.36" stroke="#1a1a1a" stroke-width="1.3" stroke-opacity="0.78" stroke-dasharray="0.62 0.56"/><path d="M9.56 166.86H16.64" stroke="#1a1a1a" stroke-width="1.3" stroke-opacity="0.78" stroke-dasharray="0.62 0.56"/><path d="M16.84 166.86H20.38" stroke="#1a1a1a" stroke-width="1.3" stroke-opacity="0.78" stroke-dasharray="0.62 0.56"/><path d="M21.48 166.86H27.38" stroke="#c8a800" stroke-width="1.2" stroke-opacity="0.85" stroke-dasharray="0.62 0.56"/><path d="M27.58 166.86H29.94" stroke="#c8a800" stroke-width="1.2" stroke-opacity="0.85" stroke-dasharray="0.62 0.56"/><path d="M30.14 166.86H34.86" stroke="#c8a800" stroke-width="1.2" stroke-opacity="0.85" stroke-dasharray="0.62 0.56"/><path d="M35.96 166.86H39.50" stroke="#1a1a1a" stroke-width="1.3" stroke-opacity="0.78" stroke-dasharray="0.62 0.56"/><path d="M40.60 166.86H46.50" stroke="#d88a20" stroke-width="1.2" stroke-opacity="0.85" stroke-dasharray="0.62 0.56"/><path d="M46.70 166.86H56.14" stroke="#d88a20" stroke-width="1.2" stroke-opacity="0.85" stroke-dasharray="0.62 0.56"/><path d="M57.20 166.86H64.28" stroke="#d88a20" stroke-width="1.2" stroke-opacity="0.85" stroke-dasharray="0.62 0.56"/><path d="M65.38 166.86H74.82" stroke="#1a1a1a" stroke-width="1.3" stroke-opacity="0.78" stroke-dasharray="0.62 0.56"/><path d="M75.88 166.86H78.24" stroke="#1a1a1a" stroke-width="1.3" stroke-opacity="0.78" stroke-dasharray="0.62 0.56"/><path d="M78.44 166.86H79.62" stroke="#1a1a1a" stroke-width="1.3" stroke-opacity="0.78" stroke-dasharray="0.62 0.56"/><path d="M7.00 169.33H14.08" stroke="#1a1a1a" stroke-width="1.3" stroke-opacity="0.78" stroke-dasharray="0.62 0.56"/><path d="M16.04 169.33H24.30" stroke="#1a1a1a" stroke-width="1.3" stroke-opacity="0.78" stroke-dasharray="0.62 0.56"/><path d="M25.36 169.33H27.72" stroke="#1a1a1a" stroke-width="1.3" stroke-opacity="0.78" stroke-dasharray="0.62 0.56"/><path d="M28.82 169.33H33.54" stroke="#1a1a1a" stroke-width="1.3" stroke-opacity="0.78" stroke-dasharray="0.62 0.56"/><path d="M7.00 174.27H14.08" stroke="#1a1a1a" stroke-width="1.3" stroke-opacity="0.78" stroke-dasharray="0.62 0.56"/><path d="M15.18 174.27H18.72" stroke="#1a1a1a" stroke-width="1.3" stroke-opacity="0.78" stroke-dasharray="0.62 0.56"/><path d="M19.78 174.27H22.14" stroke="#1a1a1a" stroke-width="1.3" stroke-opacity="0.78" stroke-dasharray="0.62 0.56"/><path d="M22.34 174.27H27.06" stroke="#1a1a1a" stroke-width="1.3" stroke-opacity="0.78" stroke-dasharray="0.62 0.56"/><path d="M29.02 174.27H33.74" stroke="#1a1a1a" stroke-width="1.3" stroke-opacity="0.78" stroke-dasharray="0.62 0.56"/><path d="M34.84 174.27H41.92" stroke="#1a1a1a" stroke-width="1.3" stroke-opacity="0.78" stroke-dasharray="0.62 0.56"/><path d="M42.12 174.27H46.84" stroke="#1a1a1a" stroke-width="1.3" stroke-opacity="0.78" stroke-dasharray="0.62 0.56"/><path d="M47.91 174.27H49.09" stroke="#1a1a1a" stroke-width="1.3" stroke-opacity="0.78" stroke-dasharray="0.62 0.56"/><path d="M51.05 174.27H55.77" stroke="#1a1a1a" stroke-width="1.3" stroke-opacity="0.78" stroke-dasharray="0.62 0.56"/><path d="M55.97 174.27H63.05" stroke="#1a1a1a" stroke-width="1.3" stroke-opacity="0.78" stroke-dasharray="0.62 0.56"/><path d="M63.25 174.27H67.97" stroke="#1a1a1a" stroke-width="1.3" stroke-opacity="0.78" stroke-dasharray="0.62 0.56"/><path d="M69.03 174.27H71.39" stroke="#1a1a1a" stroke-width="1.3" stroke-opacity="0.78" stroke-dasharray="0.62 0.56"/><path d="M73.35 174.27H81.61" stroke="#1a1a1a" stroke-width="1.3" stroke-opacity="0.78" stroke-dasharray="0.62 0.56"/><path d="M81.81 174.27H84.17" stroke="#1a1a1a" stroke-width="1.3" stroke-opacity="0.78" stroke-dasharray="0.62 0.56"/><path d="M7.00 179.21H9.36" stroke="#1a1a1a" stroke-width="1.3" stroke-opacity="0.78" stroke-dasharray="0.62 0.56"/><path d="M10.42 179.21H16.32" stroke="#1a1a1a" stroke-width="1.3" stroke-opacity="0.78" stroke-dasharray="0.62 0.56"/><path d="M16.52 179.21H21.24" stroke="#1a1a1a" stroke-width="1.3" stroke-opacity="0.78" stroke-dasharray="0.62 0.56"/><path d="M22.34 179.21H27.06" stroke="#c8a800" stroke-width="1.2" stroke-opacity="0.85" stroke-dasharray="0.62 0.56"/><path d="M27.26 179.21H33.16" stroke="#c8a800" stroke-width="1.2" stroke-opacity="0.85" stroke-dasharray="0.62 0.56"/><path d="M34.22 179.21H36.58" stroke="#c8a800" stroke-width="1.2" stroke-opacity="0.85" stroke-dasharray="0.62 0.56"/><path d="M38.55 179.21H42.09" stroke="#1a1a1a" stroke-width="1.3" stroke-opacity="0.78" stroke-dasharray="0.62 0.56"/><path d="M44.05 179.21H53.49" stroke="#d88a20" stroke-width="1.2" stroke-opacity="0.85" stroke-dasharray="0.62 0.56"/><path d="M54.55 179.21H61.63" stroke="#d88a20" stroke-width="1.2" stroke-opacity="0.85" stroke-dasharray="0.62 0.56"/><path d="M61.83 179.21H64.19" stroke="#d88a20" stroke-width="1.2" stroke-opacity="0.85" stroke-dasharray="0.62 0.56"/><path d="M65.25 179.21H68.79" stroke="#d88a20" stroke-width="1.2" stroke-opacity="0.85" stroke-dasharray="0.62 0.56"/><path d="M70.75 179.21H80.19" stroke="#1a1a1a" stroke-width="1.3" stroke-opacity="0.78" stroke-dasharray="0.62 0.56"/><path d="M80.39 179.21H83.93" stroke="#1a1a1a" stroke-width="1.3" stroke-opacity="0.78" stroke-dasharray="0.62 0.56"/><path d="M85.03 179.21H88.57" stroke="#c8a800" stroke-width="1.2" stroke-opacity="0.85" stroke-dasharray="0.62 0.56"/><path d="M88.77 179.21H95.85" stroke="#c8a800" stroke-width="1.2" stroke-opacity="0.85" stroke-dasharray="0.62 0.56"/><path d="M7.00 181.68H11.72" stroke="#1a1a1a" stroke-width="1.3" stroke-opacity="0.78" stroke-dasharray="0.62 0.56"/><path d="M12.78 181.68H17.50" stroke="#1a1a1a" stroke-width="1.3" stroke-opacity="0.78" stroke-dasharray="0.62 0.56"/><path d="M18.60 181.68H28.04" stroke="#1a1a1a" stroke-width="1.3" stroke-opacity="0.78" stroke-dasharray="0.62 0.56"/><path d="M28.24 181.68H29.42" stroke="#1a1a1a" stroke-width="1.3" stroke-opacity="0.78" stroke-dasharray="0.62 0.56"/><path d="M30.52 181.68H37.60" stroke="#1a1a1a" stroke-width="1.3" stroke-opacity="0.78" stroke-dasharray="0.62 0.56"/><path d="M7.00 186.62H11.72" stroke="#1a1a1a" stroke-width="1.3" stroke-opacity="0.78" stroke-dasharray="0.62 0.56"/><path d="M11.92 186.62H14.28" stroke="#1a1a1a" stroke-width="1.3" stroke-opacity="0.78" stroke-dasharray="0.62 0.56"/><path d="M15.38 186.62H17.74" stroke="#1a1a1a" stroke-width="1.3" stroke-opacity="0.78" stroke-dasharray="0.62 0.56"/><path d="M17.94 186.62H20.30" stroke="#1a1a1a" stroke-width="1.3" stroke-opacity="0.78" stroke-dasharray="0.62 0.56"/><path d="M20.50 186.62H25.22" stroke="#1a1a1a" stroke-width="1.3" stroke-opacity="0.78" stroke-dasharray="0.62 0.56"/><path d="M25.42 186.62H26.60" stroke="#1a1a1a" stroke-width="1.3" stroke-opacity="0.78" stroke-dasharray="0.62 0.56"/><path d="M27.70 186.62H31.24" stroke="#1a1a1a" stroke-width="1.3" stroke-opacity="0.78" stroke-dasharray="0.62 0.56"/><path d="M31.44 186.62H42.06" stroke="#1a1a1a" stroke-width="1.3" stroke-opacity="0.78" stroke-dasharray="0.62 0.56"/><path d="M44.02 186.62H53.46" stroke="#1a1a1a" stroke-width="1.3" stroke-opacity="0.78" stroke-dasharray="0.62 0.56"/><path d="M54.52 186.62H58.06" stroke="#1a1a1a" stroke-width="1.3" stroke-opacity="0.78" stroke-dasharray="0.62 0.56"/><path d="M59.16 186.62H69.78" stroke="#1a1a1a" stroke-width="1.3" stroke-opacity="0.78" stroke-dasharray="0.62 0.56"/><path d="M69.98 186.62H74.70" stroke="#1a1a1a" stroke-width="1.3" stroke-opacity="0.78" stroke-dasharray="0.62 0.56"/><path d="M75.77 186.62H79.31" stroke="#1a1a1a" stroke-width="1.3" stroke-opacity="0.78" stroke-dasharray="0.62 0.56"/><path d="M81.27 186.62H85.99" stroke="#1a1a1a" stroke-width="1.3" stroke-opacity="0.78" stroke-dasharray="0.62 0.56"/><path d="M87.05 186.62H96.49" stroke="#1a1a1a" stroke-width="1.3" stroke-opacity="0.78" stroke-dasharray="0.62 0.56"/><path d="M96.69 186.62H99.05" stroke="#1a1a1a" stroke-width="1.3" stroke-opacity="0.78" stroke-dasharray="0.62 0.56"/><path d="M100.15 186.62H109.59" stroke="#1a1a1a" stroke-width="1.3" stroke-opacity="0.78" stroke-dasharray="0.62 0.56"/><path d="M7.00 189.09H10.54" stroke="#1a1a1a" stroke-width="1.3" stroke-opacity="0.78" stroke-dasharray="0.62 0.56"/><path d="M11.60 189.09H12.78" stroke="#1a1a1a" stroke-width="1.3" stroke-opacity="0.78" stroke-dasharray="0.62 0.56"/><path d="M13.88 189.09H19.78" stroke="#d88a20" stroke-width="1.2" stroke-opacity="0.85" stroke-dasharray="0.62 0.56"/><path d="M19.98 189.09H30.60" stroke="#d88a20" stroke-width="1.2" stroke-opacity="0.85" stroke-dasharray="0.62 0.56"/><path d="M32.56 189.09H39.64" stroke="#1a1a1a" stroke-width="1.3" stroke-opacity="0.78" stroke-dasharray="0.62 0.56"/></svg><div style="left:0px;top:189.2px;width:260.7px;height:5.2px;background:linear-gradient(180deg,#e6e6e6,#cecece);border-top:0.5px solid #999;"></div><div class="t" style="left:3px;top:190.5px;font-size:2.8px;color:#444;">+</div><div class="t" style="left:9px;top:190.5px;font-size:2.8px;color:#444;">▼</div><div class="t" style="left:15px;top:190.5px;font-size:2.8px;color:#444;">*</div><div class="t" style="left:21px;top:190.5px;font-size:2.8px;color:#444;">■</div><div class="t" style="left:48px;top:190.5px;font-size:2.7px;color:#333;">* ▼  PHP  ▼   Tab Size: 4  ▼   function get_page</div></div>
<!-- auto -->
<div class="w" style="left:579.7px;top:209.3px;width:170.8px;height:124.2px;background:#fff;"><div style="left:0px;top:0px;width:170.8px;height:5px;background:linear-gradient(180deg,#ececec,#d0d0d0);border-bottom:0.5px solid #8c8c8c;"></div><div style="left:2.0px;top:1.2px;width:2.2px;height:2.2px;border-radius:50%;background:#c2c2c2;"></div><div style="left:5.4px;top:1.2px;width:2.2px;height:2.2px;border-radius:50%;background:#c2c2c2;"></div><div style="left:8.8px;top:1.2px;width:2.2px;height:2.2px;border-radius:50%;background:#c2c2c2;"></div><div class="t" style="left:79px;top:1.1px;font-size:2.8px;color:#555;">Services</div><div style="left:0px;top:5px;width:37.3px;height:113.5px;background:#fbfbfb;border-right:0.5px solid #a0a0a0;"></div><div class="t" style="left:2px;top:6.5px;font-size:2.5px;color:#6a7682;font-weight:bold;">SERVERS</div><div style="left:6px;top:10px;width:3.5px;height:3px;background:#4a7a4a;border-radius:0.5px;"></div><div class="t" style="left:11px;top:10.3px;font-size:2.8px;color:#222;">Main</div><div style="left:32px;top:10.2px;width:2.5px;height:2.5px;border:0.4px solid #b0b0b0;border-radius:50%;"></div><div class="t" style="left:2px;top:16.5px;font-size:2.5px;color:#6a7682;font-weight:bold;">SITES</div><div style="left:6px;top:20.099999999999998px;width:3.4px;height:3px;background:#c8a850;border:0.4px solid #888;"></div><div class="t" style="left:11px;top:20.4px;font-size:2.8px;color:#222;">aOffice</div><div style="left:6px;top:24.999999999999996px;width:3.4px;height:3px;background:#c8a850;border:0.4px solid #888;"></div><div class="t" style="left:11px;top:25.299999999999997px;font-size:2.8px;color:#222;">Box</div><div style="left:6px;top:29.9px;width:3.4px;height:3px;background:#eee;border:0.4px solid #888;"></div><div class="t" style="left:11px;top:30.2px;font-size:2.8px;color:#222;">Webmail 1</div><div style="left:6px;top:34.800000000000004px;width:3.4px;height:3px;background:#c8a850;border:0.4px solid #888;"></div><div class="t" style="left:11px;top:35.1px;font-size:2.8px;color:#222;">eWorks</div><div style="left:0px;top:39.0px;width:37.3px;height:4.6px;background:#8f959c;"></div><div style="left:6px;top:39.7px;width:3.4px;height:3px;background:#fff;border:0.4px solid #888;"></div><div class="t" style="left:11px;top:40.0px;font-size:2.8px;color:#fff;font-weight:bold;">Project</div><div class="t" style="left:2px;top:46.2px;font-size:2.5px;color:#6a7682;font-weight:bold;">RECENT SERVICES</div><div style="left:6.5px;top:50.1px;width:0.6px;height:3px;background:#4060a0;"></div><div class="t" style="left:9px;top:50.4px;font-size:2.8px;color:#222;">Home</div><div style="left:6.5px;top:54.15px;width:0.6px;height:3px;background:#4060a0;"></div><div class="t" style="left:9px;top:54.449999999999996px;font-size:2.8px;color:#222;">Update, backup ▼</div><div style="left:6.5px;top:58.2px;width:0.6px;height:3px;background:#4060a0;"></div><div class="t" style="left:9px;top:58.5px;font-size:2.8px;color:#222;">Uploads</div><div style="left:6.5px;top:62.25px;width:0.6px;height:3px;background:#4060a0;"></div><div class="t" style="left:9px;top:62.55px;font-size:2.8px;color:#222;">FTP</div><div style="left:6.5px;top:66.3px;width:0.6px;height:3px;background:#4060a0;"></div><div class="t" style="left:9px;top:66.6px;font-size:2.8px;color:#222;">Storage 007</div><div style="left:6px;top:108.2px;width:3.5px;height:3px;background:#3a8a3a;border-radius:0.5px;"></div><div class="t" style="left:11px;top:108.5px;font-size:2.8px;color:#222;">Monitor</div><div style="left:6px;top:113.3px;width:3.5px;height:2.6px;background:#777;"></div><div class="t" style="left:11px;top:113.5px;font-size:2.8px;color:#222;">Logs</div><div style="left:37.3px;top:5px;width:133.5px;height:5.5px;background:linear-gradient(180deg,#eeeeee,#d8d8d8);border-bottom:0.4px solid #a8a8a8;"></div><div style="left:39.3px;top:6.3px;width:3px;height:3px;background:#fff;border:0.5px solid #888;"></div><div style="left:46.3px;top:5.8px;width:4.4px;height:4px;background:#f4f4f4;border:0.4px solid #b0b0b0;border-radius:1px;"></div><div class="t" style="left:54.3px;top:6.5px;font-size:2.7px;color:#333;">Status</div><div class="t" style="left:66.6px;top:6.5px;font-size:2.7px;color:#333;">Port</div><div class="t" style="left:76.0px;top:6.5px;font-size:2.7px;color:#333;">Name</div><div class="t" style="left:85.4px;top:6.5px;font-size:2.7px;color:#333;">Site</div><div class="t" style="left:94.80000000000001px;top:6.5px;font-size:2.7px;color:#333;">Start</div><div class="t" style="left:105.65px;top:6.5px;font-size:2.7px;color:#333;">Info</div><div class="t" style="left:115.05000000000001px;top:6.5px;font-size:2.7px;color:#333;">Export</div><div class="t" style="left:127.35000000000001px;top:6.5px;font-size:2.7px;color:#333;">Hostname</div><div class="t" style="left:142.55px;top:6.5px;font-size:2.7px;color:#333;">Address</div><div class="t" style="left:156.3px;top:6.5px;font-size:2.7px;color:#333;">Notes</div><div style="left:37.3px;top:10.4px;width:133.5px;height:33px;background:#b4c6e0;"></div><svg style="left:37.3px;top:13.1px" width="133.5" height="6.5" viewBox="0 0 133.5 6.5"><defs><linearGradient id="bl0" x1="0" x2="1" y1="0" y2="0"><stop offset="0" stop-color="#a4c4ea"/><stop offset=".45" stop-color="#88b0e2"/><stop offset="1" stop-color="#6896d6"/></linearGradient></defs><rect x="0" y="0.5" width="133.5" height="5.15" fill="#fff"/><rect x="0" y="0.5" width="20" height="5.15" fill="url(#bl0)"/></svg><div style="left:39.5px;top:14.799999999999999px;width:2.8px;height:2.8px;background:#fff;border:0.4px solid #345;border-radius:0.5px;"></div><div class="t" style="left:48.3px;top:14.9px;font-size:2.7px;color:#fff;">Run</div><div class="t" style="left:60.3px;top:14.799999999999999px;font-size:2.8px;color:#111;">Server 1</div><div style="left:161.3px;top:14.6px;width:6px;height:3.2px;background:linear-gradient(180deg,#ccd8ea,#b0c2dc);border-radius:1.6px;"></div><div class="t" style="left:162.5px;top:14.9px;font-size:2.4px;color:#345;">Off</div><div style="left:152.8px;top:14.6px;width:7px;height:3.2px;background:linear-gradient(180deg,#ccd8ea,#b0c2dc);border-radius:1.6px;"></div><div class="t" style="left:154.0px;top:14.9px;font-size:2.4px;color:#345;">Open</div><div style="left:145.3px;top:14.6px;width:6px;height:3.2px;background:linear-gradient(180deg,#ccd8ea,#b0c2dc);border-radius:1.6px;"></div><div class="t" style="left:146.5px;top:14.9px;font-size:2.4px;color:#345;">Edit</div><div style="left:134.8px;top:14.6px;width:9px;height:3.2px;background:linear-gradient(180deg,#ccd8ea,#b0c2dc);border-radius:1.6px;"></div><div class="t" style="left:136.0px;top:14.9px;font-size:2.4px;color:#345;">Logs</div><svg style="left:37.3px;top:18.93px" width="133.5" height="6.5" viewBox="0 0 133.5 6.5"><defs><linearGradient id="bl1" x1="0" x2="1" y1="0" y2="0"><stop offset="0" stop-color="#a4c4ea"/><stop offset=".45" stop-color="#88b0e2"/><stop offset="1" stop-color="#6896d6"/></linearGradient></defs><rect x="0" y="0.5" width="133.5" height="5.15" fill="#fff"/><rect x="0" y="0.5" width="20" height="5.15" fill="url(#bl1)"/></svg><div style="left:39.5px;top:20.63px;width:2.8px;height:2.8px;background:#fff;border:0.4px solid #345;border-radius:0.5px;"></div><div class="t" style="left:48.3px;top:20.73px;font-size:2.7px;color:#fff;">Run</div><div class="t" style="left:60.3px;top:20.63px;font-size:2.8px;color:#111;">Sync (Uploads), Update/etc</div><svg style="left:37.3px;top:24.76px" width="133.5" height="6.5" viewBox="0 0 133.5 6.5"><defs><linearGradient id="bl2" x1="0" x2="1" y1="0" y2="0"><stop offset="0" stop-color="#a4c4ea"/><stop offset=".45" stop-color="#88b0e2"/><stop offset="1" stop-color="#6896d6"/></linearGradient></defs><rect x="0" y="0.5" width="133.5" height="5.15" fill="#fff"/><rect x="0" y="0.5" width="20" height="5.15" fill="url(#bl2)"/></svg><div style="left:39.5px;top:26.459999999999997px;width:2.8px;height:2.8px;background:#fff;border:0.4px solid #345;border-radius:0.5px;"></div><div class="t" style="left:48.3px;top:26.56px;font-size:2.7px;color:#fff;">Run</div><div class="t" style="left:60.3px;top:26.459999999999997px;font-size:2.8px;color:#111;">Uploader</div><div style="left:157.3px;top:26.259999999999998px;width:10px;height:3.2px;background:linear-gradient(180deg,#ccd8ea,#b0c2dc);border-radius:1.6px;"></div><div class="t" style="left:158.5px;top:26.56px;font-size:2.4px;color:#345;">Deploy</div><div style="left:147.8px;top:26.259999999999998px;width:8px;height:3.2px;background:linear-gradient(180deg,#ccd8ea,#b0c2dc);border-radius:1.6px;"></div><div class="t" style="left:149.0px;top:26.56px;font-size:2.4px;color:#345;">Edit</div><div style="left:138.3px;top:26.259999999999998px;width:8px;height:3.2px;background:linear-gradient(180deg,#ccd8ea,#b0c2dc);border-radius:1.6px;"></div><div class="t" style="left:139.5px;top:26.56px;font-size:2.4px;color:#345;">Info</div><svg style="left:37.3px;top:30.59px" width="133.5" height="6.5" viewBox="0 0 133.5 6.5"><defs><linearGradient id="bl3" x1="0" x2="1" y1="0" y2="0"><stop offset="0" stop-color="#a4c4ea"/><stop offset=".45" stop-color="#88b0e2"/><stop offset="1" stop-color="#6896d6"/></linearGradient></defs><rect x="0" y="0.5" width="133.5" height="5.15" fill="#fff"/><rect x="0" y="0.5" width="20" height="5.15" fill="url(#bl3)"/></svg><div style="left:39.5px;top:32.290000000000006px;width:2.8px;height:2.8px;background:#fff;border:0.4px solid #345;border-radius:0.5px;"></div><div class="t" style="left:48.3px;top:32.39px;font-size:2.7px;color:#fff;">Run</div><div class="t" style="left:60.3px;top:32.290000000000006px;font-size:2.8px;color:#111;">FTP</div><div style="left:161.3px;top:32.09px;width:6px;height:3.2px;background:linear-gradient(180deg,#ccd8ea,#b0c2dc);border-radius:1.6px;"></div><div class="t" style="left:162.5px;top:32.39px;font-size:2.4px;color:#345;">Run</div><svg style="left:37.3px;top:36.42px" width="133.5" height="6.5" viewBox="0 0 133.5 6.5"><defs><linearGradient id="bl4" x1="0" x2="1" y1="0" y2="0"><stop offset="0" stop-color="#a4c4ea"/><stop offset=".45" stop-color="#88b0e2"/><stop offset="1" stop-color="#6896d6"/></linearGradient></defs><rect x="0" y="0.5" width="133.5" height="5.15" fill="#fff"/><rect x="0" y="0.5" width="20" height="5.15" fill="url(#bl4)"/></svg><div style="left:39.5px;top:38.120000000000005px;width:2.8px;height:2.8px;background:#fff;border:0.4px solid #345;border-radius:0.5px;"></div><div class="t" style="left:48.3px;top:38.22px;font-size:2.7px;color:#fff;">Run</div><div class="t" style="left:60.3px;top:38.120000000000005px;font-size:2.8px;color:#111;">Storage 007</div><div style="left:157.3px;top:37.92px;width:10px;height:3.2px;background:linear-gradient(180deg,#ccd8ea,#b0c2dc);border-radius:1.6px;"></div><div class="t" style="left:158.5px;top:38.22px;font-size:2.4px;color:#345;">Change</div><div style="left:148.8px;top:37.92px;width:7px;height:3.2px;background:linear-gradient(180deg,#ccd8ea,#b0c2dc);border-radius:1.6px;"></div><div class="t" style="left:150.0px;top:38.22px;font-size:2.4px;color:#345;">Info</div><div class="t" style="left:158.8px;top:38.120000000000005px;font-size:2.5px;color:#555;">Info ▼</div><div style="left:37.3px;top:42.8px;width:133.5px;height:63.3px;background:linear-gradient(180deg,#a3abb8,#aab2be);"></div><div style="left:37.3px;top:106.1px;width:133.5px;height:12.4px;background:linear-gradient(180deg,#efefef,#dcdcdc);border-top:0.5px solid #999;"></div><div style="left:39.8px;top:108px;width:4px;height:4.4px;background:#5a8ad0;border-radius:0.8px;opacity:.75"></div><div class="t" style="left:37.8px;top:113.8px;font-size:2.4px;color:#333;width:8px;text-align:center;">Add</div><div style="left:48.3px;top:108px;width:4px;height:4.4px;background:#d8b060;border-radius:0.8px;opacity:.75"></div><div class="t" style="left:46.3px;top:113.8px;font-size:2.4px;color:#333;width:8px;text-align:center;">Edit</div><div style="left:89.3px;top:108px;width:4px;height:4.4px;background:#d8a040;border-radius:0.8px;opacity:.75"></div><div class="t" style="left:87.3px;top:113.8px;font-size:2.4px;color:#333;width:8px;text-align:center;">Play</div><div style="left:97.8px;top:108px;width:4px;height:4.4px;background:#b8b040;border-radius:0.8px;opacity:.75"></div><div class="t" style="left:95.8px;top:113.8px;font-size:2.4px;color:#333;width:8px;text-align:center;">Restart</div><div style="left:107.3px;top:108px;width:4px;height:4.4px;background:#88c8a8;border-radius:0.8px;opacity:.75"></div><div class="t" style="left:105.3px;top:113.8px;font-size:2.4px;color:#333;width:8px;text-align:center;">Stop</div><div style="left:149.8px;top:108px;width:4px;height:4.4px;background:#333;border-radius:0.8px;opacity:.75"></div><div class="t" style="left:147.8px;top:113.8px;font-size:2.4px;color:#333;width:8px;text-align:center;">Console</div><div style="left:161.8px;top:108px;width:4px;height:4.4px;background:#333;border-radius:0.8px;opacity:.75"></div><div class="t" style="left:159.8px;top:113.8px;font-size:2.4px;color:#333;width:8px;text-align:center;">Log</div><div style="left:0px;top:118.5px;width:170.8px;height:5.7px;background:linear-gradient(180deg,#e2e2e2,#c8c8c8);border-top:0.5px solid #909090;"></div><div style="left:3px;top:119.6px;width:7.5px;height:3.3px;background:#f2f2f2;border:0.4px solid #b0b0b0;border-radius:1px;"></div><div style="left:11.5px;top:119.6px;width:7.5px;height:3.3px;background:#f2f2f2;border:0.4px solid #b0b0b0;border-radius:1px;"></div><div class="t" style="left:77px;top:120.3px;font-size:2.7px;color:#333;">5 sites</div><div style="left:130px;top:119.5px;width:38px;height:3.6px;background:#fff;border:0.4px solid #b0b0b0;border-radius:2px;"></div><div style="left:127px;top:120px;width:2.2px;height:2.2px;border:0.6px solid #444;border-radius:50%;"></div></div>
<!-- dialog -->
<div class="w" style="left:269.3px;top:344.8px;width:40.8px;height:27.8px;background:#dcdcdc;"><div style="left:0px;top:0px;width:40.8px;height:4.6px;background:linear-gradient(180deg,#e8e8e8,#cccccc);border-bottom:0.5px solid #999;"></div><div style="left:1.6px;top:1.2px;width:2px;height:2px;border-radius:50%;background:#bcbcbc;"></div><div style="left:4.6px;top:1.2px;width:2px;height:2px;border-radius:50%;background:#bcbcbc;"></div><div style="left:7.6px;top:1.2px;width:2px;height:2px;border-radius:50%;background:#bcbcbc;"></div><div class="t" style="left:16px;top:1.1px;font-size:2.7px;color:#444;">Control</div><div style="left:3.5px;top:7.2px;width:2.4px;height:2.4px;background:#6ab04a;border-radius:50%;"></div><div class="t" style="left:8px;top:7.300000000000001px;font-size:2.8px;color:#222;">Apache</div><div style="left:20.5px;top:6.4px;width:17.5px;height:4.2px;background:linear-gradient(180deg,#fdfdfd,#e6e6e6);border:0.4px solid #b0b0b0;border-radius:1.8px;"></div><div class="t" style="left:20.5px;top:7.2px;font-size:2.7px;color:#222;width:17.5px;text-align:center;">Stop</div><div style="left:3.5px;top:14.0px;width:2.4px;height:2.4px;background:#6ab04a;border-radius:50%;"></div><div class="t" style="left:8px;top:14.1px;font-size:2.8px;color:#222;">MySQL</div><div style="left:20.5px;top:13.2px;width:17.5px;height:4.2px;background:linear-gradient(180deg,#fdfdfd,#e6e6e6);border:0.4px solid #b0b0b0;border-radius:1.8px;"></div><div class="t" style="left:20.5px;top:14.0px;font-size:2.7px;color:#222;width:17.5px;text-align:center;">Stop</div><div style="left:3.5px;top:20.8px;width:2.4px;height:2.4px;background:#d04a3a;border-radius:50%;"></div><div class="t" style="left:8px;top:20.9px;font-size:2.8px;color:#222;">FTP</div><div style="left:20.5px;top:20.0px;width:17.5px;height:4.2px;background:linear-gradient(180deg,#fdfdfd,#e6e6e6);border:0.4px solid #b0b0b0;border-radius:1.8px;"></div><div class="t" style="left:20.5px;top:20.8px;font-size:2.7px;color:#222;width:17.5px;text-align:center;">Start</div></div>
<!-- browser -->
<div class="w" style="left:267.3px;top:375.8px;width:261.5px;height:193.4px;background:#fff;"><div style="left:0px;top:0px;width:261.5px;height:7.3px;background:linear-gradient(180deg,#d8d8d8,#c4c4c4);"></div><div style="left:2.2px;top:1.6px;width:2.3px;height:2.3px;border-radius:50%;background:#c8c8c8;"></div><div style="left:5.800000000000001px;top:1.6px;width:2.3px;height:2.3px;border-radius:50%;background:#c8c8c8;"></div><div style="left:9.4px;top:1.6px;width:2.3px;height:2.3px;border-radius:50%;background:#c8c8c8;"></div><div style="left:15.5px;top:1.6px;width:39px;height:5.7px;background:#d0d0d0;border:0.5px solid #9a9a9a;border-bottom:none;border-radius:1.5px 1.5px 0 0;"></div><div class="t" style="left:21.0px;top:3.2px;font-size:2.7px;color:#333;width:29px;overflow:hidden;">VK | Messages and more</div><div class="t" style="left:51.0px;top:3.2px;font-size:2.7px;color:#666;">×</div><div style="left:55px;top:1.6px;width:39.5px;height:5.7px;background:#d0d0d0;border:0.5px solid #9a9a9a;border-bottom:none;border-radius:1.5px 1.5px 0 0;"></div><div style="left:56.5px;top:3px;width:2.8px;height:2.8px;background:#e8d060;border-radius:0.4px;"></div><div class="t" style="left:60.5px;top:3.2px;font-size:2.7px;color:#333;width:29.5px;overflow:hidden;">Apache Friends - XAMPP</div><div class="t" style="left:91.0px;top:3.2px;font-size:2.7px;color:#666;">×</div><div style="left:95px;top:1.6px;width:41px;height:5.7px;background:#f0f0f0;border:0.5px solid #9a9a9a;border-bottom:none;border-radius:1.5px 1.5px 0 0;"></div><div style="left:96.5px;top:3px;width:2.8px;height:2.8px;background:#5a7aa0;border-radius:0.4px;"></div><div class="t" style="left:100.5px;top:3.2px;font-size:2.7px;color:#333;width:31px;overflow:hidden;">VKontakte | Welcome</div><div class="t" style="left:132.5px;top:3.2px;font-size:2.7px;color:#666;">×</div><div style="left:0px;top:7.3px;width:261.5px;height:7.2px;background:linear-gradient(180deg,#f0f0f0,#dedede);border-bottom:0.5px solid #a0a0a0;"></div><div class="t" style="left:2.2px;top:8.9px;font-size:3.2px;color:#444;">◄</div><div class="t" style="left:8.2px;top:8.9px;font-size:3.2px;color:#999;">►</div><div class="t" style="left:13.6px;top:8.4px;font-size:3.8px;color:#444;font-weight:bold;">C</div><div style="left:18.5px;top:8.5px;width:226px;height:4.8px;background:#fff;border:0.5px solid #a8a8a8;border-radius:1.2px;"></div><div style="left:20px;top:9.6px;width:2.4px;height:2.6px;border:0.4px solid #888;"></div><div class="t" style="left:24px;top:9.6px;font-size:2.9px;color:#333;">vkontakte.ru/feed</div><div style="left:238px;top:9.5px;width:3px;height:2.8px;background:#d8c050;border-radius:0.4px;"></div><div style="left:248px;top:9.2px;width:3.6px;height:3.4px;background:#888;border-radius:50%;"></div><div class="t" style="left:255px;top:9.2px;font-size:3.2px;color:#555;">/</div><div style="left:0px;top:14.5px;width:261.5px;height:172px;background:#fff;"></div><div style="left:258.3px;top:14.5px;width:3.2px;height:172px;background:#f0f0f0;border-left:0.5px solid #ccc;"></div><div style="left:258.7px;top:18px;width:2.4px;height:60px;background:#b8bcc0;border-radius:1.2px;"></div><div style="left:48.3px;top:15px;width:159.5px;height:7.2px;background:linear-gradient(180deg,#5b7ea6,#45688e);border-radius:0 0 1.2px 1.2px;"></div><div style="left:51.3px;top:16.6px;width:4px;height:4px;background:#fff;border-radius:0.6px;"></div><div class="t" style="left:56.3px;top:17px;font-size:3.3px;color:#fff;font-weight:bold;">вконтакте</div><div class="t" style="left:90.3px;top:17.3px;font-size:2.7px;color:#dfe8f2;font-weight:bold;">people</div><div class="t" style="left:104.3px;top:17.3px;font-size:2.7px;color:#dfe8f2;font-weight:bold;">communities</div><div class="t" style="left:126.3px;top:17.3px;font-size:2.7px;color:#dfe8f2;font-weight:bold;">games</div><div class="t" style="left:140.3px;top:17.3px;font-size:2.7px;color:#dfe8f2;font-weight:bold;">music</div><div class="t" style="left:152.3px;top:17.3px;font-size:2.7px;color:#dfe8f2;font-weight:bold;">help</div><div class="t" style="left:166.3px;top:17.3px;font-size:2.7px;color:#dfe8f2;font-weight:bold;">log out</div><div style="left:184.3px;top:16.4px;width:21px;height:4.4px;background:#fff;border-radius:0.8px;"></div><div class="t" style="left:186.3px;top:17.4px;font-size:2.6px;color:#999;">Search</div><div class="t" style="left:50.3px;top:24.3px;font-size:2.7px;color:#2b587a;">My Profile</div><div class="t" style="left:50.3px;top:28.64px;font-size:2.7px;color:#2b587a;">My Friends</div><div class="t" style="left:50.3px;top:32.980000000000004px;font-size:2.7px;color:#2b587a;">My Photos</div><div class="t" style="left:50.3px;top:37.32px;font-size:2.7px;color:#2b587a;">My Videos</div><div class="t" style="left:50.3px;top:41.66px;font-size:2.7px;color:#2b587a;">My Audio Files</div><div class="t" style="left:50.3px;top:46.0px;font-size:2.7px;color:#2b587a;">My Messages</div><div class="t" style="left:50.3px;top:50.34px;font-size:2.7px;color:#2b587a;">My Groups</div><div class="t" style="left:50.3px;top:54.68px;font-size:2.7px;color:#2b587a;">My News</div><div class="t" style="left:50.3px;top:59.019999999999996px;font-size:2.7px;color:#2b587a;">My Feedback</div><div class="t" style="left:50.3px;top:63.36px;font-size:2.7px;color:#2b587a;">My Settings</div><div class="t" style="left:50.3px;top:67.7px;font-size:2.7px;color:#2b587a;">Applications</div><div class="t" style="left:70.3px;top:24.3px;font-size:2.3px;color:#9ab;">edit</div><div class="t" style="left:50.3px;top:73.1px;font-size:2.7px;color:#2b587a;">Documents</div><div class="t" style="left:50.3px;top:77.14999999999999px;font-size:2.7px;color:#2b587a;">Payments</div><div class="t" style="left:50.3px;top:81.19999999999999px;font-size:2.7px;color:#2b587a;">Stats</div><div class="t" style="left:51.3px;top:88px;font-size:2.5px;color:#456;font-weight:bold;">Reminders: 3</div><div style="left:53.3px;top:92.4px;width:11.5px;height:4.2px;background:#eef1f4;border:0.4px solid #b8c4d0;border-radius:0.8px;"></div><div class="t" style="left:53.3px;top:93.4px;font-size:2.4px;color:#123;font-weight:bold;width:11.5px;text-align:center;">B-days</div><div class="t" style="left:51.3px;top:99.2px;font-size:2.4px;color:#789;">Advertising · close</div><div style="left:50.3px;top:106.4px;width:20.5px;height:30.8px;background:#f5f7f9;"></div><div class="t" style="left:50.3px;top:107.4px;font-size:2.5px;color:#2b587a;font-weight:bold;width:20.5px;text-align:center;">Best band</div><div style="left:52.699999999999996px;top:111.5px;width:15.8px;height:15.7px;background:radial-gradient(circle 2.2px at 30% 35%,#e8c8a8,rgba(0,0,0,0) 100%),radial-gradient(circle 2.2px at 65% 30%,#e0c0a0,rgba(0,0,0,0) 100%),radial-gradient(circle 2.5px at 50% 65%,#d8b898,rgba(0,0,0,0) 100%),linear-gradient(135deg,#2a1a14,#5a3a2a 50%,#1a100c);"></div><div class="t" style="left:50.3px;top:129.0px;font-size:2.4px;color:#2b587a;width:20.5px;text-align:center;font-weight:bold;">New album is out</div><div class="t" style="left:50.3px;top:131.6px;font-size:2.4px;color:#666;width:20.5px;text-align:center;">listen now</div><div class="t" style="left:50.3px;top:134.2px;font-size:2.4px;color:#666;width:20.5px;text-align:center;">online</div><div style="left:50.3px;top:139.5px;width:20.5px;height:40px;background:#f5f7f9;"></div><div class="t" style="left:50.3px;top:140.8px;font-size:2.5px;color:#2b587a;font-weight:bold;width:20.5px;text-align:center;">Fun online</div><div style="left:52.699999999999996px;top:145.1px;width:14.6px;height:13.9px;background:radial-gradient(circle 4px at 50% 55%,#f4f4f0,rgba(255,255,255,0) 100%),linear-gradient(160deg,#8ac0e0,#c8e4f0 50%,#78b0d0);"></div><div class="t" style="left:50.3px;top:162.4px;font-size:2.4px;color:#2b587a;width:20.5px;text-align:center;font-weight:bold;">Your own farm in</div><div class="t" style="left:50.3px;top:165.0px;font-size:2.4px;color:#666;width:20.5px;text-align:center;">a browser, play</div><div class="t" style="left:50.3px;top:167.6px;font-size:2.4px;color:#666;width:20.5px;text-align:center;">with friends</div><div class="t" style="left:50.3px;top:170.20000000000002px;font-size:2.4px;color:#666;width:20.5px;text-align:center;">for free</div><div class="t" style="left:50.3px;top:176.5px;font-size:2.4px;color:#789;width:20.5px;text-align:center;">· · ·</div><div style="left:79.8px;top:23.3px;width:128px;height:3.2px;background:#f4efc4;"></div><div class="t" style="left:81.3px;top:23.8px;font-size:2.6px;color:#5a5220;"><b>Short sentence here</b>  ·  link</div><div style="left:79.8px;top:28.8px;width:40.8px;height:27.8px;background:radial-gradient(ellipse 9px 10px at 52% 38%,#c8c8c8 0%,#909090 60%,rgba(60,60,60,0) 100%),radial-gradient(ellipse 16px 9px at 52% 95%,#b0b0b0 0%,#8a8a8a 55%,rgba(40,40,40,0) 100%),linear-gradient(90deg,#1a1a1a,#2c2c2c 50%,#141414);"></div><div style="left:85.8px;top:32.8px;width:1.6px;height:1.6px;background:#ddd;border-radius:50%;opacity:.7"></div><div style="left:89.8px;top:37.8px;width:1.6px;height:1.6px;background:#ddd;border-radius:50%;opacity:.7"></div><div style="left:84.8px;top:42.8px;width:1.6px;height:1.6px;background:#ddd;border-radius:50%;opacity:.7"></div><div style="left:112.8px;top:34.8px;width:1.6px;height:1.6px;background:#ddd;border-radius:50%;opacity:.7"></div><div style="left:115.8px;top:40.8px;width:1.6px;height:1.6px;background:#ddd;border-radius:50%;opacity:.7"></div><div style="left:109.8px;top:31.8px;width:1.6px;height:1.6px;background:#ddd;border-radius:50%;opacity:.7"></div><div class="t" style="left:81.3px;top:59.7px;font-size:2.7px;color:#2b587a;">Upload new photograph</div><div class="t" style="left:81.3px;top:63.6px;font-size:2.7px;color:#2b587a;">Edit my thumbnail  ·</div><div class="t" style="left:81.3px;top:69.9px;font-size:2.7px;color:#2b587a;">Edit my profile</div><div class="t" style="left:114.8px;top:69.9px;font-size:2.4px;color:#789;">100</div><div class="t" style="left:81.3px;top:74.5px;font-size:2.7px;color:#456;">Profile complete: 78%</div><div style="left:117.3px;top:74.5px;width:1.6px;height:2.6px;background:#6aa84a;"></div><div style="left:79.8px;top:81.8px;width:40.8px;height:3.6px;background:#f4efc4;"></div><div style="left:91.8px;top:81.8px;width:8px;height:3.6px;background:#ebe4a8;"></div><div class="t" style="left:98.8px;top:82.4px;font-size:2.5px;color:#7a7030;">+1%</div><div style="left:79.8px;top:87.8px;width:40.8px;height:3.8px;background:#dee5eb;"></div><div class="t" style="left:81.3px;top:88.5px;font-size:2.7px;color:#45688e;font-weight:bold;">Friends</div><div class="t" style="left:103.8px;top:88.5px;font-size:2.4px;color:#8aa;">view all  |  edit</div><div style="left:79.8px;top:91.6px;width:40.8px;height:3.6px;background:#f1f4f7;"></div><div class="t" style="left:81.3px;top:92.3px;font-size:2.6px;color:#567;">241 friends</div><div class="t" style="left:113.8px;top:92.3px;font-size:2.6px;color:#567;">all</div><div style="left:82.8px;top:97.5px;width:9.5px;height:11.5px;background:radial-gradient(ellipse 3.5px 4.5px at 50% 40%,#c8a078,#5a3a28);"></div><div class="t" style="left:81.8px;top:109.8px;font-size:2.5px;color:#2b587a;width:11.5px;text-align:center;">Olga</div><div class="t" style="left:81.8px;top:112.4px;font-size:2.5px;color:#2b587a;width:11.5px;text-align:center;">Kim</div><div class="t" style="left:95.1px;top:109.8px;font-size:2.5px;color:#2b587a;width:11.5px;text-align:center;">Petr</div><div class="t" style="left:95.1px;top:112.4px;font-size:2.5px;color:#2b587a;width:11.5px;text-align:center;">Kim</div><div style="left:109.4px;top:97.5px;width:9.5px;height:11.5px;background:radial-gradient(ellipse 3.5px 4.5px at 50% 40%,#a8b8c8,#2a3a4a);"></div><div class="t" style="left:108.4px;top:109.8px;font-size:2.5px;color:#2b587a;width:11.5px;text-align:center;">Ivan</div><div class="t" style="left:108.4px;top:112.4px;font-size:2.5px;color:#2b587a;width:11.5px;text-align:center;">Petrov</div><div style="left:82.8px;top:117.0px;width:9.5px;height:11.5px;background:radial-gradient(ellipse 3.5px 4.5px at 50% 40%,#8a7868,#3a3028);"></div><div class="t" style="left:81.8px;top:129.3px;font-size:2.5px;color:#2b587a;width:11.5px;text-align:center;">Petr</div><div class="t" style="left:81.8px;top:131.9px;font-size:2.5px;color:#2b587a;width:11.5px;text-align:center;">Zaytsev</div><div style="left:96.1px;top:117.0px;width:9.5px;height:11.5px;background:radial-gradient(ellipse 3.5px 4.5px at 50% 40%,#a88858,#d8c090);"></div><div class="t" style="left:95.1px;top:129.3px;font-size:2.5px;color:#2b587a;width:11.5px;text-align:center;">Olga</div><div class="t" style="left:95.1px;top:131.9px;font-size:2.5px;color:#2b587a;width:11.5px;text-align:center;">Kim</div><div style="left:109.4px;top:117.0px;width:9.5px;height:11.5px;background:radial-gradient(ellipse 3.5px 4.5px at 50% 40%,#b08060,#4a3020);"></div><div class="t" style="left:108.4px;top:129.3px;font-size:2.5px;color:#2b587a;width:11.5px;text-align:center;">Petr</div><div class="t" style="left:108.4px;top:131.9px;font-size:2.5px;color:#2b587a;width:11.5px;text-align:center;">Zaytsev</div><div style="left:79.8px;top:138.1px;width:40.8px;height:4.1px;background:#dee5eb;"></div><div class="t" style="left:81.3px;top:139px;font-size:2.7px;color:#45688e;font-weight:bold;">Friends online</div><div style="left:79.8px;top:142.2px;width:40.8px;height:3.6px;background:#f1f4f7;"></div><div class="t" style="left:81.3px;top:142.8px;font-size:2.6px;color:#567;">26 friends</div><div style="left:82.8px;top:148.6px;width:9.5px;height:11.5px;background:radial-gradient(ellipse 3.5px 4.5px at 50% 40%,#d0a070,#6a4a30);"></div><div class="t" style="left:81.8px;top:160.9px;font-size:2.5px;color:#2b587a;width:11.5px;text-align:center;">Vera</div><div class="t" style="left:81.8px;top:163.5px;font-size:2.5px;color:#2b587a;width:11.5px;text-align:center;">Orlova</div><div style="left:96.1px;top:148.6px;width:9.5px;height:11.5px;background:radial-gradient(ellipse 3.5px 4.5px at 50% 40%,#7a6a5a,#181818);"></div><div class="t" style="left:95.1px;top:160.9px;font-size:2.5px;color:#2b587a;width:11.5px;text-align:center;">Kate</div><div class="t" style="left:95.1px;top:163.5px;font-size:2.5px;color:#2b587a;width:11.5px;text-align:center;">Zaytsev</div><div style="left:109.4px;top:148.6px;width:9.5px;height:11.5px;background:radial-gradient(ellipse 3.5px 4.5px at 50% 40%,#c8a890,#7a5a48);"></div><div class="t" style="left:108.4px;top:160.9px;font-size:2.5px;color:#2b587a;width:11.5px;text-align:center;">Igor</div><div class="t" style="left:108.4px;top:163.5px;font-size:2.5px;color:#2b587a;width:11.5px;text-align:center;">Petrov</div><div style="left:82.8px;top:168.1px;width:9.5px;height:11.5px;background:radial-gradient(ellipse 3.5px 4.5px at 50% 40%,#f0e0b0,#c0b080);"></div><div class="t" style="left:81.8px;top:180.4px;font-size:2.5px;color:#2b587a;width:11.5px;text-align:center;">Max</div><div class="t" style="left:81.8px;top:183.0px;font-size:2.5px;color:#2b587a;width:11.5px;text-align:center;">Belova</div><div style="left:96.1px;top:168.1px;width:9.5px;height:11.5px;background:radial-gradient(ellipse 3.5px 4.5px at 50% 40%,#a88060,#5a4030);"></div><div class="t" style="left:95.1px;top:180.4px;font-size:2.5px;color:#2b587a;width:11.5px;text-align:center;">Max</div><div class="t" style="left:95.1px;top:183.0px;font-size:2.5px;color:#2b587a;width:11.5px;text-align:center;">Petrov</div><div style="left:109.4px;top:168.1px;width:9.5px;height:11.5px;background:radial-gradient(ellipse 3.5px 4.5px at 50% 40%,#b89070,#3a2a20);"></div><div class="t" style="left:108.4px;top:180.4px;font-size:2.5px;color:#2b587a;width:11.5px;text-align:center;">Max</div><div class="t" style="left:108.4px;top:183.0px;font-size:2.5px;color:#2b587a;width:11.5px;text-align:center;">Zaytsev</div><div class="t" style="left:123.3px;top:28.8px;font-size:3.0px;color:#2b587a;font-weight:bold;">Maxim Vlasov</div><div class="t" style="left:193.3px;top:28.8px;font-size:2.5px;color:#9ab;">Online</div><div class="t" style="left:123.3px;top:32.8px;font-size:2.8px;color:#000;font-weight:bold;">status line with "quotation"</div><div style="left:123.3px;top:36.4px;width:84px;height:0.4px;background:#dae1e8;"></div><div class="t" style="left:123.3px;top:38.4px;font-size:2.6px;color:#777;">Birthday:</div><div class="t" style="left:149.3px;top:38.4px;font-size:2.6px;color:#2b587a;">May 3</div><div class="t" style="left:123.3px;top:41.699999999999996px;font-size:2.6px;color:#777;">Relationship status:</div><div class="t" style="left:149.3px;top:41.699999999999996px;font-size:2.6px;color:#2b587a;">In a relation</div><div class="t" style="left:123.3px;top:45.0px;font-size:2.6px;color:#777;">Hometown:</div><div class="t" style="left:149.3px;top:45.0px;font-size:2.6px;color:#2b587a;">Kiev, old town</div><div class="t" style="left:149.3px;top:50.4px;font-size:2.6px;color:#2b587a;">Show detailed information</div><div style="left:123.3px;top:57.7px;width:84px;height:3.8px;background:#dee5eb;"></div><div class="t" style="left:124.8px;top:58.4px;font-size:2.7px;color:#45688e;font-weight:bold;">Wall</div><div class="t" style="left:129.8px;top:58.4px;font-size:2.5px;color:#8aa;">344 posts</div><div class="t" style="left:182.3px;top:58.4px;font-size:2.5px;color:#8aa;">to Maxim's posts</div><div style="left:123.3px;top:62.5px;width:84px;height:7.6px;background:#f1f4f7;"></div><div style="left:124.8px;top:63.7px;width:81px;height:5.2px;background:#fff;border:0.5px solid #c0cad5;"></div><div class="t" style="left:126.3px;top:65.1px;font-size:2.6px;color:#222;width:76px;overflow:hidden;">ea sit laboris magna ad et elit sit ad aliqua ut amet</div><div style="left:124.3px;top:72.6px;width:16.5px;height:5.3px;background:linear-gradient(180deg,#6a8cb4,#54769e);border-radius:0.8px;"></div><div class="t" style="left:124.3px;top:74.1px;font-size:2.6px;color:#fff;width:16.5px;text-align:center;font-weight:bold;">Send</div><div class="t" style="left:144.3px;top:74.1px;font-size:2.6px;color:#8aa;">Attach: Photo</div><div class="t" style="left:189.3px;top:74.1px;font-size:2.6px;color:#678;">Settings ▼</div><div style="left:123.3px;top:79.7px;width:84px;height:0.4px;background:#dae1e8;"></div><div style="left:123.3px;top:81.7px;width:10.5px;height:11.5px;background:radial-gradient(ellipse 4px 5px at 50% 40%,#8a8a8a,#1a1a1a);"></div><div class="t" style="left:135.8px;top:81.7px;font-size:2.6px;color:#222;width:68px;overflow:hidden;font-weight:bold;">Maxim quis elit ad et commodo magna ad lorem veniam consequat enim exercitation nostrud tempor</div><div class="t" style="left:135.8px;top:84.65px;font-size:2.6px;color:#222;width:70px;overflow:hidden;font-weight:bold;">elit dolor quis elit amet do consectetur elit ad lorem sit ullamco magna veniam</div><div class="t" style="left:135.8px;top:87.60000000000001px;font-size:2.6px;color:#222;width:66px;overflow:hidden;font-weight:bold;">incididunt incididunt nostrud aliquip ex veniam aliquip enim ea amet lorem ex nostrud nostrud</div><div class="t" style="left:135.8px;top:90.55000000000001px;font-size:2.6px;color:#222;width:30px;overflow:hidden;font-weight:bold;">quis elit et lorem nisi ad eiusmod ea</div><div class="t" style="left:135.8px;top:93.50000000000001px;font-size:2.6px;color:#9ab;width:36px;overflow:hidden;">4 Jan at 10:12 am | Comment</div><div class="t" style="left:201.3px;top:95.1px;font-size:2.4px;color:#9ab;">Like ♥</div><div style="left:135.8px;top:99.5px;width:6.5px;height:6.5px;background:#141414;"></div><div class="t" style="left:143.8px;top:99.7px;font-size:2.6px;color:#2b587a;width:40px;overflow:hidden;">Lola Sun  ex dolor consectetur aliqua</div><div class="t" style="left:143.8px;top:102.9px;font-size:2.4px;color:#9ab;">4 Jan at 10:40 am</div><div style="left:135.8px;top:108.1px;width:68px;height:5.4px;background:#fff;border:0.5px solid #c0cad5;"></div><div class="t" style="left:137.3px;top:109.7px;font-size:2.6px;color:#777;">Comment...</div><div style="left:123.3px;top:116.9px;width:84px;height:0.4px;background:#dae1e8;"></div><div style="left:123.3px;top:119.1px;width:10.5px;height:11.5px;background:radial-gradient(ellipse 4px 5px at 50% 40%,#9a8a7a,#2a2a2a);"></div><div class="t" style="left:135.8px;top:119.1px;font-size:2.6px;color:#222;width:30px;overflow:hidden;font-weight:bold;">Maxim Vlasov photo</div><div style="left:135.8px;top:122.7px;width:27px;height:19.5px;background:radial-gradient(ellipse 7px 6px at 30% 55%,#e8d8c0,rgba(200,170,140,0) 100%),radial-gradient(ellipse 6px 5px at 72% 50%,#f0e4d8,rgba(200,170,140,0) 100%),linear-gradient(135deg,#8a6a50,#c8a888 50%,#6a5040);"></div><div class="t" style="left:135.8px;top:143.5px;font-size:2.4px;color:#9ab;">3 Jan at 6:40 pm | Comment</div><div class="t" style="left:201.3px;top:143.5px;font-size:2.4px;color:#9ab;">Like ♥</div><div style="left:123.3px;top:147.1px;width:84px;height:0.4px;background:#dae1e8;"></div><div style="left:123.3px;top:149.1px;width:10.5px;height:11.5px;background:radial-gradient(ellipse 4px 5px at 50% 40%,#7a7a7a,#1a1a1a);"></div><div class="t" style="left:135.8px;top:149.1px;font-size:2.6px;color:#222;width:62px;overflow:hidden;font-weight:bold;">Maxim aliquip magna laboris commodo ullamco dolore ex ex nostrud ipsum</div><div class="t" style="left:135.8px;top:152.04999999999998px;font-size:2.6px;color:#9ab;width:36px;overflow:hidden;">3 Jan at 2:13 pm | Comment</div><div style="left:135.8px;top:157.7px;width:7px;height:7px;background:#3a3a3a;"></div><div class="t" style="left:144.8px;top:158.7px;font-size:2.6px;color:#2b587a;width:44px;overflow:hidden;">Audio track — 3:42 · exercitation ad ad</div><div class="t" style="left:144.8px;top:162.1px;font-size:2.4px;color:#9ab;">show lyrics</div><div style="left:135.8px;top:168.1px;width:7px;height:7px;background:repeating-linear-gradient(45deg,#222 0 0.8px,#ddd 0.8px 1.6px);"></div><div class="t" style="left:144.8px;top:167.7px;font-size:2.6px;color:#222;width:60px;overflow:hidden;font-weight:bold;">eiusmod adipiscing tempor ad aliqua tempor veniam laboris laboris minim quis commodo</div><div class="t" style="left:144.8px;top:170.6px;font-size:2.6px;color:#222;width:62px;overflow:hidden;font-weight:bold;">dolor lorem labore ex consectetur magna consectetur elit incididunt incididunt incididunt amet</div><div class="t" style="left:144.8px;top:173.5px;font-size:2.6px;color:#222;width:58px;overflow:hidden;font-weight:bold;">amet lorem laboris consequat quis lorem do ullamco ipsum consectetur sed aliquip</div><div class="t" style="left:144.8px;top:176.39999999999998px;font-size:2.6px;color:#222;width:40px;overflow:hidden;font-weight:bold;">dolor ipsum ut labore elit minim quis consectetur ea enim ipsum ipsum</div><div class="t" style="left:144.8px;top:179.7px;font-size:2.4px;color:#9ab;">2 Jan at 11:02 pm</div><div style="left:0px;top:186.5px;width:261.5px;height:6.9px;background:linear-gradient(180deg,#e4e4e4,#d0d0d0);border-top:0.5px solid #a0a0a0;"></div><div style="left:2.5px;top:188px;width:38px;height:4px;background:#f4f4f4;border:0.5px solid #aaa;border-radius:0.8px;"></div><div style="left:4px;top:188.8px;width:2.6px;height:2.4px;background:#667;"></div><div class="t" style="left:8px;top:189px;font-size:2.6px;color:#333;width:30px;overflow:hidden;">Screen shot 2012-01…png</div><div class="t" style="left:225px;top:189px;font-size:2.6px;color:#2040c0;text-decoration:underline;">↓ Show all downloads…</div></div>
<!-- itunes -->
<div class="w" style="left:536.7px;top:382.9px;width:214.3px;height:109.5px;background:#fff;"><div style="left:0px;top:0px;width:214.3px;height:15px;background:linear-gradient(180deg,#f0f0f0 0%,#e2e2e2 40%,#d2d2d2 100%);border-bottom:0.5px solid #909090;"></div><div style="left:2.0px;top:1.2px;width:2.2px;height:2.2px;border-radius:50%;background:#c2c2c2;"></div><div style="left:5.4px;top:1.2px;width:2.2px;height:2.2px;border-radius:50%;background:#c2c2c2;"></div><div style="left:8.8px;top:1.2px;width:2.2px;height:2.2px;border-radius:50%;background:#c2c2c2;"></div><div class="t" style="left:101px;top:0.9px;font-size:2.8px;color:#555;">iTunes</div><div style="left:6.5px;top:6px;width:6px;height:6px;border-radius:50%;background:linear-gradient(180deg,#fdfdfd,#e0e0e0);border:0.5px solid #a8a8a8;"></div><div style="left:13.7px;top:5.2px;width:7.6px;height:7.6px;border-radius:50%;background:linear-gradient(180deg,#fdfdfd,#e0e0e0);border:0.5px solid #a8a8a8;"></div><div style="left:22.5px;top:6px;width:6px;height:6px;border-radius:50%;background:linear-gradient(180deg,#fdfdfd,#e0e0e0);border:0.5px solid #a8a8a8;"></div><div class="t" style="left:16.3px;top:7.5px;font-size:3.2px;color:#444;">►</div><div class="t" style="left:7.6px;top:7.7px;font-size:2.2px;color:#444;letter-spacing:-0.6px">◄◄</div><div class="t" style="left:23.8px;top:7.7px;font-size:2.2px;color:#444;letter-spacing:-0.6px">►►</div><div style="left:34px;top:8.6px;width:20px;height:1px;background:#8a8a8a;border-radius:0.5px;"></div><div style="left:47px;top:7.7px;width:2.6px;height:2.6px;background:#e8e8e8;border:0.5px solid #666;border-radius:50%;"></div><div style="left:63px;top:4.5px;width:88px;height:9px;background:linear-gradient(180deg,#dde2c0,#e8ecd0 50%,#e0e5c6);border:0.4px solid #c4c8b0;border-radius:1.5px;"></div><svg style="left:103.500px;top:5.800px" width="6.500" height="6.500" viewBox="0 0 20 20"><path d="M13.2 1.2c.1 1.6-1.4 3.3-3 3.2-.2-1.500 1.400-3.200 3-3.200zM16.600 14.300c-.700 1.700-2 3.900-3.500 3.900-1.100 0-1.500-.700-2.800-.700-1.300 0-1.800.700-2.800.700-1.700 0-4.200-3.800-4.200-7 0-3.200 2-4.700 3.900-4.700 1.200 0 2.200.800 2.900.800.700 0 1.900-.900 3.400-.800 1 0 2.300.500 3 1.600-2.600 1.500-2.200 5.100.100 6.200z" fill="#3a3a34"/></svg><div style="left:160px;top:6.8px;width:15.5px;height:4.2px;background:linear-gradient(180deg,#f4f4f4,#d0d0d0);border:0.5px solid #7a7a7a;border-radius:1.2px;"></div><div style="left:165px;top:6.8px;width:5.3px;height:4.2px;background:#6a6a6a;"></div><div style="left:161.8px;top:8.2px;width:2px;height:1.5px;background:#777"></div><div style="left:172px;top:8.2px;width:2px;height:1.5px;background:#777"></div><div style="left:182px;top:6.6px;width:29.5px;height:4.6px;background:#fff;border:0.5px solid #888;border-radius:2.3px;"></div><div class="t" style="left:185px;top:7.8px;font-size:2.5px;color:#888;">Q- Search</div><div style="left:0px;top:15px;width:40.5px;height:89.5px;background:#e2e7ee;border-right:0.5px solid #a8a8a8;"></div><div class="t" style="left:1.5px;top:16.2px;font-size:2.4px;color:#6a7682;font-weight:bold;">LIBRARY</div><div style="left:0px;top:19.400000000000002px;width:40.5px;height:4px;background:linear-gradient(180deg,#7ea4d8,#5c88c8);"></div><div style="left:3.4px;top:20.2px;width:2.4px;height:2.4px;background:#fff;border-radius:0.5px;opacity:.85"></div><div class="t" style="left:7px;top:20.3px;font-size:2.6px;color:#fff;font-weight:bold;">Music</div><div style="left:3.4px;top:24.4px;width:2.4px;height:2.4px;background:#6a7ab0;border-radius:0.5px;opacity:.85"></div><div class="t" style="left:7px;top:24.5px;font-size:2.6px;color:#333;">Movies</div><div style="left:3.4px;top:28.4px;width:2.4px;height:2.4px;background:#5a78b8;border-radius:0.5px;opacity:.85"></div><div class="t" style="left:7px;top:28.5px;font-size:2.6px;color:#333;">TV Shows</div><div style="left:3.4px;top:32.6px;width:2.4px;height:2.4px;background:#8a6ab8;border-radius:0.5px;opacity:.85"></div><div class="t" style="left:7px;top:32.7px;font-size:2.6px;color:#333;">Podcasts</div><div style="left:3.4px;top:36.9px;width:2.4px;height:2.4px;background:#888;border-radius:0.5px;opacity:.85"></div><div class="t" style="left:7px;top:37px;font-size:2.6px;color:#333;">Radio</div><div class="t" style="left:1.5px;top:42.2px;font-size:2.4px;color:#6a7682;font-weight:bold;">STORE</div><div style="left:3.4px;top:46.0px;width:2.4px;height:2.4px;background:#5a9a5a;border-radius:0.5px;opacity:.85"></div><div class="t" style="left:7px;top:46.1px;font-size:2.6px;color:#333;">iTunes Store</div><div class="t" style="left:1.5px;top:51.3px;font-size:2.4px;color:#6a7682;font-weight:bold;">SHARED</div><div style="left:3.4px;top:55.199999999999996px;width:2.4px;height:2.4px;background:#b89050;border-radius:0.5px;opacity:.85"></div><div class="t" style="left:7px;top:55.3px;font-size:2.6px;color:#333;">Home Sharing</div><div class="t" style="left:1.5px;top:60.4px;font-size:2.4px;color:#6a7682;font-weight:bold;">GENIUS</div><div style="left:3.4px;top:64.30000000000001px;width:2.4px;height:2.4px;background:#8a7ab8;border-radius:0.5px;opacity:.85"></div><div class="t" style="left:7px;top:64.4px;font-size:2.6px;color:#333;">Genius</div><div class="t" style="left:1.5px;top:69.6px;font-size:2.4px;color:#6a7682;font-weight:bold;">PLAYLISTS</div><div style="left:3.4px;top:73.80000000000001px;width:2.4px;height:2.4px;background:#8a7ab8;border-radius:0.5px;opacity:.85"></div><div class="t" style="left:7px;top:73.9px;font-size:2.6px;color:#333;">iTunes DJ</div><div style="left:3.4px;top:77.80000000000001px;width:2.4px;height:2.4px;background:#7a8ac0;border-radius:0.5px;opacity:.85"></div><div class="t" style="left:7px;top:77.9px;font-size:2.6px;color:#333;">90’s Music</div><div style="left:3.4px;top:81.9px;width:2.4px;height:2.4px;background:#7a8ac0;border-radius:0.5px;opacity:.85"></div><div class="t" style="left:7px;top:82px;font-size:2.6px;color:#333;">Classical Music</div><div style="left:3.4px;top:86.0px;width:2.4px;height:2.4px;background:#7a8ac0;border-radius:0.5px;opacity:.85"></div><div class="t" style="left:7px;top:86.1px;font-size:2.6px;color:#333;">Music Videos</div><div style="left:3.4px;top:90.10000000000001px;width:2.4px;height:2.4px;background:#7a8ac0;border-radius:0.5px;opacity:.85"></div><div class="t" style="left:7px;top:90.2px;font-size:2.6px;color:#333;">My Top Rated</div><div style="left:3.4px;top:94.2px;width:2.4px;height:2.4px;background:#7a8ac0;border-radius:0.5px;opacity:.85"></div><div class="t" style="left:7px;top:94.3px;font-size:2.6px;color:#333;">Recently Added</div><div style="left:0px;top:98.8px;width:40.5px;height:5.7px;background:linear-gradient(180deg,#e4e4e4,#cccccc);border-top:0.5px solid #999;"></div><div class="t" style="left:4px;top:100.2px;font-size:2.8px;color:#444;">+</div><div class="t" style="left:12px;top:100.2px;font-size:2.8px;color:#444;">x</div><div class="t" style="left:20px;top:100.2px;font-size:2.8px;color:#444;">o</div><div class="t" style="left:28px;top:100.2px;font-size:2.8px;color:#444;">■</div><div style="left:40.5px;top:15px;width:173.8px;height:89.5px;background:#fff;"></div><div style="left:44.5px;top:18.4px;width:20.8px;height:20.8px;background:linear-gradient(180deg,#fcfcfc,#e9ebed);border:0.5px solid #cfd2d6;border-radius:0.6px;box-shadow:0 0.5px 0.8px rgba(0,0,0,.18);"></div><svg style="left:49.7px;top:23.0px" width="11" height="12" viewBox="0 0 22 24"><path d="M7 4l12-3v14.500a3.600 3 0 11-2-2.700V6l-8 2v10a3.600 3 0 11-2-2.700z" fill="#c9cdd2"/></svg><div class="t" style="left:41.0px;top:41.9px;font-size:2.5px;color:#222;width:28.3px;text-align:center;overflow:hidden;font-weight:bold;">Black Sabbath – P…</div><div class="t" style="left:41.0px;top:44.8px;font-size:2.5px;color:#666;width:28.3px;text-align:center;">Album 1</div><div style="left:73.5px;top:18.4px;width:20.8px;height:20.8px;background:linear-gradient(180deg,#fcfcfc,#e9ebed);border:0.5px solid #cfd2d6;border-radius:0.6px;box-shadow:0 0.5px 0.8px rgba(0,0,0,.18);"></div><svg style="left:78.7px;top:23.0px" width="11" height="12" viewBox="0 0 22 24"><path d="M7 4l12-3v14.500a3.600 3 0 11-2-2.700V6l-8 2v10a3.600 3 0 11-2-2.700z" fill="#c9cdd2"/></svg><div class="t" style="left:70.0px;top:41.9px;font-size:2.5px;color:#222;width:28.3px;text-align:center;overflow:hidden;font-weight:bold;">Unknown Artist</div><div class="t" style="left:70.0px;top:44.8px;font-size:2.5px;color:#666;width:28.3px;text-align:center;">1 item</div><div style="left:102.3px;top:18.4px;width:20.8px;height:20.8px;background:radial-gradient(circle 5px at 62% 35%,#58d8c8,rgba(0,0,0,0) 100%),radial-gradient(circle 6px at 35% 65%,#e8d840,rgba(0,0,0,0) 100%),radial-gradient(circle 6px at 70% 72%,#d850b0,rgba(0,0,0,0) 100%),linear-gradient(135deg,#8a3a9a,#4a3a8a 45%,#b84898);border:0.5px solid #666;"></div><div style="left:104.3px;top:20.4px;width:17px;height:3px;background:#e8e8f0;opacity:.6"></div><div class="t" style="left:98.8px;top:41.9px;font-size:2.5px;color:#222;width:28.3px;text-align:center;overflow:hidden;font-weight:bold;">Nine Days of Color</div><div class="t" style="left:98.8px;top:44.8px;font-size:2.5px;color:#666;width:28.3px;text-align:center;">Mix 16 Tracks</div><div style="left:131.5px;top:18.4px;width:20.8px;height:20.8px;background:linear-gradient(180deg,#fcfcfc,#e9ebed);border:0.5px solid #cfd2d6;border-radius:0.6px;box-shadow:0 0.5px 0.8px rgba(0,0,0,.18);"></div><svg style="left:136.7px;top:23.0px" width="11" height="12" viewBox="0 0 22 24"><path d="M7 4l12-3v14.500a3.600 3 0 11-2-2.700V6l-8 2v10a3.600 3 0 11-2-2.700z" fill="#c9cdd2"/></svg><div class="t" style="left:128.0px;top:41.9px;font-size:2.5px;color:#222;width:28.3px;text-align:center;overflow:hidden;font-weight:bold;">Unknown DVD/CD…</div><div class="t" style="left:128.0px;top:44.8px;font-size:2.5px;color:#666;width:28.3px;text-align:center;">Album</div><div style="left:160.3px;top:18.4px;width:20.8px;height:20.8px;background:radial-gradient(ellipse 5px 6px at 50% 42%,#e8c050,rgba(0,0,0,0) 100%),radial-gradient(ellipse 9px 7px at 50% 90%,#b87830,rgba(0,0,0,0) 100%),linear-gradient(180deg,#7a2a20,#5a1a18 55%,#8a4a28);border:0.5px solid #555;"></div><div class="t" style="left:156.8px;top:41.9px;font-size:2.5px;color:#222;width:28.3px;text-align:center;overflow:hidden;font-weight:bold;">Greatest Hits and…</div><div class="t" style="left:156.8px;top:44.8px;font-size:2.5px;color:#666;width:28.3px;text-align:center;">Vol. 1</div><div style="left:189.2px;top:18.4px;width:20.8px;height:20.8px;background:linear-gradient(180deg,#fcfcfc,#e9ebed);border:0.5px solid #cfd2d6;border-radius:0.6px;box-shadow:0 0.5px 0.8px rgba(0,0,0,.18);"></div><svg style="left:194.39999999999998px;top:23.0px" width="11" height="12" viewBox="0 0 22 24"><path d="M7 4l12-3v14.500a3.600 3 0 11-2-2.700V6l-8 2v10a3.600 3 0 11-2-2.700z" fill="#c9cdd2"/></svg><div class="t" style="left:185.7px;top:41.9px;font-size:2.5px;color:#222;width:28.3px;text-align:center;overflow:hidden;font-weight:bold;">Mixtape</div><div style="left:44.5px;top:52.4px;width:20.8px;height:20.8px;background:linear-gradient(180deg,#fcfcfc,#e9ebed);border:0.5px solid #cfd2d6;border-radius:0.6px;box-shadow:0 0.5px 0.8px rgba(0,0,0,.18);"></div><svg style="left:49.7px;top:57.0px" width="11" height="12" viewBox="0 0 22 24"><path d="M7 4l12-3v14.500a3.600 3 0 11-2-2.700V6l-8 2v10a3.600 3 0 11-2-2.700z" fill="#c9cdd2"/></svg><div class="t" style="left:41.0px;top:75.9px;font-size:2.5px;color:#222;width:28.3px;text-align:center;overflow:hidden;font-weight:bold;">Guitar Mix 2011</div><div style="left:40.5px;top:104.5px;width:173.8px;height:5px;background:linear-gradient(180deg,#e2e2e2,#c6c6c6);border-top:0.5px solid #8a8a8a;"></div><div style="left:0px;top:104.5px;width:40.5px;height:5px;background:#c9c9c9;"></div><div class="t" style="left:88px;top:105.7px;font-size:2.6px;color:#333;">7 albums, 8.2 hours, 691.2 MB</div><div style="left:196px;top:105.4px;width:6px;height:3px;background:#eee;border:0.4px solid #b0b0b0;border-radius:1px;"></div><div style="left:204px;top:105.4px;width:6px;height:3px;background:#eee;border:0.4px solid #b0b0b0;border-radius:1px;"></div></div>
<!-- bluewin -->
<div class="w" style="left:529.2px;top:494.4px;width:104.3px;height:75.6px;background:#b5d3ef;"><div style="left:0px;top:0px;width:104.3px;height:4.2px;background:linear-gradient(180deg,#c8d8e8,#b4c8dc);"></div><div style="left:1.8px;top:1.1px;width:2px;height:2px;border-radius:50%;background:#a8b8c8;"></div><div style="left:5.0px;top:1.1px;width:2px;height:2px;border-radius:50%;background:#a8b8c8;"></div><div style="left:8.200000000000001px;top:1.1px;width:2px;height:2px;border-radius:50%;background:#a8b8c8;"></div><div class="t" style="left:33px;top:1px;font-size:2.6px;color:#5a6a7a;">Terminal — bash — 80×24</div><div class="t" style="left:1.5px;top:5.6px;font-size:2.6px;color:#3a566c;font-family:'Liberation Mono',monospace;letter-spacing:-0.25px;">Last&nbsp;login:&nbsp;Wed&nbsp;Jan&nbsp;&nbsp;4&nbsp;11:12:05&nbsp;on&nbsp;ttys000</div><div class="t" style="left:1.5px;top:8.6px;font-size:2.6px;color:#3a566c;font-family:'Liberation Mono',monospace;letter-spacing:-0.25px;">mac:~&nbsp;user$&nbsp;cd&nbsp;Sites</div><div class="t" style="left:1.5px;top:11.6px;font-size:2.6px;color:#3a566c;font-family:'Liberation Mono',monospace;letter-spacing:-0.25px;">mac:Sites&nbsp;user$&nbsp;ls&nbsp;-l&nbsp;project</div><div class="t" style="left:1.5px;top:14.6px;font-size:2.6px;color:#3a566c;font-family:'Liberation Mono',monospace;letter-spacing:-0.25px;">total&nbsp;24</div><div class="t" style="left:1.5px;top:17.6px;font-size:2.6px;color:#3a566c;font-family:'Liberation Mono',monospace;letter-spacing:-0.25px;">drwxr-xr-x&nbsp;&nbsp;12&nbsp;user&nbsp;&nbsp;staff&nbsp;&nbsp;&nbsp;408&nbsp;Jan&nbsp;&nbsp;3&nbsp;19:22&nbsp;app</div><div class="t" style="left:1.5px;top:20.6px;font-size:2.6px;color:#3a566c;font-family:'Liberation Mono',monospace;letter-spacing:-0.25px;">mac:Sites&nbsp;user$&nbsp;tail&nbsp;-f&nbsp;/var/log/apache2/error_log&nbsp;|&nbsp;grep&nbsp;-i&nbsp;php&nbsp;warning</div><div class="t" style="left:1.5px;top:23.6px;font-size:2.6px;color:#3a566c;font-family:'Liberation Mono',monospace;letter-spacing:-0.25px;">mac:Sites&nbsp;user$&nbsp;svn&nbsp;up</div></div>
<!-- orangewin -->
<div class="w" style="left:202.8px;top:422.1px;width:57.6px;height:85.6px;background:#e6e6e6;"><div style="left:0px;top:0px;width:57.6px;height:4px;background:linear-gradient(180deg,#ececec,#d2d2d2);"></div><div style="left:1.6px;top:0.9px;width:2px;height:2px;border-radius:50%;background:#c2c2c2;"></div><div style="left:4.6px;top:0.9px;width:2px;height:2px;border-radius:50%;background:#c2c2c2;"></div><div style="left:7.6px;top:0.9px;width:2px;height:2px;border-radius:50%;background:#c2c2c2;"></div><div class="t" style="left:13px;top:0.9px;font-size:2.4px;color:#555;">btn_orange.psd @ 100% (RGB/8)</div><div style="left:0px;top:4px;width:57.6px;height:3.2px;background:#e8e8e8;border-bottom:0.5px solid #999;"></div><div style="left:0px;top:7.2px;width:2.6px;height:75.6px;background:#e8e8e8;border-right:0.5px solid #999;"></div><div style="left:2.6px;top:7.2px;width:52.7px;height:75.6px;background:#bdbdbd;"></div><div style="left:25.3px;top:21.4px;width:7.2px;height:47px;background:linear-gradient(180deg,#ee6c12 0%,#f4801e 10%,#fb9a3c 45%,#f88a28 75%,#ee7414 100%);"></div><div style="left:55.3px;top:7.2px;width:2.3px;height:75.6px;background:#ececec;border-left:0.5px solid #bbb;"></div><div style="left:0px;top:82.8px;width:57.6px;height:2.8px;background:#e4e4e4;border-top:0.5px solid #aaa;"></div><div style="left:3px;top:83.6px;width:8px;height:1.3px;background:#777;"></div><div style="left:14px;top:83.4px;width:2px;height:1.6px;border:0.4px solid #555;"></div></div>
<!-- syspref -->
<div class="w" style="left:63.6px;top:451.5px;width:136.8px;height:112.3px;background:#e8e8e8;"><div style="left:0px;top:0px;width:136.8px;height:11.4px;background:linear-gradient(180deg,#eeeeee 0%,#dedede 40%,#cccccc 100%);border-bottom:0.5px solid #9a9a9a;"></div><div style="left:2.0px;top:1.2px;width:2.2px;height:2.2px;border-radius:50%;background:#c2c2c2;"></div><div style="left:5.4px;top:1.2px;width:2.2px;height:2.2px;border-radius:50%;background:#c2c2c2;"></div><div style="left:8.8px;top:1.2px;width:2.2px;height:2.2px;border-radius:50%;background:#c2c2c2;"></div><div class="t" style="left:62px;top:1px;font-size:2.8px;color:#666;">Sharing</div><div style="left:2.5px;top:5.4px;width:9.5px;height:4.2px;background:linear-gradient(180deg,#fafafa,#dedede);border:0.4px solid #aaa;border-radius:1.2px;"></div><div class="t" style="left:4px;top:6.5px;font-size:2.4px;color:#555;">◄  ►</div><div style="left:14px;top:5.4px;width:15px;height:4.2px;background:linear-gradient(180deg,#fafafa,#dedede);border:0.4px solid #aaa;border-radius:1.2px;"></div><div class="t" style="left:16px;top:6.5px;font-size:2.6px;color:#222;">Show All</div><div style="left:107px;top:5.6px;width:27px;height:4px;background:#fff;border:0.4px solid #b0b0b0;border-radius:2px;"></div><div style="left:104.5px;top:6px;width:2.2px;height:2.2px;border:0.6px solid #444;border-radius:50%;"></div><div class="t" style="left:9.5px;top:17.3px;font-size:2.9px;color:#222;">Computer Name:</div><div style="left:33.5px;top:16.3px;width:92px;height:4.8px;background:#fff;border:0.4px solid #c8c8c8;"></div><div class="t" style="left:35px;top:17.4px;font-size:2.9px;color:#222;">K’s iMac</div><div class="t" style="left:33.5px;top:22.6px;font-size:2.6px;color:#333;width:76px;overflow:hidden;">Computers on your local network can access your computer at: Ks-iMac</div><div class="t" style="left:33.5px;top:25.4px;font-size:2.6px;color:#333;">.local</div><div style="left:113.5px;top:22.4px;width:12px;height:4.2px;background:linear-gradient(180deg,#fafafa,#dedede);border:0.4px solid #aaa;border-radius:2px;"></div><div class="t" style="left:115.6px;top:23.5px;font-size:2.6px;color:#222;">Edit…</div><div style="left:0px;top:31.4px;width:136.8px;height:0.5px;background:#c0c0c0;"></div><div style="left:5px;top:35.4px;width:39.5px;height:58.8px;background:#fff;border:0.4px solid #cfcfcf;"></div><div style="left:8px;top:37.62px;width:2.2px;height:2.2px;background:#fff;border:0.4px solid #888;"></div><div class="t" style="left:14.5px;top:37.62px;font-size:2.8px;color:#111;">DVD or CD Sharing</div><div style="left:8px;top:41.64px;width:2.2px;height:2.2px;background:#fff;border:0.4px solid #888;"></div><div class="t" style="left:7.8px;top:41.04px;font-size:2.8px;color:#222;">√</div><div class="t" style="left:14.5px;top:41.64px;font-size:2.8px;color:#111;">Screen Sharing</div><div style="left:8px;top:45.660000000000004px;width:2.2px;height:2.2px;background:#fff;border:0.4px solid #888;"></div><div class="t" style="left:7.8px;top:45.06px;font-size:2.8px;color:#222;">√</div><div class="t" style="left:14.5px;top:45.660000000000004px;font-size:2.8px;color:#111;">File Sharing</div><div style="left:8px;top:49.68px;width:2.2px;height:2.2px;background:#fff;border:0.4px solid #888;"></div><div class="t" style="left:14.5px;top:49.68px;font-size:2.8px;color:#111;">Printer Sharing</div><div style="left:8px;top:53.699999999999996px;width:2.2px;height:2.2px;background:#fff;border:0.4px solid #888;"></div><div class="t" style="left:14.5px;top:53.699999999999996px;font-size:2.8px;color:#111;">Web Sharing</div><div style="left:8px;top:57.72px;width:2.2px;height:2.2px;background:#fff;border:0.4px solid #888;"></div><div class="t" style="left:14.5px;top:57.72px;font-size:2.8px;color:#111;">Remote Login</div><div style="left:8px;top:61.74px;width:2.2px;height:2.2px;background:#fff;border:0.4px solid #888;"></div><div class="t" style="left:14.5px;top:61.74px;font-size:2.8px;color:#111;">Remote Management</div><div style="left:8px;top:65.75999999999999px;width:2.2px;height:2.2px;background:#fff;border:0.4px solid #888;"></div><div class="t" style="left:14.5px;top:65.75999999999999px;font-size:2.8px;color:#111;">Remote Apple Events</div><div style="left:8px;top:69.77999999999999px;width:2.2px;height:2.2px;background:#fff;border:0.4px solid #888;"></div><div class="t" style="left:14.5px;top:69.77999999999999px;font-size:2.8px;color:#111;">Xgrid Sharing</div><div style="left:5.5px;top:73.19999999999999px;width:38.5px;height:3.8px;background:#c4c8ce;"></div><div style="left:8px;top:73.79999999999998px;width:2.2px;height:2.2px;background:#fff;border:0.4px solid #888;"></div><div class="t" style="left:7.8px;top:73.19999999999999px;font-size:2.8px;color:#222;">√</div><div class="t" style="left:14.5px;top:73.79999999999998px;font-size:2.8px;color:#111;">Internet Sharing</div><div style="left:8px;top:77.82px;width:2.2px;height:2.2px;background:#fff;border:0.4px solid #888;"></div><div class="t" style="left:7.8px;top:77.22px;font-size:2.8px;color:#222;">√</div><div class="t" style="left:14.5px;top:77.82px;font-size:2.8px;color:#111;">Bluetooth Sharing</div><div style="left:47px;top:34.8px;width:87.5px;height:59.6px;background:#e3e3e3;border-radius:1.5px;"></div><div style="left:49.5px;top:37.6px;width:2.4px;height:2.4px;background:#e0a030;border-radius:50%;"></div><div class="t" style="left:53.5px;top:37.6px;font-size:2.8px;color:#111;font-weight:bold;width:70px;overflow:hidden;">Internet Sharing: On</div><div class="t" style="left:53.5px;top:37.6px;font-size:2.8px;color:#111;font-weight:bold;width:72px;overflow:hidden;">Internet Sharing: On — sharing your connection to the</div><div class="t" style="left:49.5px;top:42px;font-size:2.6px;color:#333;width:78px;overflow:hidden;">Internet Sharing allows other computers to share your connection to the</div><div class="t" style="left:49.5px;top:44.8px;font-size:2.6px;color:#333;">Internet.</div><div class="t" style="left:49.5px;top:52.6px;font-size:2.8px;color:#333;">Share your connection from:</div><div style="left:86px;top:51.4px;width:34px;height:4.4px;background:#eee;border:0.5px solid #aaa;border-radius:1.5px;"></div><div class="t" style="left:88px;top:52.6px;font-size:2.6px;color:#999;">Ethernet</div><div class="t" style="left:60px;top:59.4px;font-size:2.8px;color:#333;">To computers using:</div><div style="left:86.5px;top:57.4px;width:46px;height:30.8px;background:#fff;border:0.4px solid #c8c8c8;"></div><div style="left:86.5px;top:57.4px;width:46px;height:3.4px;background:#ececec;border-bottom:0.5px solid #bbb;"></div><div class="t" style="left:89px;top:58px;font-size:2.5px;color:#999;">On   Ports</div><div style="left:87px;top:61.4px;width:45px;height:3.6px;background:#d4d4d4;"></div><div style="left:89.5px;top:61.9px;width:2px;height:2px;border:0.4px solid #aaa;"></div><div class="t" style="left:95px;top:61.9px;font-size:2.6px;color:#999;">AirPort</div><div style="left:89.5px;top:65.8px;width:2px;height:2px;border:0.4px solid #aaa;"></div><div class="t" style="left:95px;top:65.8px;font-size:2.6px;color:#999;">FireWire</div><svg style="left:5px;top:101.500px" width="5" height="6.500" viewBox="0 0 10 13"><rect x="1" y="5" width="8" height="7" fill="#c87828"/><path d="M3 5V3.500a2 2 0 014 0" stroke="#888" stroke-width="1.200" fill="none"/></svg><div class="t" style="left:12px;top:103.2px;font-size:2.8px;color:#333;">Click the lock to prevent further changes.</div><div style="left:127.5px;top:101.6px;width:5px;height:5px;border:0.5px solid #888;border-radius:50%;background:#f0f0f0;"></div><div class="t" style="left:129px;top:102.7px;font-size:3px;color:#555;">?</div></div>
<!-- dock -->
<svg style="left:95px;top:580px" width="565" height="24" viewBox="95 580 565 24"><defs><linearGradient id="sh" x1="0" y1="0" x2="0" y2="1"><stop offset="0" stop-color="#626a61" stop-opacity="0.92"/><stop offset="0.3" stop-color="#858b84" stop-opacity="0.94"/><stop offset="0.7" stop-color="#a9ada8" stop-opacity="0.96"/><stop offset="1" stop-color="#b8bcb7"/></linearGradient></defs><path d="M112.500 585.200H640.500L648.300 600.300H104.800z" fill="url(#sh)"/><path d="M112.500 585.200H640.500" stroke="#c4cac2" stroke-width="0.6" opacity=".8"/><rect x="104.800" y="600.300" width="543.500" height="1.300" fill="#d6d9d5"/><rect x="104.800" y="601.600" width="543.500" height="2.400" fill="#8b908a"/></svg>
<svg style="left:117.0px;top:577.4px" width="18" height="18" viewBox="0 0 32 32"><rect x="1" y="2" width="30" height="28" rx="3" fill="#c9daf2"/><path d="M1 5a3 3 0 013-3h13c-3 8-4 14-3 18h4c0 4 0 7 1 10H4a3 3 0 01-3-3z" fill="#4f86d8"/><path d="M9 10v4M23 10v4" stroke="#1a2a4a" stroke-width="2"/><path d="M7 21c5 4 13 4 18 0" stroke="#1a2a4a" stroke-width="1.600" fill="none"/></svg>
<svg style="left:117.0px;top:595.4px;opacity:.22;transform:scaleY(-1);transform-origin:50% 0;top:612.4px" width="18" height="7.2" viewBox="0 0 32 12.800" preserveAspectRatio="none"><g transform="translate(0,-19.200)"><rect x="1" y="2" width="30" height="28" rx="3" fill="#c9daf2"/><path d="M1 5a3 3 0 013-3h13c-3 8-4 14-3 18h4c0 4 0 7 1 10H4a3 3 0 01-3-3z" fill="#4f86d8"/><path d="M9 10v4M23 10v4" stroke="#1a2a4a" stroke-width="2"/><path d="M7 21c5 4 13 4 18 0" stroke="#1a2a4a" stroke-width="1.600" fill="none"/></g></svg>
<svg style="left:137.7px;top:577.4px" width="18" height="18" viewBox="0 0 32 32"><circle cx="16" cy="16" r="14.500" fill="#dd4b3e"/><path d="M16 16L3.500 8.800A14.500 14.500 0 0016 30.500l6.300-10.900z" fill="#1da362"/><path d="M16 16l6.300 3.600L16 30.500A14.500 14.500 0 0028.600 8.800H16z" fill="#ffd24a"/><path d="M16 16L3.500 8.800A14.500 14.500 0 0128.600 8.800H16z" fill="#dd4b3e"/><circle cx="16" cy="16" r="6.800" fill="#fff"/><circle cx="16" cy="16" r="5.400" fill="#4a8af4"/></svg>
<svg style="left:137.7px;top:595.4px;opacity:.22;transform:scaleY(-1);transform-origin:50% 0;top:612.4px" width="18" height="7.2" viewBox="0 0 32 12.800" preserveAspectRatio="none"><g transform="translate(0,-19.200)"><circle cx="16" cy="16" r="14.500" fill="#dd4b3e"/><path d="M16 16L3.500 8.800A14.500 14.500 0 0016 30.500l6.300-10.900z" fill="#1da362"/><path d="M16 16l6.300 3.600L16 30.500A14.500 14.500 0 0028.600 8.800H16z" fill="#ffd24a"/><path d="M16 16L3.500 8.800A14.500 14.500 0 0128.600 8.800H16z" fill="#dd4b3e"/><circle cx="16" cy="16" r="6.800" fill="#fff"/><circle cx="16" cy="16" r="5.400" fill="#4a8af4"/></g></svg>
<svg style="left:158.3px;top:577.4px" width="18" height="18" viewBox="0 0 32 32"><g transform="rotate(-6 16 16)"><rect x="4" y="3" width="24" height="26" fill="#e8ecf4" stroke="#8a98b0" stroke-width="1"/><rect x="6" y="5" width="20" height="22" fill="#7a9cd0"/><path d="M11 27c0-8 3-12 6-14 2 0 3 2 3 4l-2 10z" fill="#3a4a5a"/><circle cx="17.500" cy="11.500" r="2.500" fill="#3a4a5a"/></g></svg>
<svg style="left:158.3px;top:595.4px;opacity:.22;transform:scaleY(-1);transform-origin:50% 0;top:612.4px" width="18" height="7.2" viewBox="0 0 32 12.800" preserveAspectRatio="none"><g transform="translate(0,-19.200)"><g transform="rotate(-6 16 16)"><rect x="4" y="3" width="24" height="26" fill="#e8ecf4" stroke="#8a98b0" stroke-width="1"/><rect x="6" y="5" width="20" height="22" fill="#7a9cd0"/><path d="M11 27c0-8 3-12 6-14 2 0 3 2 3 4l-2 10z" fill="#3a4a5a"/><circle cx="17.500" cy="11.500" r="2.500" fill="#3a4a5a"/></g></g></svg>
<svg style="left:179.7px;top:577.4px" width="18" height="18" viewBox="0 0 32 32"><circle cx="16" cy="16" r="14.500" fill="#c9ced6" stroke="#8a9098" stroke-width="1"/><circle cx="16" cy="16" r="11.500" fill="#3f86d8"/><circle cx="16" cy="14" r="8" fill="#6aa8ec" opacity=".6"/><path d="M23 8l-5.500 9.500-3-3z" fill="#e8483a"/><path d="M9 24l5.500-9.500 3 3z" fill="#f4f4f4"/></svg>
<svg style="left:179.7px;top:595.4px;opacity:.22;transform:scaleY(-1);transform-origin:50% 0;top:612.4px" width="18" height="7.2" viewBox="0 0 32 12.800" preserveAspectRatio="none"><g transform="translate(0,-19.200)"><circle cx="16" cy="16" r="14.500" fill="#c9ced6" stroke="#8a9098" stroke-width="1"/><circle cx="16" cy="16" r="11.500" fill="#3f86d8"/><circle cx="16" cy="14" r="8" fill="#6aa8ec" opacity=".6"/><path d="M23 8l-5.500 9.500-3-3z" fill="#e8483a"/><path d="M9 24l5.500-9.500 3 3z" fill="#f4f4f4"/></g></svg>
<svg style="left:198.9px;top:577.4px" width="18" height="18" viewBox="0 0 32 32"><circle cx="16" cy="16" r="14.500" fill="#e4f0e0" stroke="#9ab89a" stroke-width="1"/><circle cx="16" cy="16" r="12.200" fill="#3fa83a"/><path d="M11 9v9c0 2 1.500 3.200 3.500 3.200S18.500 20 19 18.500V9M19 18.500c0 2 1 2.800 3 2.600M11 18v7" stroke="#fff" stroke-width="2.800" fill="none" stroke-linecap="round"/></svg>
<svg style="left:198.9px;top:595.4px;opacity:.22;transform:scaleY(-1);transform-origin:50% 0;top:612.4px" width="18" height="7.2" viewBox="0 0 32 12.800" preserveAspectRatio="none"><g transform="translate(0,-19.200)"><circle cx="16" cy="16" r="14.500" fill="#e4f0e0" stroke="#9ab89a" stroke-width="1"/><circle cx="16" cy="16" r="12.200" fill="#3fa83a"/><path d="M11 9v9c0 2 1.500 3.200 3.500 3.200S18.500 20 19 18.500V9M19 18.500c0 2 1 2.800 3 2.600M11 18v7" stroke="#fff" stroke-width="2.800" fill="none" stroke-linecap="round"/></g></svg>
<svg style="left:220.8px;top:577.4px" width="18" height="18" viewBox="0 0 32 32"><path d="M3 27C3 12 12 4 30 3c0 16-8 25-22 25-2 0-4 0-5-1z" fill="#4cb83a"/><path d="M3 27C12 20 20 13 29 4" stroke="#2a8a24" stroke-width="1.400" fill="none"/><path d="M3 27C3 12 12 4 30 3 18 8 8 16 3 27z" fill="#6ed04e"/></svg>
<svg style="left:220.8px;top:595.4px;opacity:.22;transform:scaleY(-1);transform-origin:50% 0;top:612.4px" width="18" height="7.2" viewBox="0 0 32 12.800" preserveAspectRatio="none"><g transform="translate(0,-19.200)"><path d="M3 27C3 12 12 4 30 3c0 16-8 25-22 25-2 0-4 0-5-1z" fill="#4cb83a"/><path d="M3 27C12 20 20 13 29 4" stroke="#2a8a24" stroke-width="1.400" fill="none"/><path d="M3 27C3 12 12 4 30 3 18 8 8 16 3 27z" fill="#6ed04e"/></g></svg>
<svg style="left:240.2px;top:577.4px" width="18" height="18" viewBox="0 0 32 32"><g transform="rotate(-4 16 16)"><rect x="3" y="5" width="26" height="24" rx="2" fill="#f6f6f6" stroke="#9a9a9a" stroke-width="1"/><rect x="3" y="5" width="26" height="8" rx="2" fill="#d8423a"/><rect x="7" y="2" width="2.500" height="6" rx="1" fill="#777"/><rect x="22" y="2" width="2.500" height="6" rx="1" fill="#777"/><text x="16" y="26" font-size="13" font-weight="bold" text-anchor="middle" font-family="Liberation Sans" fill="#222">12</text></g></svg>
<svg style="left:240.2px;top:595.4px;opacity:.22;transform:scaleY(-1);transform-origin:50% 0;top:612.4px" width="18" height="7.2" viewBox="0 0 32 12.800" preserveAspectRatio="none"><g transform="translate(0,-19.200)"><g transform="rotate(-4 16 16)"><rect x="3" y="5" width="26" height="24" rx="2" fill="#f6f6f6" stroke="#9a9a9a" stroke-width="1"/><rect x="3" y="5" width="26" height="8" rx="2" fill="#d8423a"/><rect x="7" y="2" width="2.500" height="6" rx="1" fill="#777"/><rect x="22" y="2" width="2.500" height="6" rx="1" fill="#777"/><text x="16" y="26" font-size="13" font-weight="bold" text-anchor="middle" font-family="Liberation Sans" fill="#222">12</text></g></g></svg>
<svg style="left:261.7px;top:577.4px" width="18" height="18" viewBox="0 0 32 32"><rect x="2" y="4" width="28" height="26" rx="3" fill="#2f62b8"/><rect x="2" y="19" width="28" height="11" rx="3" fill="#244c96"/><rect x="6" y="6" width="20" height="15" rx="1.500" fill="#f4f6fa"/><path d="M10 13l4 4 7-9" stroke="#1a2a4a" stroke-width="2.800" fill="none"/><rect x="11" y="23" width="10" height="3" rx="1" fill="#9ab4e0"/></svg>
<svg style="left:261.7px;top:595.4px;opacity:.22;transform:scaleY(-1);transform-origin:50% 0;top:612.4px" width="18" height="7.2" viewBox="0 0 32 12.800" preserveAspectRatio="none"><g transform="translate(0,-19.200)"><rect x="2" y="4" width="28" height="26" rx="3" fill="#2f62b8"/><rect x="2" y="19" width="28" height="11" rx="3" fill="#244c96"/><rect x="6" y="6" width="20" height="15" rx="1.500" fill="#f4f6fa"/><path d="M10 13l4 4 7-9" stroke="#1a2a4a" stroke-width="2.800" fill="none"/><rect x="11" y="23" width="10" height="3" rx="1" fill="#9ab4e0"/></g></svg>
<svg style="left:282.4px;top:577.4px" width="18" height="18" viewBox="0 0 32 32"><ellipse cx="16" cy="19" rx="13" ry="11" fill="#5cb82e"/><circle cx="16" cy="11" r="8" fill="#6cc83a"/><path d="M9 14c4-2 10-2 14 0-2 4-12 4-14 0z" fill="#f0b030"/><circle cx="12.500" cy="9" r="1.600" fill="#111"/><circle cx="19.500" cy="9" r="1.600" fill="#111"/><ellipse cx="16" cy="24" rx="8" ry="4" fill="#7ad848" opacity=".6"/></svg>
<svg style="left:282.4px;top:595.4px;opacity:.22;transform:scaleY(-1);transform-origin:50% 0;top:612.4px" width="18" height="7.2" viewBox="0 0 32 12.800" preserveAspectRatio="none"><g transform="translate(0,-19.200)"><ellipse cx="16" cy="19" rx="13" ry="11" fill="#5cb82e"/><circle cx="16" cy="11" r="8" fill="#6cc83a"/><path d="M9 14c4-2 10-2 14 0-2 4-12 4-14 0z" fill="#f0b030"/><circle cx="12.500" cy="9" r="1.600" fill="#111"/><circle cx="19.500" cy="9" r="1.600" fill="#111"/><ellipse cx="16" cy="24" rx="8" ry="4" fill="#7ad848" opacity=".6"/></g></svg>
<svg style="left:303.8px;top:577.4px" width="18" height="18" viewBox="0 0 32 32"><circle cx="16" cy="16" r="14.500" fill="#dfe8f2" stroke="#8a9ab0" stroke-width="1"/><circle cx="16" cy="16" r="12.500" fill="#a8cdf4"/><path d="M16 16L4 12A12.500 12.500 0 0116 3.500z" fill="#e4f0fc" opacity=".8"/><path d="M16 16l12 4a12.500 12.500 0 01-12 8.500z" fill="#78aee8" opacity=".8"/><circle cx="16" cy="16" r="3" fill="#eef4fa" stroke="#8aa8d0" stroke-width=".6"/><path d="M16 6l9-2.500V18a3.600 3 0 11-2.200-2.700V8.200l-4.600 1.300V21a3.600 3 0 11-2.200-2.700z" fill="#1a5ac8"/></svg>
<svg style="left:303.8px;top:595.4px;opacity:.22;transform:scaleY(-1);transform-origin:50% 0;top:612.4px" width="18" height="7.2" viewBox="0 0 32 12.800" preserveAspectRatio="none"><g transform="translate(0,-19.200)"><circle cx="16" cy="16" r="14.500" fill="#dfe8f2" stroke="#8a9ab0" stroke-width="1"/><circle cx="16" cy="16" r="12.500" fill="#a8cdf4"/><path d="M16 16L4 12A12.500 12.500 0 0116 3.500z" fill="#e4f0fc" opacity=".8"/><path d="M16 16l12 4a12.500 12.500 0 01-12 8.500z" fill="#78aee8" opacity=".8"/><circle cx="16" cy="16" r="3" fill="#eef4fa" stroke="#8aa8d0" stroke-width=".6"/><path d="M16 6l9-2.500V18a3.600 3 0 11-2.200-2.700V8.200l-4.600 1.300V21a3.600 3 0 11-2.200-2.700z" fill="#1a5ac8"/></g></svg>
<svg style="left:322.7px;top:577.4px" width="18" height="18" viewBox="0 0 32 32"><rect x="2" y="3" width="28" height="26" rx="3" fill="#8a8f96" stroke="#5a5f66" stroke-width="1"/><rect x="4" y="5" width="24" height="22" rx="2" fill="#b4b9c0"/><circle cx="16" cy="16" r="8.500" fill="#555a62"/><circle cx="16" cy="16" r="8.500" fill="none" stroke="#3a3f46" stroke-width="3" stroke-dasharray="3 2.300"/><circle cx="16" cy="16" r="3.600" fill="#c4c9d0"/></svg>
<svg style="left:322.7px;top:595.4px;opacity:.22;transform:scaleY(-1);transform-origin:50% 0;top:612.4px" width="18" height="7.2" viewBox="0 0 32 12.800" preserveAspectRatio="none"><g transform="translate(0,-19.200)"><rect x="2" y="3" width="28" height="26" rx="3" fill="#8a8f96" stroke="#5a5f66" stroke-width="1"/><rect x="4" y="5" width="24" height="22" rx="2" fill="#b4b9c0"/><circle cx="16" cy="16" r="8.500" fill="#555a62"/><circle cx="16" cy="16" r="8.500" fill="none" stroke="#3a3f46" stroke-width="3" stroke-dasharray="3 2.300"/><circle cx="16" cy="16" r="3.600" fill="#c4c9d0"/></g></svg>
<svg style="left:342.9px;top:577.4px" width="18" height="18" viewBox="0 0 32 32"><path d="M2 27c0-9 1-16 4-16s3 6 4 10c1-6 2-12 5-12s3 6 4 12c1-4 2-10 5-10s6 7 6 16c-4 3-24 3-28 0z" fill="#3f8ad8"/><circle cx="6" cy="8" r="3" fill="#5aa0e8"/><circle cx="15" cy="6" r="3.400" fill="#5aa0e8"/><circle cx="24" cy="8" r="3" fill="#5aa0e8"/><path d="M4 24c6 3 18 3 24 0" stroke="#8cc0f4" stroke-width="1.400" fill="none"/></svg>
<svg style="left:342.9px;top:595.4px;opacity:.22;transform:scaleY(-1);transform-origin:50% 0;top:612.4px" width="18" height="7.2" viewBox="0 0 32 12.800" preserveAspectRatio="none"><g transform="translate(0,-19.200)"><path d="M2 27c0-9 1-16 4-16s3 6 4 10c1-6 2-12 5-12s3 6 4 12c1-4 2-10 5-10s6 7 6 16c-4 3-24 3-28 0z" fill="#3f8ad8"/><circle cx="6" cy="8" r="3" fill="#5aa0e8"/><circle cx="15" cy="6" r="3.400" fill="#5aa0e8"/><circle cx="24" cy="8" r="3" fill="#5aa0e8"/><path d="M4 24c6 3 18 3 24 0" stroke="#8cc0f4" stroke-width="1.400" fill="none"/></g></svg>
<svg style="left:364.3px;top:577.4px" width="18" height="18" viewBox="0 0 32 32"><rect x="2" y="4" width="28" height="24" rx="2" fill="#c4c4c4" stroke="#777" stroke-width="1"/><rect x="4" y="6.500" width="24" height="19.500" fill="#111"/><path d="M7 10l3 2-3 2" stroke="#ddd" stroke-width="1.200" fill="none"/><rect x="11" y="13.500" width="4" height="1" fill="#ddd"/></svg>
<svg style="left:364.3px;top:595.4px;opacity:.22;transform:scaleY(-1);transform-origin:50% 0;top:612.4px" width="18" height="7.2" viewBox="0 0 32 12.800" preserveAspectRatio="none"><g transform="translate(0,-19.200)"><rect x="2" y="4" width="28" height="24" rx="2" fill="#c4c4c4" stroke="#777" stroke-width="1"/><rect x="4" y="6.500" width="24" height="19.500" fill="#111"/><path d="M7 10l3 2-3 2" stroke="#ddd" stroke-width="1.200" fill="none"/><rect x="11" y="13.500" width="4" height="1" fill="#ddd"/></g></svg>
<svg style="left:385.7px;top:577.4px" width="18" height="18" viewBox="0 0 32 32"><circle cx="15" cy="17" r="12" fill="#3a3f5a" stroke="#1a1f3a" stroke-width="1"/><ellipse cx="13" cy="12" rx="7" ry="4.500" fill="#6a70a0" opacity=".7"/><path d="M29 2L13 24l-3 5 5-3L31 4z" fill="#c8ccd8" stroke="#4a4f6a" stroke-width=".8"/><path d="M10 29l3-5 2 2z" fill="#222"/></svg>
<svg style="left:385.7px;top:595.4px;opacity:.22;transform:scaleY(-1);transform-origin:50% 0;top:612.4px" width="18" height="7.2" viewBox="0 0 32 12.800" preserveAspectRatio="none"><g transform="translate(0,-19.200)"><circle cx="15" cy="17" r="12" fill="#3a3f5a" stroke="#1a1f3a" stroke-width="1"/><ellipse cx="13" cy="12" rx="7" ry="4.500" fill="#6a70a0" opacity=".7"/><path d="M29 2L13 24l-3 5 5-3L31 4z" fill="#c8ccd8" stroke="#4a4f6a" stroke-width=".8"/><path d="M10 29l3-5 2 2z" fill="#222"/></g></svg>
<svg style="left:405.9px;top:577.4px" width="18" height="18" viewBox="0 0 32 32"><path d="M2 22l20-6 8 6-20 8z" fill="#e4e8ec" stroke="#9aa" stroke-width=".6"/><rect x="6" y="15" width="5" height="9" fill="#e8b830"/><rect x="12" y="10" width="5" height="13" fill="#d84a3a"/><rect x="18" y="6" width="5" height="15" fill="#3a8ad8"/><rect x="24" y="2" width="5" height="18" fill="#4aa83a"/></svg>
<svg style="left:405.9px;top:595.4px;opacity:.22;transform:scaleY(-1);transform-origin:50% 0;top:612.4px" width="18" height="7.2" viewBox="0 0 32 12.800" preserveAspectRatio="none"><g transform="translate(0,-19.200)"><path d="M2 22l20-6 8 6-20 8z" fill="#e4e8ec" stroke="#9aa" stroke-width=".6"/><rect x="6" y="15" width="5" height="9" fill="#e8b830"/><rect x="12" y="10" width="5" height="13" fill="#d84a3a"/><rect x="18" y="6" width="5" height="15" fill="#3a8ad8"/><rect x="24" y="2" width="5" height="18" fill="#4aa83a"/></g></svg>
<svg style="left:426.0px;top:577.4px" width="18" height="18" viewBox="0 0 32 32"><rect x="2" y="2" width="28" height="28" rx="2" fill="#7a1216"/><rect x="3.500" y="3.500" width="25" height="25" fill="#b01c22"/><text x="16" y="23" font-size="17" font-weight="bold" text-anchor="middle" font-family="Liberation Sans" fill="#fff">Fl</text></svg>
<svg style="left:426.0px;top:595.4px;opacity:.22;transform:scaleY(-1);transform-origin:50% 0;top:612.4px" width="18" height="7.2" viewBox="0 0 32 12.800" preserveAspectRatio="none"><g transform="translate(0,-19.200)"><rect x="2" y="2" width="28" height="28" rx="2" fill="#7a1216"/><rect x="3.500" y="3.500" width="25" height="25" fill="#b01c22"/><text x="16" y="23" font-size="17" font-weight="bold" text-anchor="middle" font-family="Liberation Sans" fill="#fff">Fl</text></g></svg>
<svg style="left:446.2px;top:577.4px" width="18" height="18" viewBox="0 0 32 32"><rect x="2" y="2" width="28" height="28" rx="2" fill="#123a7a"/><rect x="3.500" y="3.500" width="25" height="25" fill="#1f62c0"/><text x="16" y="23" font-size="16" font-weight="bold" text-anchor="middle" font-family="Liberation Sans" fill="#e8f0ff">Ps</text></svg>
<svg style="left:446.2px;top:595.4px;opacity:.22;transform:scaleY(-1);transform-origin:50% 0;top:612.4px" width="18" height="7.2" viewBox="0 0 32 12.800" preserveAspectRatio="none"><g transform="translate(0,-19.200)"><rect x="2" y="2" width="28" height="28" rx="2" fill="#123a7a"/><rect x="3.500" y="3.500" width="25" height="25" fill="#1f62c0"/><text x="16" y="23" font-size="16" font-weight="bold" text-anchor="middle" font-family="Liberation Sans" fill="#e8f0ff">Ps</text></g></svg>
<svg style="left:468.1px;top:577.4px" width="18" height="18" viewBox="0 0 32 32"><rect x="2" y="3" width="28" height="27" rx="2" fill="#a8a4b4" stroke="#6a6678" stroke-width="1"/><rect x="5" y="6" width="22" height="21" fill="#6a1ab0"/><rect x="5" y="6" width="22" height="10" fill="#8a3ad0" opacity=".8"/></svg>
<svg style="left:468.1px;top:595.4px;opacity:.22;transform:scaleY(-1);transform-origin:50% 0;top:612.4px" width="18" height="7.2" viewBox="0 0 32 12.800" preserveAspectRatio="none"><g transform="translate(0,-19.200)"><rect x="2" y="3" width="28" height="27" rx="2" fill="#a8a4b4" stroke="#6a6678" stroke-width="1"/><rect x="5" y="6" width="22" height="21" fill="#6a1ab0"/><rect x="5" y="6" width="22" height="10" fill="#8a3ad0" opacity=".8"/></g></svg>
<svg style="left:488.8px;top:577.4px" width="18" height="18" viewBox="0 0 32 32"><path d="M6 13h20l-1.500 17h-17z" fill="#f0f2f4" stroke="#a8aab0" stroke-width=".8"/><rect x="7" y="19" width="18" height="4" fill="#58b8d8"/><path d="M9 2l4 3-1 3 2 6h-3l-2-6-3-1z" fill="#8a8a8a"/><path d="M20 2l2 1-1 11h-2z" fill="#d89030"/><path d="M24 4l3 2-4 8h-2z" fill="#555"/></svg>
<svg style="left:488.8px;top:595.4px;opacity:.22;transform:scaleY(-1);transform-origin:50% 0;top:612.4px" width="18" height="7.2" viewBox="0 0 32 12.800" preserveAspectRatio="none"><g transform="translate(0,-19.200)"><path d="M6 13h20l-1.500 17h-17z" fill="#f0f2f4" stroke="#a8aab0" stroke-width=".8"/><rect x="7" y="19" width="18" height="4" fill="#58b8d8"/><path d="M9 2l4 3-1 3 2 6h-3l-2-6-3-1z" fill="#8a8a8a"/><path d="M20 2l2 1-1 11h-2z" fill="#d89030"/><path d="M24 4l3 2-4 8h-2z" fill="#555"/></g></svg>
<svg style="left:508.5px;top:577.4px" width="18" height="18" viewBox="0 0 32 32"><rect x="2" y="2" width="28" height="28" rx="2.500" fill="#f07818"/><path d="M8 9c3 0 5 3 8 3s5-3 8-3v5c-2 0-3 1-3 2s1 2 3 2v5c-3 0-5-3-8-3s-5 3-8 3v-5c2 0 3-1 3-2s-1-2-3-2z" fill="#fff"/><rect x="13" y="14.500" width="6" height="3" fill="#f07818"/></svg>
<svg style="left:508.5px;top:595.4px;opacity:.22;transform:scaleY(-1);transform-origin:50% 0;top:612.4px" width="18" height="7.2" viewBox="0 0 32 12.800" preserveAspectRatio="none"><g transform="translate(0,-19.200)"><rect x="2" y="2" width="28" height="28" rx="2.500" fill="#f07818"/><path d="M8 9c3 0 5 3 8 3s5-3 8-3v5c-2 0-3 1-3 2s1 2 3 2v5c-3 0-5-3-8-3s-5 3-8 3v-5c2 0 3-1 3-2s-1-2-3-2z" fill="#fff"/><rect x="13" y="14.500" width="6" height="3" fill="#f07818"/></g></svg>
<svg style="left:529.1px;top:577.4px" width="18" height="18" viewBox="0 0 32 32"><circle cx="17" cy="15" r="12" fill="#2f6fd0"/><circle cx="19" cy="11" r="6.500" fill="#7ab4f0" opacity=".75"/><path d="M4.500 9C1.500 16 3 25 10 29c7 3.500 16 1 19-7 1-3 1-6 0-8 0 4-2 7-5 9 1-4-1-8-4-9 1 3-1 6-4 6-3 0-5-3-4-6 1-2 3-3 3-5-3 0-5 1-7 3 0-2 1-4 2-5-3 1-4 3-5.500 5z" fill="#f07a18"/><path d="M4.500 9C6 6 8 4 11 3c-1 2-1 3 0 5-3 0-5 0-6.500 1z" fill="#f8a030"/><path d="M10 29c7 3.500 16 1 19-7-3 5-12 8-19 7z" fill="#e85a10"/></svg>
<svg style="left:529.1px;top:595.4px;opacity:.22;transform:scaleY(-1);transform-origin:50% 0;top:612.4px" width="18" height="7.2" viewBox="0 0 32 12.800" preserveAspectRatio="none"><g transform="translate(0,-19.200)"><circle cx="17" cy="15" r="12" fill="#2f6fd0"/><circle cx="19" cy="11" r="6.500" fill="#7ab4f0" opacity=".75"/><path d="M4.500 9C1.500 16 3 25 10 29c7 3.500 16 1 19-7 1-3 1-6 0-8 0 4-2 7-5 9 1-4-1-8-4-9 1 3-1 6-4 6-3 0-5-3-4-6 1-2 3-3 3-5-3 0-5 1-7 3 0-2 1-4 2-5-3 1-4 3-5.500 5z" fill="#f07a18"/><path d="M4.500 9C6 6 8 4 11 3c-1 2-1 3 0 5-3 0-5 0-6.500 1z" fill="#f8a030"/><path d="M10 29c7 3.500 16 1 19-7-3 5-12 8-19 7z" fill="#e85a10"/></g></svg>
<svg style="left:549.3px;top:577.4px" width="18" height="18" viewBox="0 0 32 32"><path d="M5 5c3-4 9-3 10 2 1 4-2 6-1 9 1 2 4 1 6-2 2-4 5-7 10-5-3 1-4 4-5 7l6 3c-3 2-6 2-9 0-2 4-6 6-10 4l-2 7c-3-3-3-7 0-10-4-3-3-8-2-12 0-2-1-3-3-3z" fill="#4fae44"/><path d="M5 5c3-4 9-3 10 2-3-2-6-3-10-2z" fill="#8cd878"/><path d="M12 16c2 3 5 4 8 2" stroke="#2f8a2a" stroke-width="1.200" fill="none"/><circle cx="9" cy="7" r="1.200" fill="#1a4a18"/></svg>
<svg style="left:549.3px;top:595.4px;opacity:.22;transform:scaleY(-1);transform-origin:50% 0;top:612.4px" width="18" height="7.2" viewBox="0 0 32 12.800" preserveAspectRatio="none"><g transform="translate(0,-19.200)"><path d="M5 5c3-4 9-3 10 2 1 4-2 6-1 9 1 2 4 1 6-2 2-4 5-7 10-5-3 1-4 4-5 7l6 3c-3 2-6 2-9 0-2 4-6 6-10 4l-2 7c-3-3-3-7 0-10-4-3-3-8-2-12 0-2-1-3-3-3z" fill="#4fae44"/><path d="M5 5c3-4 9-3 10 2-3-2-6-3-10-2z" fill="#8cd878"/><path d="M12 16c2 3 5 4 8 2" stroke="#2f8a2a" stroke-width="1.200" fill="none"/><circle cx="9" cy="7" r="1.200" fill="#1a4a18"/></g></svg>
<div style="left:573.500px;top:587px;width:0.800px;height:12px;background:rgba(255,255,255,.12);"></div>
<svg style="left:580.8px;top:577.4px" width="18" height="18" viewBox="0 0 32 32"><path d="M7 3h14l5 5v22H7z" fill="#f6f6f6" stroke="#a8a8a8" stroke-width=".8"/><path d="M21 3v5h5z" fill="#d4d4d4"/><path d="M10 12h13M10 15h13M10 18h13M10 21h13M10 24h9" stroke="#d0d0d0" stroke-width="1"/></svg>
<svg style="left:580.8px;top:595.4px;opacity:.22;transform:scaleY(-1);transform-origin:50% 0;top:612.4px" width="18" height="7.2" viewBox="0 0 32 12.800" preserveAspectRatio="none"><g transform="translate(0,-19.200)"><path d="M7 3h14l5 5v22H7z" fill="#f6f6f6" stroke="#a8a8a8" stroke-width=".8"/><path d="M21 3v5h5z" fill="#d4d4d4"/><path d="M10 12h13M10 15h13M10 18h13M10 21h13M10 24h9" stroke="#d0d0d0" stroke-width="1"/></g></svg>
<svg style="left:601.0px;top:577.4px" width="18" height="18" viewBox="0 0 32 32"><path d="M7 5h14l5 5v20H7z" fill="#f6f6f6" stroke="#a8a8a8" stroke-width=".8"/><rect x="9" y="1" width="12" height="9" fill="#4ab83a"/><path d="M10 14h13v12H10z" fill="#c8e8c0"/><path d="M10 17h13M10 20h13M10 23h13M14 14v12M19 14v12" stroke="#6ab060" stroke-width=".8"/></svg>
<svg style="left:601.0px;top:595.4px;opacity:.22;transform:scaleY(-1);transform-origin:50% 0;top:612.4px" width="18" height="7.2" viewBox="0 0 32 12.800" preserveAspectRatio="none"><g transform="translate(0,-19.200)"><path d="M7 5h14l5 5v20H7z" fill="#f6f6f6" stroke="#a8a8a8" stroke-width=".8"/><rect x="9" y="1" width="12" height="9" fill="#4ab83a"/><path d="M10 14h13v12H10z" fill="#c8e8c0"/><path d="M10 17h13M10 20h13M10 23h13M14 14v12M19 14v12" stroke="#6ab060" stroke-width=".8"/></g></svg>
<svg style="left:622.4px;top:577.4px" width="18" height="18" viewBox="0 0 32 32"><path d="M5 9h22l-2.500 21h-17z" fill="#c4c8cc" stroke="#8a8e92" stroke-width=".8"/><path d="M5 9h22l-2.500 21h-17z" fill="url(#mesh)" /><ellipse cx="16" cy="9" rx="11" ry="3.200" fill="#e4e6e8" stroke="#8a8e92" stroke-width=".8"/><ellipse cx="16" cy="7.500" rx="8" ry="3.500" fill="#f4f4f4"/><path d="M8 12l2 17M12 12.500l1 17M16 13v17M20 12.500l-1 17M24 12l-2 17M6 15h20M6.500 20h19M7 25h18" stroke="#7a7e82" stroke-width=".7" opacity=".8"/></svg>
<svg style="left:622.4px;top:595.4px;opacity:.22;transform:scaleY(-1);transform-origin:50% 0;top:612.4px" width="18" height="7.2" viewBox="0 0 32 12.800" preserveAspectRatio="none"><g transform="translate(0,-19.200)"><path d="M5 9h22l-2.500 21h-17z" fill="#c4c8cc" stroke="#8a8e92" stroke-width=".8"/><path d="M5 9h22l-2.500 21h-17z" fill="url(#mesh)" /><ellipse cx="16" cy="9" rx="11" ry="3.200" fill="#e4e6e8" stroke="#8a8e92" stroke-width=".8"/><ellipse cx="16" cy="7.500" rx="8" ry="3.500" fill="#f4f4f4"/><path d="M8 12l2 17M12 12.500l1 17M16 13v17M20 12.500l-1 17M24 12l-2 17M6 15h20M6.500 20h19M7 25h18" stroke="#7a7e82" stroke-width=".7" opacity=".8"/></g></svg>
<div style="left:122px;top:598.200px;width:8px;height:5px;background:radial-gradient(ellipse 3.500px 2.200px at 50% 50%,#eaf6ff 0%,#a8d4f8 40%,rgba(150,200,250,0) 100%);"></div>
<div style="left:142.7px;top:598.200px;width:8px;height:5px;background:radial-gradient(ellipse 3.500px 2.200px at 50% 50%,#eaf6ff 0%,#a8d4f8 40%,rgba(150,200,250,0) 100%);"></div>
<div style="left:163.3px;top:598.200px;width:8px;height:5px;background:radial-gradient(ellipse 3.500px 2.200px at 50% 50%,#eaf6ff 0%,#a8d4f8 40%,rgba(150,200,250,0) 100%);"></div>
<div style="left:184.7px;top:598.200px;width:8px;height:5px;background:radial-gradient(ellipse 3.500px 2.200px at 50% 50%,#eaf6ff 0%,#a8d4f8 40%,rgba(150,200,250,0) 100%);"></div>
<div style="left:203.9px;top:598.200px;width:8px;height:5px;background:radial-gradient(ellipse 3.500px 2.200px at 50% 50%,#eaf6ff 0%,#a8d4f8 40%,rgba(150,200,250,0) 100%);"></div>
<div style="left:245.2px;top:598.200px;width:8px;height:5px;background:radial-gradient(ellipse 3.500px 2.200px at 50% 50%,#eaf6ff 0%,#a8d4f8 40%,rgba(150,200,250,0) 100%);"></div>
<div style="left:266.7px;top:598.200px;width:8px;height:5px;background:radial-gradient(ellipse 3.500px 2.200px at 50% 50%,#eaf6ff 0%,#a8d4f8 40%,rgba(150,200,250,0) 100%);"></div>
<div style="left:287.4px;top:598.200px;width:8px;height:5px;background:radial-gradient(ellipse 3.500px 2.200px at 50% 50%,#eaf6ff 0%,#a8d4f8 40%,rgba(150,200,250,0) 100%);"></div>
<div style="left:308.8px;top:598.200px;width:8px;height:5px;background:radial-gradient(ellipse 3.500px 2.200px at 50% 50%,#eaf6ff 0%,#a8d4f8 40%,rgba(150,200,250,0) 100%);"></div>
<div style="left:327.7px;top:598.200px;width:8px;height:5px;background:radial-gradient(ellipse 3.500px 2.200px at 50% 50%,#eaf6ff 0%,#a8d4f8 40%,rgba(150,200,250,0) 100%);"></div>
<div style="left:347.9px;top:598.200px;width:8px;height:5px;background:radial-gradient(ellipse 3.500px 2.200px at 50% 50%,#eaf6ff 0%,#a8d4f8 40%,rgba(150,200,250,0) 100%);"></div>
<div style="left:369.3px;top:598.200px;width:8px;height:5px;background:radial-gradient(ellipse 3.500px 2.200px at 50% 50%,#eaf6ff 0%,#a8d4f8 40%,rgba(150,200,250,0) 100%);"></div>
<div style="left:473.1px;top:598.200px;width:8px;height:5px;background:radial-gradient(ellipse 3.500px 2.200px at 50% 50%,#eaf6ff 0%,#a8d4f8 40%,rgba(150,200,250,0) 100%);"></div>
<div style="left:493.8px;top:598.200px;width:8px;height:5px;background:radial-gradient(ellipse 3.500px 2.200px at 50% 50%,#eaf6ff 0%,#a8d4f8 40%,rgba(150,200,250,0) 100%);"></div>
<div style="left:513.5px;top:598.200px;width:8px;height:5px;background:radial-gradient(ellipse 3.500px 2.200px at 50% 50%,#eaf6ff 0%,#a8d4f8 40%,rgba(150,200,250,0) 100%);"></div>
<div style="left:554.3px;top:598.200px;width:8px;height:5px;background:radial-gradient(ellipse 3.500px 2.200px at 50% 50%,#eaf6ff 0%,#a8d4f8 40%,rgba(150,200,250,0) 100%);"></div>
<!-- tooltip -->
<div style="left:519.500px;top:524.200px;width:123px;height:14.800px;background:rgba(42,44,42,0.76);border-radius:6px;box-shadow:0 1px 3px rgba(0,0,0,.5);"></div>
<div class="t" style="left:525.500px;top:526.800px;font-size:9px;color:#f4f4f4;font-weight:bold;letter-spacing:0.05px;text-shadow:0 0.500px 1px #000;">Terminal — bash — 80×24</div>
<!-- menubar -->
<div style="left:0;top:0;width:754px;height:12.6px;background:linear-gradient(180deg,#d9f5ca 0%,#c2eca9 45%,#a3e17f 85%,#8fd66a 100%);"></div>
<div style="left:0;top:12.6px;width:754px;height:2px;background:linear-gradient(180deg,rgba(0,0,0,0.55),rgba(0,0,0,0));"></div>
<svg style="left:12px;top:1px" width="10" height="10" viewBox="0 0 20 20"><path d="M13.2 1.2c.1 1.6-1.4 3.3-3 3.2-.2-1.500 1.400-3.200 3-3.200zM16.600 14.300c-.700 1.700-2 3.900-3.500 3.900-1.100 0-1.500-.700-2.800-.700-1.300 0-1.800.700-2.800.700-1.700 0-4.200-3.800-4.200-7 0-3.200 2-4.700 3.900-4.700 1.200 0 2.200.800 2.900.800.700 0 1.900-.900 3.400-.800 1 0 2.300.500 3 1.600-2.600 1.500-2.200 5.100.100 6.200z" fill="#133a12"/></svg>
<div class="t" style="left:32px;top:1.4px;font-size:9.0px;line-height:10px;color:#0d250c;font-weight:bold">Terminal</div>
<div class="t" style="left:81px;top:1.4px;font-size:8.7px;line-height:10px;color:#0d250c;font-weight:normal">Shell</div>
<div class="t" style="left:111px;top:1.4px;font-size:8.7px;line-height:10px;color:#0d250c;font-weight:normal">Edit</div>
<div class="t" style="left:137px;top:1.4px;font-size:8.7px;line-height:10px;color:#0d250c;font-weight:normal">View</div>
<div class="t" style="left:166px;top:1.4px;font-size:8.7px;line-height:10px;color:#0d250c;font-weight:normal">Window</div>
<div class="t" style="left:208px;top:1.4px;font-size:8.7px;line-height:10px;color:#0d250c;font-weight:normal">Help</div>
<div class="t" style="left:663.5px;top:1.4px;font-size:8.9px;line-height:10px;color:#0d250c;letter-spacing:0.05px">Wed 11:36 AM</div>
<svg style="left:491px;top:0.500px" width="11" height="11" viewBox="0 0 22 22"><circle cx="11" cy="9" r="7.500" fill="#10280f"/><circle cx="8" cy="8" r="2.200" fill="#cfe8c0"/><circle cx="14" cy="8" r="2.200" fill="#cfe8c0"/><circle cx="8" cy="8" r="1" fill="#10280f"/><circle cx="14" cy="8" r="1" fill="#10280f"/><path d="M4 20c1-3 3-4 7-4s6 1 7 4z" fill="#10280f"/></svg>
<div style="left:508px;top:1.800px;width:9.500px;height:8.400px;background:#1f9af0;border-radius:1px;transform:rotate(-3deg);"></div>
<div style="left:507.500px;top:1.500px;width:10px;height:2.200px;background:#48b0f8;border-radius:1px;transform:rotate(-3deg);"></div>
<svg style="left:523.500px;top:0.800px" width="11" height="10.500" viewBox="0 0 22 21"><path d="M6 1l5 3.500-5 3.500-5-3.500zM16 1l5 3.500-5 3.500-5-3.500zM1 11.500l5-3.500 5 3.500-5 3.500zM21 11.500l-5-3.500-5 3.500 5 3.500zM6 16.200l5-3.200 5 3.200-5 3.500z" fill="#10280f"/></svg>
<div style="left:538.500px;top:2px;width:12.500px;height:8.500px;border:1.100px solid #3a7a34;border-radius:1.500px;background:rgba(220,245,200,.5);"></div>
<svg style="left:556.500px;top:1px" width="10.500" height="10.500" viewBox="0 0 21 21"><path d="M10.500 1l3 4h-6zM10.500 20l3-4h-6zM1 10.500l4-3v6zM20 10.500l-4-3v6z" fill="#6aa858"/><circle cx="10.500" cy="10.500" r="2" fill="#4a8a3a"/></svg>
<svg style="left:572px;top:0.800px" width="13.500" height="10.500" viewBox="0 0 27 21"><path d="M2 7.500C8.500 1.500 18.500 1.500 25 7.500" stroke="#10280f" stroke-width="2.600" fill="none"/><path d="M6 11.500c4.500-4 10.500-4 15 0" stroke="#10280f" stroke-width="2.600" fill="none"/><path d="M9.800 15.300c2.400-2 5-2 7.400 0" stroke="#10280f" stroke-width="2.600" fill="none"/><circle cx="13.500" cy="18.500" r="1.900" fill="#10280f"/></svg>
<svg style="left:590.500px;top:0.800px" width="11.500" height="10.500" viewBox="0 0 23 21"><path d="M5.500 5A8 8 0 114 12" stroke="#10280f" stroke-width="2.200" fill="none"/><path d="M1.500 3.500l5.500 0.500-1.500 5z" fill="#10280f"/><path d="M12 6v5l3.500 2" stroke="#10280f" stroke-width="1.800" fill="none"/></svg>
<svg style="left:609.500px;top:2px" width="9.500" height="8.500" viewBox="0 0 19 17"><path d="M9.500 1l8 9h-16z" fill="#10280f"/><rect x="1.500" y="12.500" width="16" height="3" fill="#10280f"/></svg>
<svg style="left:626px;top:1.200px" width="13" height="10" viewBox="0 0 26 20"><path d="M1 7h4l6-5v16l-6-5H1z" fill="#10280f"/><path d="M14 6.500c1.600 2 1.600 5 0 7M17.500 4c3 3.500 3 8.500 0 12M21 1.800c4.200 5 4.200 11.400 0 16.400" stroke="#10280f" stroke-width="1.800" fill="none"/></svg>
<div style="left:644px;top:2.200px;width:12px;height:8px;background:linear-gradient(180deg,#c83a3a 0 14%,#f0e8e8 14% 28%,#c83a3a 28% 42%,#f0e8e8 42% 57%,#c83a3a 57% 71%,#f0e8e8 71% 85%,#c83a3a 85%);border:0.500px solid #555;"></div>
<div style="left:644.500px;top:2.700px;width:5.500px;height:4.300px;background:#2a3a8a;"></div>
<svg style="left:733px;top:1.200px" width="10.500" height="10.500" viewBox="0 0 21 21"><circle cx="8.500" cy="8.500" r="5.800" stroke="#10280f" stroke-width="2.400" fill="none"/><path d="M13 13l6 6" stroke="#10280f" stroke-width="2.800" stroke-linecap="round"/></svg>
</div></body></html>
